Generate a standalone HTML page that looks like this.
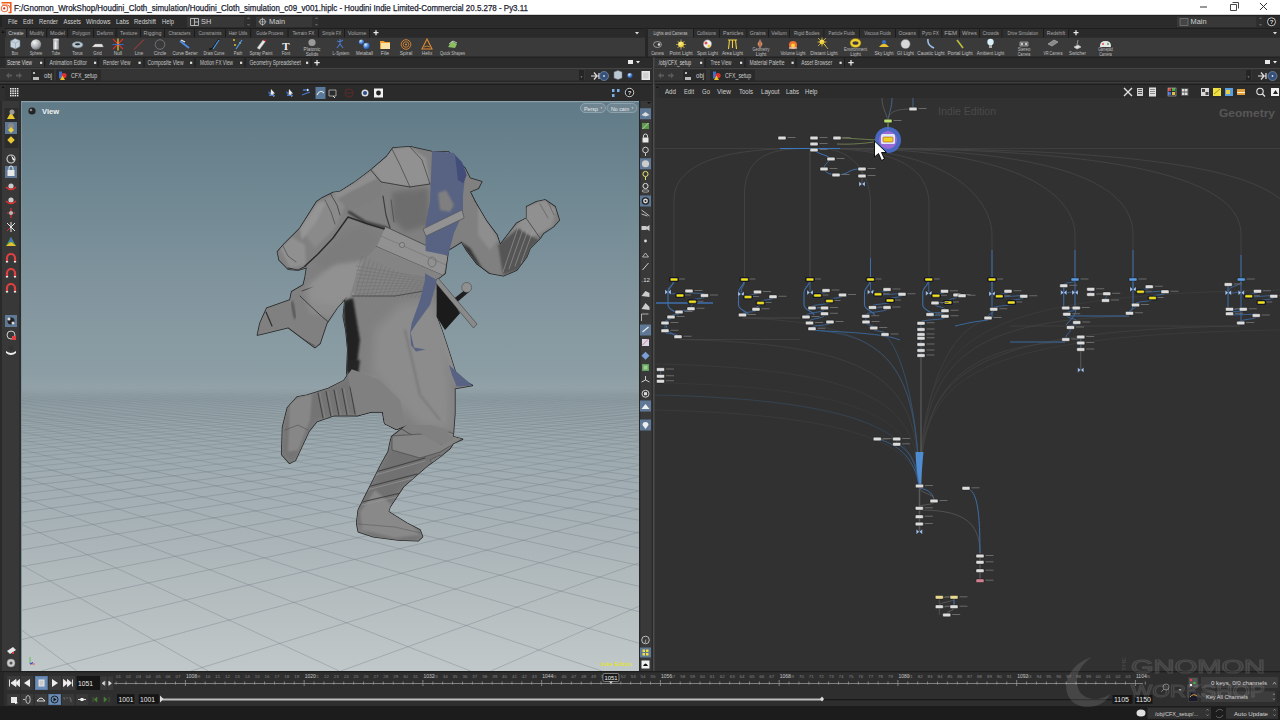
<!DOCTYPE html><html><head><meta charset="utf-8"><style>*{margin:0;padding:0;box-sizing:border-box}
html,body{width:1280px;height:720px;overflow:hidden;background:#2b2b2b;font-family:"Liberation Sans",sans-serif;color:#cfcfcf}
.a{position:absolute}
.t{position:absolute;white-space:nowrap}
</style></head><body>
<svg width="1280" height="720" viewBox="0 0 1280 720" style="position:absolute;left:0;top:0" font-family="Liberation Sans, sans-serif">
<rect x="0" y="0" width="1280" height="720" fill="#2b2b2b" />
<rect x="0" y="0" width="1280" height="15" fill="#ffffff" />
<path d="M1.5,2.8 H10.8 V12.5 H8.5" stroke="#f25a1a" fill="none" stroke-width="1.6" />
<path d="M2,5 H7.5 A3,3 0 0 1 10,8" stroke="#f26a30" fill="none" stroke-width="1.0" />
<circle cx="4.5" cy="8.5" r="3.2" fill="none" stroke="#f07040" stroke-width="1.1"/>
<circle cx="4.2" cy="8.4" r="1.1" fill="#e02010"/>
<text x="14" y="10.8" font-size="8.8" fill="#1b2332" text-anchor="start" font-weight="normal" textLength="514" lengthAdjust="spacingAndGlyphs" stroke="#1b2332" stroke-width="0.25">F:/Gnomon_WrokShop/Houdini_Cloth_simulation/Houdini_Cloth_simulation_c09_v001.hiplc - Houdini Indie Limited-Commercial 20.5.278 - Py3.11</text>
<rect x="1200" y="6.5" width="7" height="1" fill="#333" />
<path d="M1230.5,4.5 h6 v6 h-6 z M1232.5,2.5 h6 v6" stroke="#333" fill="none" stroke-width="0.9" />
<path d="M1260,3 L1267,10 M1267,3 L1260,10" stroke="#333" fill="none" stroke-width="1" />
<rect x="0" y="15" width="1280" height="13" fill="#2b2b2b" />
<rect x="0" y="14.8" width="1280" height="1.2" fill="#1f1f1f" />
<rect x="0" y="15" width="2" height="45" fill="#232323" />
<text x="8" y="24.3" font-size="7.6" fill="#d4d4d4" text-anchor="start" font-weight="normal" textLength="9.5" lengthAdjust="spacingAndGlyphs" >File</text>
<text x="23" y="24.3" font-size="7.6" fill="#d4d4d4" text-anchor="start" font-weight="normal" textLength="10" lengthAdjust="spacingAndGlyphs" >Edit</text>
<text x="39" y="24.3" font-size="7.6" fill="#d4d4d4" text-anchor="start" font-weight="normal" textLength="19" lengthAdjust="spacingAndGlyphs" >Render</text>
<text x="63.6" y="24.3" font-size="7.6" fill="#d4d4d4" text-anchor="start" font-weight="normal" textLength="17.4" lengthAdjust="spacingAndGlyphs" >Assets</text>
<text x="86" y="24.3" font-size="7.6" fill="#d4d4d4" text-anchor="start" font-weight="normal" textLength="24.6" lengthAdjust="spacingAndGlyphs" >Windows</text>
<text x="116" y="24.3" font-size="7.6" fill="#d4d4d4" text-anchor="start" font-weight="normal" textLength="13" lengthAdjust="spacingAndGlyphs" >Labs</text>
<text x="134" y="24.3" font-size="7.6" fill="#d4d4d4" text-anchor="start" font-weight="normal" textLength="22" lengthAdjust="spacingAndGlyphs" >Redshift</text>
<text x="162" y="24.3" font-size="7.6" fill="#d4d4d4" text-anchor="start" font-weight="normal" textLength="12" lengthAdjust="spacingAndGlyphs" >Help</text>
<rect x="187" y="16.5" width="64" height="10.5" fill="#383838" />
<rect x="244" y="16.5" width="7" height="10.5" fill="#2e2e2e" />
<path d="M190.5,18.5 h8 v7 h-8 z M194.5,18.5 v7 M194.5,22 h4" stroke="#cfcfcf" fill="none" stroke-width="0.8" />
<text x="201" y="24.2" font-size="7.4" fill="#d0d0d0" text-anchor="start" font-weight="normal" >SH</text>
<path d="M247.5,19 l1,-1.3 l1,1.3 M247.5,24 l1,1.3 l1,-1.3" stroke="#9a9a9a" fill="none" stroke-width="0.6" />
<rect x="256" y="16.5" width="63" height="10.5" fill="#383838" />
<rect x="312" y="16.5" width="7" height="10.5" fill="#2e2e2e" />
<circle cx="262.5" cy="21.8" r="2.8" fill="none" stroke="#cfcfcf" stroke-width="0.8"/>
<path d="M258.5,21.8 h8 M262.5,17.8 v8" stroke="#cfcfcf" fill="none" stroke-width="0.6" />
<text x="269" y="24.2" font-size="7.4" fill="#d0d0d0" text-anchor="start" font-weight="normal" >Main</text>
<path d="M315.5,19 l1,-1.3 l1,1.3 M315.5,24 l1,1.3 l1,-1.3" stroke="#9a9a9a" fill="none" stroke-width="0.6" />
<rect x="1177" y="16.5" width="87" height="10.5" fill="#383838" />
<rect x="1256" y="16.5" width="8" height="10.5" fill="#2e2e2e" />
<path d="M1180,18.5 h8 v7 h-8 z" stroke="#999" fill="#444" stroke-width="0.5" />
<text x="1190.5" y="24.2" font-size="7.4" fill="#d0d0d0" text-anchor="start" font-weight="normal" >Main</text>
<path d="M1259.5,19 l1,-1.3 l1,1.3 M1259.5,24 l1,1.3 l1,-1.3" stroke="#9a9a9a" fill="none" stroke-width="0.6" />
<circle cx="1271.5" cy="21.8" r="4" fill="#1a1a1a" stroke="#d8d8d8" stroke-width="0.9"/>
<text x="1271.5" y="24.3" font-size="6" fill="#e0e0e0" text-anchor="middle" font-weight="bold" >?</text>
<rect x="0" y="37.5" width="645" height="20" fill="#3a3a3a" />
<rect x="0" y="27" width="5" height="31" fill="#2d2d2d" />
<path d="M1.5,33 l1.5,-2.5 l1.5,2.5 z" stroke="none" fill="#111" stroke-width="1" />
<rect x="5" y="28" width="640" height="9.5" fill="#2a2a2a" />
<rect x="5" y="28" width="640" height="1" fill="#1e1e1e" />
<rect x="6" y="29" width="21" height="8.6" fill="#3a3a3a" />
<rect x="26" y="29" width="1" height="8.5" fill="#1c1c1c" />
<text x="16.0" y="35.3" font-size="5.6" fill="#c8c8c8" text-anchor="middle" font-weight="normal" textLength="15.54" lengthAdjust="spacingAndGlyphs" >Create</text>
<rect x="27.5" y="29" width="19.5" height="8.6" fill="#2f2f2f" />
<rect x="46" y="29" width="1" height="8.5" fill="#1c1c1c" />
<text x="36.75" y="35.3" font-size="5.6" fill="#a9a9a9" text-anchor="middle" font-weight="normal" textLength="14.43" lengthAdjust="spacingAndGlyphs" >Modify</text>
<rect x="48" y="29" width="20" height="8.6" fill="#2f2f2f" />
<rect x="67" y="29" width="1" height="8.5" fill="#1c1c1c" />
<text x="57.5" y="35.3" font-size="5.6" fill="#a9a9a9" text-anchor="middle" font-weight="normal" textLength="14.8" lengthAdjust="spacingAndGlyphs" >Model</text>
<rect x="69.5" y="29" width="24.5" height="8.6" fill="#2f2f2f" />
<rect x="93" y="29" width="1" height="8.5" fill="#1c1c1c" />
<text x="81.25" y="35.3" font-size="5.6" fill="#a9a9a9" text-anchor="middle" font-weight="normal" textLength="18.13" lengthAdjust="spacingAndGlyphs" >Polygon</text>
<rect x="94.5" y="29" width="22.0" height="8.6" fill="#2f2f2f" />
<rect x="115.5" y="29" width="1" height="8.5" fill="#1c1c1c" />
<text x="105.0" y="35.3" font-size="5.6" fill="#a9a9a9" text-anchor="middle" font-weight="normal" textLength="16.28" lengthAdjust="spacingAndGlyphs" >Deform</text>
<rect x="117.5" y="29" width="23.5" height="8.6" fill="#2f2f2f" />
<rect x="140" y="29" width="1" height="8.5" fill="#1c1c1c" />
<text x="128.75" y="35.3" font-size="5.6" fill="#a9a9a9" text-anchor="middle" font-weight="normal" textLength="17.39" lengthAdjust="spacingAndGlyphs" >Texture</text>
<rect x="141" y="29" width="24" height="8.6" fill="#2f2f2f" />
<rect x="164" y="29" width="1" height="8.5" fill="#1c1c1c" />
<text x="152.5" y="35.3" font-size="5.6" fill="#a9a9a9" text-anchor="middle" font-weight="normal" textLength="17.759999999999998" lengthAdjust="spacingAndGlyphs" >Rigging</text>
<rect x="165" y="29" width="30" height="8.6" fill="#2f2f2f" />
<rect x="194" y="29" width="1" height="8.5" fill="#1c1c1c" />
<text x="179.5" y="35.3" font-size="5.6" fill="#a9a9a9" text-anchor="middle" font-weight="normal" textLength="22.2" lengthAdjust="spacingAndGlyphs" >Characters</text>
<rect x="195" y="29" width="31" height="8.6" fill="#2f2f2f" />
<rect x="225" y="29" width="1" height="8.5" fill="#1c1c1c" />
<text x="210.0" y="35.3" font-size="5.6" fill="#a9a9a9" text-anchor="middle" font-weight="normal" textLength="22.94" lengthAdjust="spacingAndGlyphs" >Constraints</text>
<rect x="226" y="29" width="25" height="8.6" fill="#2f2f2f" />
<rect x="250" y="29" width="1" height="8.5" fill="#1c1c1c" />
<text x="238.0" y="35.3" font-size="5.6" fill="#a9a9a9" text-anchor="middle" font-weight="normal" textLength="18.5" lengthAdjust="spacingAndGlyphs" >Hair Utils</text>
<rect x="252" y="29" width="36.5" height="8.6" fill="#2f2f2f" />
<rect x="287.5" y="29" width="1" height="8.5" fill="#1c1c1c" />
<text x="269.75" y="35.3" font-size="5.6" fill="#a9a9a9" text-anchor="middle" font-weight="normal" textLength="27.009999999999998" lengthAdjust="spacingAndGlyphs" >Guide Process</text>
<rect x="289" y="29" width="30" height="8.6" fill="#2f2f2f" />
<rect x="318" y="29" width="1" height="8.5" fill="#1c1c1c" />
<text x="303.5" y="35.3" font-size="5.6" fill="#a9a9a9" text-anchor="middle" font-weight="normal" textLength="22.2" lengthAdjust="spacingAndGlyphs" >Terrain FX</text>
<rect x="319.5" y="29" width="25.5" height="8.6" fill="#2f2f2f" />
<rect x="344" y="29" width="1" height="8.5" fill="#1c1c1c" />
<text x="331.75" y="35.3" font-size="5.6" fill="#a9a9a9" text-anchor="middle" font-weight="normal" textLength="18.87" lengthAdjust="spacingAndGlyphs" >Simple FX</text>
<rect x="345" y="29" width="25" height="8.6" fill="#2f2f2f" />
<rect x="369" y="29" width="1" height="8.5" fill="#1c1c1c" />
<text x="357.0" y="35.3" font-size="5.6" fill="#a9a9a9" text-anchor="middle" font-weight="normal" textLength="18.5" lengthAdjust="spacingAndGlyphs" >Volume</text>
<path d="M373.5,32.7 h5 M376,30.2 v5" stroke="#e8e8e8" fill="none" stroke-width="1.3" />
<path d="M635,32 l2,2.5 l2,-2.5 z" stroke="none" fill="#ddd" stroke-width="1" />
<rect x="645" y="27" width="3" height="31" fill="#262626" />
<rect x="648" y="37.5" width="632" height="20" fill="#3a3a3a" />
<rect x="648" y="28" width="632" height="9.5" fill="#2a2a2a" />
<rect x="648" y="28" width="632" height="1" fill="#1e1e1e" />
<rect x="648" y="29" width="46" height="8.6" fill="#3a3a3a" />
<rect x="693" y="29" width="1" height="8.5" fill="#1c1c1c" />
<text x="670.5" y="35.3" font-size="5.6" fill="#c8c8c8" text-anchor="middle" font-weight="normal" textLength="34.04" lengthAdjust="spacingAndGlyphs" >Lights and Cameras</text>
<rect x="694" y="29" width="26" height="8.6" fill="#2f2f2f" />
<rect x="719" y="29" width="1" height="8.5" fill="#1c1c1c" />
<text x="706.5" y="35.3" font-size="5.6" fill="#a9a9a9" text-anchor="middle" font-weight="normal" textLength="19.24" lengthAdjust="spacingAndGlyphs" >Collisions</text>
<rect x="720" y="29" width="27.5" height="8.6" fill="#2f2f2f" />
<rect x="746.5" y="29" width="1" height="8.5" fill="#1c1c1c" />
<text x="733.25" y="35.3" font-size="5.6" fill="#a9a9a9" text-anchor="middle" font-weight="normal" textLength="20.35" lengthAdjust="spacingAndGlyphs" >Particles</text>
<rect x="747.5" y="29" width="21.5" height="8.6" fill="#2f2f2f" />
<rect x="768" y="29" width="1" height="8.5" fill="#1c1c1c" />
<text x="757.75" y="35.3" font-size="5.6" fill="#a9a9a9" text-anchor="middle" font-weight="normal" textLength="15.91" lengthAdjust="spacingAndGlyphs" >Grains</text>
<rect x="769" y="29" width="21" height="8.6" fill="#2f2f2f" />
<rect x="789" y="29" width="1" height="8.5" fill="#1c1c1c" />
<text x="779.0" y="35.3" font-size="5.6" fill="#a9a9a9" text-anchor="middle" font-weight="normal" textLength="15.54" lengthAdjust="spacingAndGlyphs" >Vellum</text>
<rect x="790" y="29" width="34.5" height="8.6" fill="#2f2f2f" />
<rect x="823.5" y="29" width="1" height="8.5" fill="#1c1c1c" />
<text x="806.75" y="35.3" font-size="5.6" fill="#a9a9a9" text-anchor="middle" font-weight="normal" textLength="25.53" lengthAdjust="spacingAndGlyphs" >Rigid Bodies</text>
<rect x="824.5" y="29" width="35.5" height="8.6" fill="#2f2f2f" />
<rect x="859" y="29" width="1" height="8.5" fill="#1c1c1c" />
<text x="841.75" y="35.3" font-size="5.6" fill="#a9a9a9" text-anchor="middle" font-weight="normal" textLength="26.27" lengthAdjust="spacingAndGlyphs" >Particle Fluids</text>
<rect x="860" y="29" width="36" height="8.6" fill="#2f2f2f" />
<rect x="895" y="29" width="1" height="8.5" fill="#1c1c1c" />
<text x="877.5" y="35.3" font-size="5.6" fill="#a9a9a9" text-anchor="middle" font-weight="normal" textLength="26.64" lengthAdjust="spacingAndGlyphs" >Viscous Fluids</text>
<rect x="896" y="29" width="23.5" height="8.6" fill="#2f2f2f" />
<rect x="918.5" y="29" width="1" height="8.5" fill="#1c1c1c" />
<text x="907.25" y="35.3" font-size="5.6" fill="#a9a9a9" text-anchor="middle" font-weight="normal" textLength="17.39" lengthAdjust="spacingAndGlyphs" >Oceans</text>
<rect x="919.5" y="29" width="23.0" height="8.6" fill="#2f2f2f" />
<rect x="941.5" y="29" width="1" height="8.5" fill="#1c1c1c" />
<text x="930.5" y="35.3" font-size="5.6" fill="#a9a9a9" text-anchor="middle" font-weight="normal" textLength="17.02" lengthAdjust="spacingAndGlyphs" >Pyro FX</text>
<rect x="942.5" y="29" width="17.5" height="8.6" fill="#2f2f2f" />
<rect x="959" y="29" width="1" height="8.5" fill="#1c1c1c" />
<text x="950.75" y="35.3" font-size="5.6" fill="#a9a9a9" text-anchor="middle" font-weight="normal" textLength="12.95" lengthAdjust="spacingAndGlyphs" >FEM</text>
<rect x="960" y="29" width="20" height="8.6" fill="#2f2f2f" />
<rect x="979" y="29" width="1" height="8.5" fill="#1c1c1c" />
<text x="969.5" y="35.3" font-size="5.6" fill="#a9a9a9" text-anchor="middle" font-weight="normal" textLength="14.8" lengthAdjust="spacingAndGlyphs" >Wires</text>
<rect x="980" y="29" width="22.5" height="8.6" fill="#2f2f2f" />
<rect x="1001.5" y="29" width="1" height="8.5" fill="#1c1c1c" />
<text x="990.75" y="35.3" font-size="5.6" fill="#a9a9a9" text-anchor="middle" font-weight="normal" textLength="16.65" lengthAdjust="spacingAndGlyphs" >Crowds</text>
<rect x="1002.5" y="29" width="41.5" height="8.6" fill="#2f2f2f" />
<rect x="1043" y="29" width="1" height="8.5" fill="#1c1c1c" />
<text x="1022.75" y="35.3" font-size="5.6" fill="#a9a9a9" text-anchor="middle" font-weight="normal" textLength="30.71" lengthAdjust="spacingAndGlyphs" >Drive Simulation</text>
<rect x="1044" y="29" width="25" height="8.6" fill="#2f2f2f" />
<rect x="1068" y="29" width="1" height="8.5" fill="#1c1c1c" />
<text x="1056.0" y="35.3" font-size="5.6" fill="#a9a9a9" text-anchor="middle" font-weight="normal" textLength="18.5" lengthAdjust="spacingAndGlyphs" >Redshift</text>
<path d="M1073.5,32.7 h5 M1076,30.2 v5" stroke="#e8e8e8" fill="none" stroke-width="1.3" />
<path d="M1273,32 l2,2.5 l2,-2.5 z" stroke="none" fill="#ddd" stroke-width="1" />
<defs>
<radialGradient id="gsph" cx="0.35" cy="0.3" r="0.8"><stop offset="0" stop-color="#f4f4f4"/><stop offset="0.6" stop-color="#a9adb2"/><stop offset="1" stop-color="#5e6368"/></radialGradient>
<radialGradient id="bsph" cx="0.35" cy="0.3" r="0.8"><stop offset="0" stop-color="#dfefff"/><stop offset="0.5" stop-color="#4f86d8"/><stop offset="1" stop-color="#1b3f86"/></radialGradient>
<radialGradient id="ysph" cx="0.4" cy="0.35" r="0.8"><stop offset="0" stop-color="#fffbd0"/><stop offset="0.5" stop-color="#f1d23a"/><stop offset="1" stop-color="#9b7a10"/></radialGradient>
<linearGradient id="gcyl" x1="0" x2="1"><stop offset="0" stop-color="#8c9196"/><stop offset="0.4" stop-color="#eef0f2"/><stop offset="1" stop-color="#7d8287"/></linearGradient>
</defs>
<path d="M10.5,41 l4.5,-2.5 l5,2 v6 l-4.5,2.5 l-5,-2 z" stroke="#6d7a84" fill="#c5d3dc" stroke-width="0.6" />
<path d="M10.5,41 l5,2 l4.5,-2.3 M15.5,43 v6" stroke="#8796a0" fill="none" stroke-width="0.5" />
<text x="15" y="55.2" font-size="5.2" fill="#c0c0c0" text-anchor="middle" font-weight="normal" textLength="6.300000000000001" lengthAdjust="spacingAndGlyphs" >Box</text>
<circle cx="36" cy="44.5" r="5.2" fill="url(#gsph)"/>
<text x="36" y="55.2" font-size="5.2" fill="#c0c0c0" text-anchor="middle" font-weight="normal" textLength="12.600000000000001" lengthAdjust="spacingAndGlyphs" >Sphere</text>
<path d="M53,39.5 h6 v10 h-6 z" stroke="none" fill="url(#gcyl)" stroke-width="1" />
<ellipse cx="56" cy="39.8" rx="3" ry="1.2" fill="#dfe3e6" stroke="#777" stroke-width="0.4"/>
<text x="56" y="55.2" font-size="5.2" fill="#c0c0c0" text-anchor="middle" font-weight="normal" textLength="8.4" lengthAdjust="spacingAndGlyphs" >Tube</text>
<ellipse cx="77.5" cy="44.8" rx="5.5" ry="3.2" fill="#b4c2cc" stroke="#5c6b76" stroke-width="0.6"/><ellipse cx="77.5" cy="44.3" rx="2.5" ry="1" fill="#1e2830"/>
<text x="77.5" y="55.2" font-size="5.2" fill="#c0c0c0" text-anchor="middle" font-weight="normal" textLength="10.5" lengthAdjust="spacingAndGlyphs" >Torus</text>
<path d="M92,47 l3,-3 h7 l1.5,3 z" stroke="#777" fill="#e6e6e6" stroke-width="0.4" />
<text x="97.5" y="55.2" font-size="5.2" fill="#c0c0c0" text-anchor="middle" font-weight="normal" textLength="8.4" lengthAdjust="spacingAndGlyphs" >Grid</text>
<path d="M113,39 l10,10 M123,39 l-10,10" stroke="#d93030" fill="none" stroke-width="1.1" />
<path d="M118,38.5 v12" stroke="#e8d020" fill="none" stroke-width="1.2" />
<path d="M112.5,44.5 h11" stroke="#3a6fd8" fill="none" stroke-width="0.9" />
<text x="118" y="55.2" font-size="5.2" fill="#c0c0c0" text-anchor="middle" font-weight="normal" textLength="8.4" lengthAdjust="spacingAndGlyphs" >Null</text>
<path d="M134,49.5 l10,-10" stroke="#c83a3a" fill="none" stroke-width="0.9" />
<text x="139" y="55.2" font-size="5.2" fill="#c0c0c0" text-anchor="middle" font-weight="normal" textLength="8.4" lengthAdjust="spacingAndGlyphs" >Line</text>
<circle cx="160" cy="44.5" r="4.8" fill="none" stroke="#7a8088" stroke-width="0.8"/>
<text x="160" y="55.2" font-size="5.2" fill="#c0c0c0" text-anchor="middle" font-weight="normal" textLength="12.600000000000001" lengthAdjust="spacingAndGlyphs" >Circle</text>
<path d="M180,41 l9,7" stroke="#4a8ae0" fill="none" stroke-width="2" />
<path d="M181,40 l4,2" stroke="#eee" fill="none" stroke-width="1.2" />
<text x="185" y="55.2" font-size="5.2" fill="#c0c0c0" text-anchor="middle" font-weight="normal" textLength="25.200000000000003" lengthAdjust="spacingAndGlyphs" >Curve Bezier</text>
<path d="M209,49 q3,1 5,-3 M214,46 l5,-7" stroke="#111" fill="none" stroke-width="1.2" />
<path d="M213,49 l6,-9" stroke="#4a9ae8" fill="none" stroke-width="1.2" />
<text x="214" y="55.2" font-size="5.2" fill="#c0c0c0" text-anchor="middle" font-weight="normal" textLength="21.0" lengthAdjust="spacingAndGlyphs" >Draw Curve</text>
<circle cx="234" cy="40" r="0.9" fill="#e8d030"/><circle cx="235" cy="45" r="0.9" fill="#e8d030"/><circle cx="240" cy="43" r="0.9" fill="#e8d030"/>
<path d="M236,49 l6,-9" stroke="#4a9ae8" fill="none" stroke-width="1.2" />
<text x="238" y="55.2" font-size="5.2" fill="#c0c0c0" text-anchor="middle" font-weight="normal" textLength="8.4" lengthAdjust="spacingAndGlyphs" >Path</text>
<path d="M257,48 l6,-8 l2.5,1.5 l-6,8 z" stroke="#888" fill="#e6e6e6" stroke-width="0.4" />
<path d="M263,40 l2.5,1.5 l1,-2" stroke="none" fill="#d02020" stroke-width="1" />
<text x="261" y="55.2" font-size="5.2" fill="#c0c0c0" text-anchor="middle" font-weight="normal" textLength="23.1" lengthAdjust="spacingAndGlyphs" >Spray Paint</text>
<text x="286" y="50" font-size="11" fill="#f0f0f0" text-anchor="middle" font-weight="bold" font-family="Liberation Serif">T</text>
<text x="286" y="55.2" font-size="5.2" fill="#c0c0c0" text-anchor="middle" font-weight="normal" textLength="8.4" lengthAdjust="spacingAndGlyphs" >Font</text>
<circle cx="312" cy="42.5" r="3.6" fill="#9a9a9a"/>
<text x="312" y="50.6" font-size="5.2" fill="#c0c0c0" text-anchor="middle" font-weight="normal" textLength="16.8" lengthAdjust="spacingAndGlyphs" >Platonic</text>
<text x="312" y="55.8" font-size="5.2" fill="#c0c0c0" text-anchor="middle" font-weight="normal" textLength="12.600000000000001" lengthAdjust="spacingAndGlyphs" >Solids</text>
<path d="M337,48 l3,-4 l3,4 M340,44 v-5 M337,41 l3,1 l3,-2" stroke="#4b78c8" fill="none" stroke-width="1.1" />
<text x="341" y="55.2" font-size="5.2" fill="#c0c0c0" text-anchor="middle" font-weight="normal" textLength="16.8" lengthAdjust="spacingAndGlyphs" >L-System</text>
<circle cx="361.5" cy="42" r="2.6" fill="url(#bsph)"/><circle cx="366.5" cy="46" r="3.2" fill="url(#bsph)"/>
<text x="364.5" y="55.2" font-size="5.2" fill="#c0c0c0" text-anchor="middle" font-weight="normal" textLength="16.8" lengthAdjust="spacingAndGlyphs" >Metaball</text>
<path d="M380,41 h4 l1,1 h5 v7 h-10 z" stroke="none" fill="#f0a030" stroke-width="1" />
<path d="M381,43 h9 v6 h-9 z" stroke="none" fill="#f7e3a8" stroke-width="1" />
<text x="385" y="55.2" font-size="5.2" fill="#c0c0c0" text-anchor="middle" font-weight="normal" textLength="8.4" lengthAdjust="spacingAndGlyphs" >File</text>
<circle cx="406" cy="44.5" r="4.8" fill="none" stroke="#e08a30" stroke-width="0.9"/><circle cx="406" cy="44.5" r="2.8" fill="none" stroke="#e08a30" stroke-width="0.8"/><circle cx="406" cy="44.5" r="1" fill="#e08a30"/>
<text x="406" y="55.2" font-size="5.2" fill="#c0c0c0" text-anchor="middle" font-weight="normal" textLength="12.600000000000001" lengthAdjust="spacingAndGlyphs" >Spiral</text>
<path d="M422,49 l5,-10 l5,10 z" stroke="#e08a30" fill="none" stroke-width="1.1" />
<path d="M424,47 q3,-2 6,0" stroke="#e08a30" fill="none" stroke-width="0.8" />
<text x="427" y="55.2" font-size="5.2" fill="#c0c0c0" text-anchor="middle" font-weight="normal" textLength="10.5" lengthAdjust="spacingAndGlyphs" >Helix</text>
<path d="M448,47 l4,-6 l5,3 l-2,4 z" stroke="none" fill="#8ac060" stroke-width="1" />
<path d="M449,44 l4,-3 l4,2" stroke="#e0e0e0" fill="none" stroke-width="0.8" />
<text x="452.5" y="55.2" font-size="5.2" fill="#c0c0c0" text-anchor="middle" font-weight="normal" textLength="25.200000000000003" lengthAdjust="spacingAndGlyphs" >Quick Shapes</text>
<ellipse cx="657.5" cy="44.5" rx="4" ry="3" fill="#3a3a3a" stroke="#bfbfbf" stroke-width="0.7"/><circle cx="659" cy="44.5" r="1.3" fill="#ddd"/>
<text x="657.5" y="55.2" font-size="5.2" fill="#c0c0c0" text-anchor="middle" font-weight="normal" textLength="12.600000000000001" lengthAdjust="spacingAndGlyphs" >Camera</text>
<circle cx="681" cy="44.5" r="3" fill="url(#ysph)"/>
<path d="M676,44.5 h10 M681,39.5 v10 M677.5,41 l7,7 M684.5,41 l-7,7" stroke="#f2df70" fill="none" stroke-width="0.6" />
<text x="681" y="55.2" font-size="5.2" fill="#c0c0c0" text-anchor="middle" font-weight="normal" textLength="23.1" lengthAdjust="spacingAndGlyphs" >Point Light</text>
<circle cx="707.5" cy="44" r="4.2" fill="#f0f0f0" stroke="#777" stroke-width="0.5"/><circle cx="706" cy="43" r="1.5" fill="#e05050"/><circle cx="709" cy="46" r="1.6" fill="#f0c840"/>
<text x="707.5" y="55.2" font-size="5.2" fill="#c0c0c0" text-anchor="middle" font-weight="normal" textLength="21.0" lengthAdjust="spacingAndGlyphs" >Spot Light</text>
<path d="M728,40 h9 M729.5,40 l-1,9 M735.5,40 l1,9 M732.5,40 v8" stroke="#f0d040" fill="none" stroke-width="1.1" />
<text x="732.5" y="55.2" font-size="5.2" fill="#c0c0c0" text-anchor="middle" font-weight="normal" textLength="21.0" lengthAdjust="spacingAndGlyphs" >Area Light</text>
<path d="M760,39 l-2.5,5 l2.5,5 l2.5,-5 z" stroke="none" fill="#e09040" stroke-width="1" />
<path d="M760,40 v8" stroke="#6050c0" fill="none" stroke-width="0.8" />
<text x="761" y="50.6" font-size="5.2" fill="#c0c0c0" text-anchor="middle" font-weight="normal" textLength="16.8" lengthAdjust="spacingAndGlyphs" >Geometry</text>
<text x="761" y="55.8" font-size="5.2" fill="#c0c0c0" text-anchor="middle" font-weight="normal" textLength="10.5" lengthAdjust="spacingAndGlyphs" >Light</text>
<circle cx="793" cy="45" r="4" fill="#f07030"/><circle cx="793" cy="45.5" r="2" fill="#ffd040"/>
<path d="M789,48 h8" stroke="#eee" fill="none" stroke-width="1" />
<text x="793" y="55.2" font-size="5.2" fill="#c0c0c0" text-anchor="middle" font-weight="normal" textLength="25.200000000000003" lengthAdjust="spacingAndGlyphs" >Volume Light</text>
<circle cx="822" cy="42" r="2.5" fill="url(#ysph)"/>
<path d="M818,38 l8,8 M822,37.5 v9 M817.5,42 h9 M818,46 l8,-8 M824,44 l4,5" stroke="#f0d040" fill="none" stroke-width="0.7" />
<text x="824" y="55.2" font-size="5.2" fill="#c0c0c0" text-anchor="middle" font-weight="normal" textLength="27.3" lengthAdjust="spacingAndGlyphs" >Distant Light</text>
<ellipse cx="855.5" cy="43" rx="5.5" ry="4.5" fill="#f1cf30" stroke="#7a6010" stroke-width="0.5"/><ellipse cx="855.5" cy="43" rx="3" ry="1.8" fill="#3a3a3a"/>
<text x="855.5" y="50.6" font-size="5.2" fill="#c0c0c0" text-anchor="middle" font-weight="normal" textLength="23.1" lengthAdjust="spacingAndGlyphs" >Environment</text>
<text x="855.5" y="55.8" font-size="5.2" fill="#c0c0c0" text-anchor="middle" font-weight="normal" textLength="10.5" lengthAdjust="spacingAndGlyphs" >Light</text>
<path d="M879,47 q5,-7 10,0 z" stroke="none" fill="#e8c030" stroke-width="1" />
<circle cx="884" cy="42" r="2" fill="#3a70c0"/>
<text x="884" y="55.2" font-size="5.2" fill="#c0c0c0" text-anchor="middle" font-weight="normal" textLength="18.900000000000002" lengthAdjust="spacingAndGlyphs" >Sky Light</text>
<circle cx="905.5" cy="44" r="4.6" fill="#d8d8d8" stroke="#888" stroke-width="0.5"/>
<text x="905.5" y="55.2" font-size="5.2" fill="#c0c0c0" text-anchor="middle" font-weight="normal" textLength="16.8" lengthAdjust="spacingAndGlyphs" >GI Light</text>
<path d="M928,39 q-1,5 4,8 l2,1" stroke="#9cc0e8" fill="none" stroke-width="1.6" />
<text x="931" y="55.2" font-size="5.2" fill="#c0c0c0" text-anchor="middle" font-weight="normal" textLength="27.3" lengthAdjust="spacingAndGlyphs" >Caustic Light</text>
<path d="M957,40 l6,8" stroke="#c0c040" fill="none" stroke-width="1.6" />
<text x="960" y="55.2" font-size="5.2" fill="#c0c0c0" text-anchor="middle" font-weight="normal" textLength="25.200000000000003" lengthAdjust="spacingAndGlyphs" >Portal Light</text>
<circle cx="990.5" cy="42" r="3.2" fill="#d8f0f8"/>
<path d="M989,45 h3 v3 h-3 z" stroke="none" fill="#aaa" stroke-width="1" />
<text x="990.5" y="55.2" font-size="5.2" fill="#c0c0c0" text-anchor="middle" font-weight="normal" textLength="27.3" lengthAdjust="spacingAndGlyphs" >Ambient Light</text>
<path d="M1020,42 h8 v4 h-8 z" stroke="#ccc" fill="#555" stroke-width="0.6" />
<circle cx="1022" cy="44" r="1.2" fill="#ccc"/><circle cx="1026" cy="44" r="1.2" fill="#ccc"/>
<text x="1024" y="50.6" font-size="5.2" fill="#c0c0c0" text-anchor="middle" font-weight="normal" textLength="12.600000000000001" lengthAdjust="spacingAndGlyphs" >Stereo</text>
<text x="1024" y="55.8" font-size="5.2" fill="#c0c0c0" text-anchor="middle" font-weight="normal" textLength="12.600000000000001" lengthAdjust="spacingAndGlyphs" >Camera</text>
<path d="M1048,44 l6,-4 l4,2 l-6,4 z" stroke="#ccc" fill="#888" stroke-width="0.5" />
<text x="1053" y="55.2" font-size="5.2" fill="#c0c0c0" text-anchor="middle" font-weight="normal" textLength="18.900000000000002" lengthAdjust="spacingAndGlyphs" >VR Camera</text>
<path d="M1074,47 l4,-2 l3,2 l-4,2 z M1077,45 l1,-5" stroke="#ccc" fill="#ddd" stroke-width="0.6" />
<text x="1077.5" y="55.2" font-size="5.2" fill="#c0c0c0" text-anchor="middle" font-weight="normal" textLength="16.8" lengthAdjust="spacingAndGlyphs" >Switcher</text>
<path d="M1100,46 q0,-5 5.5,-5 q5.5,0 5.5,5 q0,2 -2,1 h-7 q-2,1 -2,-1 z" stroke="none" fill="#e6e6e6" stroke-width="1" />
<circle cx="1103" cy="44" r="0.9" fill="#e04040"/><circle cx="1108" cy="44" r="0.9" fill="#40a040"/>
<text x="1105.5" y="50.6" font-size="5.2" fill="#c0c0c0" text-anchor="middle" font-weight="normal" textLength="14.700000000000001" lengthAdjust="spacingAndGlyphs" >Gamepad</text>
<text x="1105.5" y="55.8" font-size="5.2" fill="#c0c0c0" text-anchor="middle" font-weight="normal" textLength="12.600000000000001" lengthAdjust="spacingAndGlyphs" >Camera</text>
<rect x="0" y="56.5" width="1280" height="1.5" fill="#222222" />
<rect x="0" y="58" width="1280" height="9.5" fill="#2b2b2b" />
<rect x="652" y="57.5" width="1" height="614" fill="#2a2a2a" />
<rect x="653" y="57.5" width="1.6" height="614" fill="#4c4c4c" />
<rect x="5.5" y="58" width="38.5" height="9.5" fill="#363636" />
<rect x="44" y="58" width="1" height="9.5" fill="#1e1e1e" />
<text x="7" y="65" font-size="6.3" fill="#d6d6d6" text-anchor="start" font-weight="normal" textLength="25" lengthAdjust="spacingAndGlyphs" >Scene View</text>
<rect x="40" y="61.7" width="2.2" height="2.2" fill="#e0e0e0" />
<rect x="45.5" y="58" width="52.0" height="9.5" fill="#2f2f2f" />
<rect x="97.5" y="58" width="1" height="9.5" fill="#1e1e1e" />
<text x="49.5" y="65" font-size="6.3" fill="#c4c4c4" text-anchor="start" font-weight="normal" textLength="37.5" lengthAdjust="spacingAndGlyphs" >Animation Editor</text>
<rect x="94" y="61.7" width="2.2" height="2.2" fill="#e0e0e0" />
<rect x="99.5" y="58" width="44.0" height="9.5" fill="#2f2f2f" />
<rect x="143.5" y="58" width="1" height="9.5" fill="#1e1e1e" />
<text x="103" y="65" font-size="6.3" fill="#c4c4c4" text-anchor="start" font-weight="normal" textLength="27.5" lengthAdjust="spacingAndGlyphs" >Render View</text>
<rect x="138.5" y="61.7" width="2.2" height="2.2" fill="#e0e0e0" />
<rect x="145" y="58" width="49.5" height="9.5" fill="#2f2f2f" />
<rect x="194.5" y="58" width="1" height="9.5" fill="#1e1e1e" />
<text x="147.5" y="65" font-size="6.3" fill="#c4c4c4" text-anchor="start" font-weight="normal" textLength="36" lengthAdjust="spacingAndGlyphs" >Composite View</text>
<rect x="190" y="61.7" width="2.2" height="2.2" fill="#e0e0e0" />
<rect x="196" y="58" width="48.5" height="9.5" fill="#2f2f2f" />
<rect x="244.5" y="58" width="1" height="9.5" fill="#1e1e1e" />
<text x="200" y="65" font-size="6.3" fill="#c4c4c4" text-anchor="start" font-weight="normal" textLength="33" lengthAdjust="spacingAndGlyphs" >Motion FX View</text>
<rect x="240" y="61.7" width="2.2" height="2.2" fill="#e0e0e0" />
<rect x="246" y="58" width="64.5" height="9.5" fill="#2f2f2f" />
<rect x="310.5" y="58" width="1" height="9.5" fill="#1e1e1e" />
<text x="249.5" y="65" font-size="6.3" fill="#c4c4c4" text-anchor="start" font-weight="normal" textLength="51.5" lengthAdjust="spacingAndGlyphs" >Geometry Spreadsheet</text>
<rect x="306" y="61.7" width="2.2" height="2.2" fill="#e0e0e0" />
<path d="M314.3,62.7 h5.4 M317,60 v5.4" stroke="#e8e8e8" fill="none" stroke-width="1.3" />
<rect x="628" y="60" width="5" height="4" fill="#e8e8e8" />
<path d="M636,61 l2,2.5 l2,-2.5 z" stroke="none" fill="#eee" stroke-width="1" />
<rect x="655" y="58" width="49.5" height="9.5" fill="#363636" />
<rect x="704.5" y="58" width="1" height="9.5" fill="#1e1e1e" />
<text x="658.75" y="65" font-size="6.3" fill="#d6d6d6" text-anchor="start" font-weight="normal" textLength="32.5" lengthAdjust="spacingAndGlyphs" >/obj/CFX_setup</text>
<rect x="700" y="61.7" width="2.2" height="2.2" fill="#e0e0e0" />
<rect x="706" y="58" width="38.5" height="9.5" fill="#2f2f2f" />
<rect x="744.5" y="58" width="1" height="9.5" fill="#1e1e1e" />
<text x="710.5" y="65" font-size="6.3" fill="#c4c4c4" text-anchor="start" font-weight="normal" textLength="21" lengthAdjust="spacingAndGlyphs" >Tree View</text>
<rect x="740" y="61.7" width="2.2" height="2.2" fill="#e0e0e0" />
<rect x="746" y="58" width="49.5" height="9.5" fill="#2f2f2f" />
<rect x="795.5" y="58" width="1" height="9.5" fill="#1e1e1e" />
<text x="749.5" y="65" font-size="6.3" fill="#c4c4c4" text-anchor="start" font-weight="normal" textLength="35" lengthAdjust="spacingAndGlyphs" >Material Palette</text>
<rect x="791.5" y="61.7" width="2.2" height="2.2" fill="#e0e0e0" />
<rect x="797" y="58" width="47" height="9.5" fill="#2f2f2f" />
<rect x="844" y="58" width="1" height="9.5" fill="#1e1e1e" />
<text x="801.25" y="65" font-size="6.3" fill="#c4c4c4" text-anchor="start" font-weight="normal" textLength="31" lengthAdjust="spacingAndGlyphs" >Asset Browser</text>
<rect x="839.5" y="61.7" width="2.2" height="2.2" fill="#e0e0e0" />
<path d="M848.3,62.7 h5.4 M851,60 v5.4" stroke="#e8e8e8" fill="none" stroke-width="1.3" />
<rect x="1265" y="60" width="5" height="4" fill="#e8e8e8" />
<path d="M1273,61 l2,2.5 l2,-2.5 z" stroke="none" fill="#eee" stroke-width="1" />
<rect x="0" y="67.5" width="652" height="16.5" fill="#2e2e2e" />
<rect x="0" y="68.1" width="652" height="1" fill="#474747" />
<rect x="0" y="69.2" width="585" height="11.6" fill="#353535" />
<rect x="0" y="80.8" width="652" height="0.9" fill="#252525" />
<rect x="0" y="82.1" width="652" height="0.9" fill="#404040" />
<path d="M6,75.5 l3,-3 v2 h3 v2 h-3 v2 z M22,75.5 l-3,-3 v2 h-3 v2 h3 v2 z" stroke="none" fill="#5a5a5a" stroke-width="1" />
<rect x="31" y="69.7" width="23" height="11.4" fill="#2a2a2a" />
<path d="M33,72 h2 v2 h-2 z M33,77 h6 v3 h-6 z" stroke="none" fill="#bbb" stroke-width="1" />
<text x="44" y="78.3" font-size="6.6" fill="#d0d0d0" text-anchor="start" font-weight="normal" textLength="8.2" lengthAdjust="spacingAndGlyphs" >obj</text>
<rect x="56" y="69.7" width="45" height="11.4" fill="#2a2a2a" />
<path d="M59,71.5 l3,0 v7 h-3 z" stroke="none" fill="#3b6fd0" stroke-width="1" />
<circle cx="64" cy="75.5" r="2.6" fill="#e03030"/>
<path d="M60,80 l2.5,-4.5 l2.5,4.5 z" stroke="none" fill="#f0c020" stroke-width="1" />
<text x="71" y="78.3" font-size="6.6" fill="#d0d0d0" text-anchor="start" font-weight="normal" textLength="26.2" lengthAdjust="spacingAndGlyphs" >CFX_setup</text>
<rect x="579" y="70" width="5" height="10.5" fill="#252525" />
<path d="M580.5,76.5 l1,1.2 l1,-1.2 z" stroke="none" fill="#aaa" stroke-width="1" />
<rect x="654.6" y="67.5" width="625.4" height="16.5" fill="#2e2e2e" />
<rect x="654.6" y="68.1" width="625.4" height="1" fill="#474747" />
<rect x="654.6" y="69.2" width="597.4" height="11.6" fill="#353535" />
<rect x="654.6" y="80.8" width="625.4" height="0.9" fill="#252525" />
<rect x="654.6" y="82.1" width="625.4" height="0.9" fill="#404040" />
<path d="M658,75.5 l3,-3 v2 h3 v2 h-3 v2 z M674,75.5 l-3,-3 v2 h-3 v2 h3 v2 z" stroke="none" fill="#5a5a5a" stroke-width="1" />
<rect x="683" y="69.7" width="23" height="11.4" fill="#2a2a2a" />
<path d="M685,72 h2 v2 h-2 z M685,77 h6 v3 h-6 z" stroke="none" fill="#bbb" stroke-width="1" />
<text x="696" y="78.3" font-size="6.6" fill="#d0d0d0" text-anchor="start" font-weight="normal" textLength="8.2" lengthAdjust="spacingAndGlyphs" >obj</text>
<rect x="710" y="69.7" width="45" height="11.4" fill="#2a2a2a" />
<path d="M713,71.5 l3,0 v7 h-3 z" stroke="none" fill="#3b6fd0" stroke-width="1" />
<circle cx="718" cy="75.5" r="2.6" fill="#e03030"/>
<path d="M714,80 l2.5,-4.5 l2.5,4.5 z" stroke="none" fill="#f0c020" stroke-width="1" />
<text x="725" y="78.3" font-size="6.6" fill="#d0d0d0" text-anchor="start" font-weight="normal" textLength="26.2" lengthAdjust="spacingAndGlyphs" >CFX_setup</text>
<rect x="1246" y="70" width="5" height="10.5" fill="#252525" />
<path d="M1247.5,76.5 l1,1.2 l1,-1.2 z" stroke="none" fill="#aaa" stroke-width="1" />
<path d="M591,76 h8 M594,72.5 l3,3.5 l-3,3.5 M599,73 v6" stroke="#e0e0e0" fill="none" stroke-width="1.2" />
<circle cx="604" cy="76" r="4.5" fill="#35507a" stroke="#8aa0c0" stroke-width="0.6"/><circle cx="604" cy="76" r="0.9" fill="#ddd"/>
<path d="M614,72 l4,-1.5 l4,1.5 v6 l-4,1.5 l-4,-1.5 z" stroke="#778" fill="#b9c8d4" stroke-width="0.5" />
<circle cx="630" cy="75.5" r="2.6" fill="url(#bsph)"/>
<rect x="641.5" y="71" width="8.5" height="9" fill="#e6e6e6" />
<rect x="643" y="72.5" width="5.5" height="6" fill="#cfcfcf" />
<path d="M1258,76 h8 M1261,72.5 l3,3.5 l-3,3.5 M1266,73 v6" stroke="#e0e0e0" fill="none" stroke-width="1.2" />
<circle cx="1272.5" cy="76" r="4.5" fill="#35507a" stroke="#8aa0c0" stroke-width="0.6"/><circle cx="1272.5" cy="76" r="0.9" fill="#ddd"/>
<rect x="0" y="84" width="652" height="17" fill="#2b2b2b" />
<rect x="0" y="84" width="652" height="1" fill="#1e1e1e" />
<rect x="0" y="85" width="5" height="16" fill="#2f2f2f" />
<path d="M1.5,88 l1.5,-2 l1.5,2 z" stroke="none" fill="#111" stroke-width="1" />
<rect x="10.0" y="88.0" width="1.5" height="1.5" fill="#f4f4f4" />
<rect x="10.0" y="90.3" width="1.5" height="1.5" fill="#f4f4f4" />
<rect x="10.0" y="92.6" width="1.5" height="1.5" fill="#f4f4f4" />
<rect x="10.0" y="94.9" width="1.5" height="1.5" fill="#f4f4f4" />
<rect x="12.3" y="88.0" width="1.5" height="1.5" fill="#f4f4f4" />
<rect x="12.3" y="90.3" width="1.5" height="1.5" fill="#f4f4f4" />
<rect x="12.3" y="92.6" width="1.5" height="1.5" fill="#f4f4f4" />
<rect x="12.3" y="94.9" width="1.5" height="1.5" fill="#f4f4f4" />
<rect x="14.6" y="88.0" width="1.5" height="1.5" fill="#f4f4f4" />
<rect x="14.6" y="90.3" width="1.5" height="1.5" fill="#f4f4f4" />
<rect x="14.6" y="92.6" width="1.5" height="1.5" fill="#f4f4f4" />
<rect x="14.6" y="94.9" width="1.5" height="1.5" fill="#f4f4f4" />
<rect x="16.9" y="88.0" width="1.5" height="1.5" fill="#f4f4f4" />
<rect x="16.9" y="90.3" width="1.5" height="1.5" fill="#f4f4f4" />
<rect x="16.9" y="92.6" width="1.5" height="1.5" fill="#f4f4f4" />
<rect x="16.9" y="94.9" width="1.5" height="1.5" fill="#f4f4f4" />
<path d="M268,91 l3,2 l-2,2 z" stroke="none" fill="#3a6ab8" stroke-width="1" />
<path d="M271,89 l4,4.5 l-2,0.3 l1.5,2.5 l-1,0.5 l-1.5,-2.5 l-1.5,1.5 z" stroke="none" fill="#eaeaea" stroke-width="1" />
<path d="M269,95.5 h6" stroke="#4a7ad0" fill="none" stroke-width="1" />
<path d="M286,91 l3,2 l-2,2 z" stroke="none" fill="#3a6ab8" stroke-width="1" />
<path d="M289,89 l4,4.5 l-2,0.3 l1.5,2.5 l-1,0.5 l-1.5,-2.5 l-1.5,1.5 z" stroke="none" fill="#eaeaea" stroke-width="1" />
<path d="M287,95.5 h6" stroke="#4a7ad0" fill="none" stroke-width="1" />
<path d="M302,95 l8,-3 M303,90 l6,0" stroke="#4a7ad0" fill="none" stroke-width="1.3" />
<path d="M307,88.5 l2,1.5 l-2,1.5 z" stroke="none" fill="#eee" stroke-width="1" />
<rect x="315.5" y="87" width="10" height="12" fill="#5a7a9c" />
<path d="M317,95 q3,-6 7,-2" stroke="#ddd" fill="none" stroke-width="1.2" />
<path d="M329,90 h7 v6 h-7 z" stroke="#ccc" fill="none" stroke-width="0.7" />
<path d="M333,96 l2,2" stroke="#ddd" fill="none" stroke-width="1" />
<circle cx="349" cy="93" r="4" fill="none" stroke="#6a2a2a" stroke-width="0.8"/>
<path d="M345.5,93 h7" stroke="#6a2a2a" fill="none" stroke-width="0.7" />
<circle cx="365" cy="93" r="3.5" fill="#ddd"/><circle cx="365" cy="93" r="2" fill="#2a4a8a"/>
<rect x="374" y="88.5" width="9" height="9" fill="#f0f0f0" />
<circle cx="378.5" cy="93" r="2.4" fill="#222"/>
<path d="M612,89 h2.5 v3 h-2.5 z M617,89 h2.5 v3 h-2.5 z M612,94 h2.5 v3 h-2.5 z" stroke="none" fill="#7ab0e8" stroke-width="1" />
<circle cx="629.5" cy="92.5" r="4.2" fill="#1a1a1a" stroke="#ddd" stroke-width="0.9"/>
<text x="629.5" y="95" font-size="6" fill="#e8e8e8" text-anchor="middle" font-weight="bold" >?</text>
<rect x="655" y="84" width="625" height="14" fill="#2c2c2c" />
<rect x="655" y="84" width="625" height="1" fill="#1e1e1e" />
<rect x="655" y="85" width="4" height="13" fill="#2f2f2f" />
<path d="M656,88 l1.3,-2 l1.3,2 z" stroke="none" fill="#111" stroke-width="1" />
<text x="665" y="94.2" font-size="7" fill="#cfcfcf" text-anchor="start" font-weight="normal" textLength="11" lengthAdjust="spacingAndGlyphs" >Add</text>
<text x="684" y="94.2" font-size="7" fill="#cfcfcf" text-anchor="start" font-weight="normal" textLength="10" lengthAdjust="spacingAndGlyphs" >Edit</text>
<text x="702" y="94.2" font-size="7" fill="#cfcfcf" text-anchor="start" font-weight="normal" textLength="8" lengthAdjust="spacingAndGlyphs" >Go</text>
<text x="717" y="94.2" font-size="7" fill="#cfcfcf" text-anchor="start" font-weight="normal" textLength="14" lengthAdjust="spacingAndGlyphs" >View</text>
<text x="739" y="94.2" font-size="7" fill="#cfcfcf" text-anchor="start" font-weight="normal" textLength="14" lengthAdjust="spacingAndGlyphs" >Tools</text>
<text x="761" y="94.2" font-size="7" fill="#cfcfcf" text-anchor="start" font-weight="normal" textLength="18.5" lengthAdjust="spacingAndGlyphs" >Layout</text>
<text x="786" y="94.2" font-size="7" fill="#cfcfcf" text-anchor="start" font-weight="normal" textLength="13" lengthAdjust="spacingAndGlyphs" >Labs</text>
<text x="805" y="94.2" font-size="7" fill="#cfcfcf" text-anchor="start" font-weight="normal" textLength="12.5" lengthAdjust="spacingAndGlyphs" >Help</text>
<path d="M1124,88 l8,8 M1132,88 l-8,8" stroke="#e0e0e0" fill="none" stroke-width="1.4" />
<rect x="1137" y="88" width="6" height="8" fill="#cfcfcf" />
<rect x="1138" y="89" width="4" height="1" fill="#555" />
<rect x="1138" y="91" width="4" height="1" fill="#555" />
<rect x="1138" y="93" width="4" height="1" fill="#555" />
<rect x="1149" y="87.5" width="7" height="9" fill="#e0e0e0" />
<rect x="1150" y="89" width="5" height="0.8" fill="#777" />
<rect x="1150" y="91" width="5" height="0.8" fill="#777" />
<rect x="1150" y="93" width="5" height="0.8" fill="#777" />
<rect x="1168" y="88" width="3" height="3" fill="#e04040" />
<rect x="1172" y="88" width="3" height="3" fill="#40b040" />
<rect x="1168" y="92" width="3" height="3" fill="#4070e0" />
<rect x="1172" y="92" width="3" height="3" fill="#e0c040" />
<rect x="1168" y="88" width="8" height="8" fill="none" stroke="#ccc" stroke-width="0.5"/>
<rect x="1181" y="88" width="7.5" height="8" fill="#555" />
<rect x="1182" y="89" width="2.5" height="2.5" fill="#ddd" />
<rect x="1185" y="89" width="2.5" height="2.5" fill="#ddd" />
<rect x="1182" y="92.5" width="2.5" height="2.5" fill="#ddd" />
<rect x="1185" y="92.5" width="2.5" height="2.5" fill="#ddd" />
<rect x="1201" y="88" width="8" height="8" fill="#d8d8d8" />
<rect x="1202" y="89" width="3" height="3" fill="#444" />
<rect x="1205.5" y="92" width="3" height="3" fill="#444" />
<rect x="1213" y="88" width="8" height="8" fill="#f0e040" />
<path d="M1214,94 l6,-5" stroke="#7a6a10" fill="none" stroke-width="0.6" />
<rect x="1225" y="88" width="8" height="8" fill="#5aa0e0" />
<rect x="1226" y="90" width="4" height="4" fill="#e8d040" />
<rect x="1237" y="89" width="8" height="6" fill="#e0a040" />
<rect x="1237" y="92" width="8" height="1" fill="#fff0c0" />
<circle cx="1260" cy="91.5" r="3.2" fill="none" stroke="#e8e8e8" stroke-width="1.1"/>
<path d="M1262.5,94 l2.5,2.5" stroke="#e8e8e8" fill="none" stroke-width="1.3" />
<rect x="1271" y="88" width="8" height="8" fill="#f0f0f0" />
<path d="M1273,94 l2.5,-4 l2.5,4 z" stroke="none" fill="#222" stroke-width="1" />
<defs><linearGradient id="vpg" x1="0" y1="0" x2="0" y2="1"><stop offset="0" stop-color="#607a87"/><stop offset="0.174" stop-color="#718993"/><stop offset="0.349" stop-color="#83969f"/><stop offset="0.49" stop-color="#8d9fa5"/><stop offset="0.51" stop-color="#93a3a9"/><stop offset="0.56" stop-color="#98a6ac"/><stop offset="0.70" stop-color="#a3afb4"/><stop offset="0.875" stop-color="#b5bdbf"/><stop offset="1" stop-color="#c0c8c9"/></linearGradient><clipPath id="vpclip"><rect x="21" y="101" width="618" height="570"/></clipPath></defs>
<rect x="21" y="101" width="618" height="570" fill="url(#vpg)" />
<g clip-path="url(#vpclip)">
<path d="M76.8,671.0L21.0,629.6M208.1,671.0L21.0,564.6M490.8,671.0L639.0,606.3M339.4,671.0L21.0,524.1M340.9,671.0L639.0,562.8M470.7,671.0L21.0,496.5M190.9,671.0L639.0,532.0M601.9,671.0L21.0,476.4M41.0,671.0L639.0,508.9M639.0,643.2L45.9,468.5M21.0,639.7L639.0,491.1M639.0,611.7L94.4,468.5M21.0,610.5L639.0,476.8M639.0,586.3L142.8,468.5M21.0,586.6L622.1,468.5M639.0,565.4L191.3,468.5M21.0,566.7L566.8,468.5M639.0,547.9L239.8,468.5M21.0,549.9L511.4,468.5M639.0,533.0L288.2,468.5M21.0,535.5L456.1,468.5M639.0,520.2L336.7,468.5M21.0,523.1L400.7,468.5M639.0,509.1L385.2,468.5M21.0,512.2L345.3,468.5M639.0,499.3L433.6,468.5M21.0,502.6L290.0,468.5M639.0,490.7L482.1,468.5M21.0,494.1L234.6,468.5M639.0,483.0L530.6,468.5M21.0,486.4L179.3,468.5M639.0,476.1L579.0,468.5M21.0,479.6L123.9,468.5M639.0,469.9L627.5,468.5M21.0,473.4L68.5,468.5" stroke="#6f7b81" stroke-width="1.0" fill="none" opacity="0.36"/>
<path d="M45.9,468.5L21.0,461.2M94.4,468.5L21.0,449.2M142.8,468.5L21.0,439.6M622.1,468.5L639.0,465.2M191.3,468.5L21.0,431.7M566.8,468.5L639.0,455.5M239.8,468.5L21.0,425.0M511.4,468.5L639.0,447.3M288.2,468.5L21.0,419.4M456.1,468.5L639.0,440.3M336.7,468.5L21.0,414.5M400.7,468.5L639.0,434.3M385.2,468.5L37.3,412.9M345.3,468.5L639.0,429.0M433.6,468.5L63.0,412.9M290.0,468.5L639.0,424.3M482.1,468.5L88.8,412.9M234.6,468.5L639.0,420.1M530.6,468.5L114.5,412.9M179.3,468.5L639.0,416.4M579.0,468.5L140.2,412.9M123.9,468.5L639.0,413.1M627.5,468.5L165.9,412.9M68.5,468.5L611.3,412.9M639.0,464.3L191.7,412.9M21.0,467.7L581.9,412.9M639.0,459.1L217.4,412.9M21.0,462.6L552.6,412.9M639.0,454.5L243.1,412.9M21.0,457.9L523.2,412.9M639.0,450.2L268.8,412.9M21.0,453.6L493.8,412.9M639.0,446.2L294.6,412.9M21.0,449.6L464.4,412.9M639.0,442.5L320.3,412.9M21.0,445.9L435.0,412.9M639.0,439.2L346.0,412.9M21.0,442.4L405.6,412.9M639.0,436.0L371.8,412.9M21.0,439.2L376.2,412.9M639.0,433.1L397.5,412.9M21.0,436.2L346.8,412.9M639.0,430.3L423.2,412.9M21.0,433.5L317.4,412.9M639.0,427.8L448.9,412.9M21.0,430.8L288.1,412.9M639.0,425.4L474.7,412.9M21.0,428.4L258.7,412.9M639.0,423.1L500.4,412.9M21.0,426.1L229.3,412.9M639.0,421.0L526.1,412.9M21.0,423.9L199.9,412.9M639.0,419.0L551.9,412.9M21.0,421.8L170.5,412.9M639.0,417.1L577.6,412.9M21.0,419.9L141.1,412.9M639.0,415.3L603.3,412.9M21.0,418.0L111.7,412.9M639.0,413.5L629.0,412.9M21.0,416.3L82.3,412.9M21.0,414.6L52.9,412.9M21.0,413.0L23.6,412.9" stroke="#6f7b81" stroke-width="1.0" fill="none" opacity="0.29"/>
<path d="M37.3,412.9L21.0,410.3M63.0,412.9L21.0,406.6M88.8,412.9L21.0,403.3M114.5,412.9L21.0,400.4M140.2,412.9L21.0,397.8M165.9,412.9L21.0,395.5M611.3,412.9L639.0,410.1M191.7,412.9L21.0,393.3M581.9,412.9L639.0,407.3M217.4,412.9L34.2,392.8M552.6,412.9L639.0,404.8M243.1,412.9L51.7,392.8M523.2,412.9L639.0,402.5M268.8,412.9L69.2,392.8M493.8,412.9L639.0,400.4M294.6,412.9L86.7,392.8M464.4,412.9L639.0,398.5M320.3,412.9L104.2,392.8M435.0,412.9L639.0,396.7M346.0,412.9L121.7,392.8M405.6,412.9L639.0,395.0M371.8,412.9L139.3,392.8M376.2,412.9L639.0,393.4M397.5,412.9L156.8,392.8M346.8,412.9L627.4,392.8M423.2,412.9L174.3,392.8M317.4,412.9L607.4,392.8M448.9,412.9L191.8,392.8M288.1,412.9L587.4,392.8M474.7,412.9L209.3,392.8M258.7,412.9L567.4,392.8M500.4,412.9L226.8,392.8M229.3,412.9L547.4,392.8M526.1,412.9L244.3,392.8M199.9,412.9L527.4,392.8M551.9,412.9L261.8,392.8M170.5,412.9L507.4,392.8M577.6,412.9L279.4,392.8M141.1,412.9L487.4,392.8M603.3,412.9L296.9,392.8M111.7,412.9L467.4,392.8M629.0,412.9L314.4,392.8M82.3,412.9L447.4,392.8M639.0,411.9L331.9,392.8M52.9,412.9L427.4,392.8M639.0,410.4L349.4,392.8M23.6,412.9L407.4,392.8M639.0,408.9L366.9,392.8M21.0,411.5L387.4,392.8M639.0,407.5L384.4,392.8M21.0,410.1L367.4,392.8M639.0,406.2L401.9,392.8M21.0,408.7L347.4,392.8M639.0,404.9L419.5,392.8M21.0,407.4L327.4,392.8M639.0,403.7L437.0,392.8M21.0,406.2L307.4,392.8M639.0,402.6L454.5,392.8M21.0,405.0L287.4,392.8M639.0,401.5L472.0,392.8M21.0,403.8L267.4,392.8M639.0,400.4L489.5,392.8M21.0,402.7L247.4,392.8M639.0,399.4L507.0,392.8M21.0,401.7L227.4,392.8M639.0,398.4L524.5,392.8M21.0,400.7L207.3,392.8M639.0,397.4L542.0,392.8M21.0,399.7L187.3,392.8M639.0,396.5L559.6,392.8M21.0,398.7L167.3,392.8M639.0,395.7L577.1,392.8M21.0,397.8L147.3,392.8M639.0,394.8L594.6,392.8M21.0,397.0L127.3,392.8M639.0,394.0L612.1,392.8M21.0,396.1L107.3,392.8M639.0,393.2L629.6,392.8M21.0,395.3L87.3,392.8M21.0,394.5L67.3,392.8M21.0,393.8L47.3,392.8M21.0,393.0L27.3,392.8" stroke="#6f7b81" stroke-width="1.0" fill="none" opacity="0.22"/>
<path d="M34.2,392.8L21.0,391.4M51.7,392.8L21.0,389.6M69.2,392.8L21.0,388.0M86.7,392.8L21.0,386.5M104.2,392.8L21.0,385.1M121.7,392.8L34.4,385.0M139.3,392.8L48.7,385.0M156.8,392.8L63.0,385.0M627.4,392.8L639.0,392.0M174.3,392.8L77.3,385.0M607.4,392.8L639.0,390.6M191.8,392.8L91.7,385.0M587.4,392.8L639.0,389.4M209.3,392.8L106.0,385.0M567.4,392.8L639.0,388.2M226.8,392.8L120.3,385.0M547.4,392.8L639.0,387.0M244.3,392.8L134.6,385.0M527.4,392.8L639.0,386.0M261.8,392.8L148.9,385.0M507.4,392.8L638.6,385.0M279.4,392.8L163.2,385.0M487.4,392.8L622.3,385.0M296.9,392.8L177.5,385.0M467.4,392.8L605.9,385.0M314.4,392.8L191.8,385.0M447.4,392.8L589.6,385.0M331.9,392.8L206.2,385.0M427.4,392.8L573.2,385.0M349.4,392.8L220.5,385.0M407.4,392.8L556.9,385.0M366.9,392.8L234.8,385.0M387.4,392.8L540.5,385.0M384.4,392.8L249.1,385.0M367.4,392.8L524.2,385.0M401.9,392.8L263.4,385.0M347.4,392.8L507.8,385.0M419.5,392.8L277.7,385.0M327.4,392.8L491.5,385.0M437.0,392.8L292.0,385.0M307.4,392.8L475.1,385.0M454.5,392.8L306.3,385.0M287.4,392.8L458.8,385.0M472.0,392.8L320.7,385.0M267.4,392.8L442.4,385.0M489.5,392.8L335.0,385.0M247.4,392.8L426.1,385.0M507.0,392.8L349.3,385.0M227.4,392.8L409.7,385.0M524.5,392.8L363.6,385.0M207.3,392.8L393.4,385.0M542.0,392.8L377.9,385.0M187.3,392.8L377.0,385.0M559.6,392.8L392.2,385.0M167.3,392.8L360.7,385.0M577.1,392.8L406.5,385.0M147.3,392.8L344.3,385.0M594.6,392.8L420.8,385.0M127.3,392.8L328.0,385.0M612.1,392.8L435.2,385.0M107.3,392.8L311.6,385.0M629.6,392.8L449.5,385.0M87.3,392.8L295.3,385.0M639.0,392.5L463.8,385.0M67.3,392.8L278.9,385.0M639.0,391.7L478.1,385.0M47.3,392.8L262.6,385.0M639.0,391.0L492.4,385.0M27.3,392.8L246.2,385.0M639.0,390.4L506.7,385.0M21.0,392.3L229.9,385.0M639.0,389.7L521.0,385.0M21.0,391.7L213.5,385.0M639.0,389.1L535.4,385.0M21.0,391.0L197.2,385.0M639.0,388.5L549.7,385.0M21.0,390.4L180.8,385.0M639.0,387.9L564.0,385.0M21.0,389.7L164.5,385.0M639.0,387.3L578.3,385.0M21.0,389.1L148.1,385.0M639.0,386.7L592.6,385.0M21.0,388.5L131.8,385.0M639.0,386.2L606.9,385.0M21.0,388.0L115.4,385.0M639.0,385.6L621.2,385.0M21.0,387.4L99.1,385.0M639.0,385.1L635.5,385.0M21.0,386.9L82.7,385.0M21.0,386.4L66.4,385.0M21.0,385.9L50.0,385.0M21.0,385.4L33.7,385.0" stroke="#6f7b81" stroke-width="1.0" fill="none" opacity="0.14"/>
<rect x="21" y="372" width="618" height="28" fill="url(#fog)"/>
<defs><linearGradient id="fog" x1="0" y1="0" x2="0" y2="1"><stop offset="0" stop-color="#8d9fa5" stop-opacity="0"/><stop offset="0.55" stop-color="#92a2a8" stop-opacity="1"/><stop offset="1" stop-color="#95a4aa" stop-opacity="0"/></linearGradient></defs>
<defs><filter id="dark9" color-interpolation-filters="sRGB"><feComponentTransfer><feFuncR type="linear" slope="0.9"/><feFuncG type="linear" slope="0.9"/><feFuncB type="linear" slope="0.9"/></feComponentTransfer></filter></defs>
<g filter="url(#dark9)">
<defs><filter id="bl1" x="-20%" y="-20%" width="140%" height="140%"><feGaussianBlur stdDeviation="1.2"/></filter><filter id="bl2" x="-30%" y="-30%" width="160%" height="160%"><feGaussianBlur stdDeviation="2.5"/></filter><filter id="bl4" x="-30%" y="-30%" width="160%" height="160%"><feGaussianBlur stdDeviation="4"/></filter></defs>
<defs><clipPath id="chclip"><path d="M393.0,148.0 L410.0,146.7 L432.5,151.7 L448.3,151.7 L465.0,168.3 L470.0,178.3 L481.7,181.7 L478.3,188.3 L470.0,191.7 L475.0,201.7 L478.0,215.0 L486.7,221.7 L496.7,235.0 L500.0,245.0 L490.0,273.3 L476.7,263.3 L466.7,250.0 L461.7,241.7 L448.3,250.0 L445.0,273.3 L438.3,278.3 L436.7,316.7 L441.7,330.0 L448.3,350.0 L456.8,376.7 L472.3,385.4 L454.8,388.4 L454.8,413.7 L452.9,439.0 L441.2,444.8 L406.2,425.3 L396.5,429.2 L384.8,423.4 L382.8,411.7 L371.2,411.7 L357.5,415.6 L346.8,372.8 L347.8,349.5 L345.9,330.0 L343.3,316.7 L345.0,300.0 L348.3,295.0 L336.7,308.3 L326.7,323.3 L320.0,343.3 L315.0,347.5 L305.0,340.0 L288.3,327.5 L265.0,333.3 L257.5,335.0 L260.0,323.3 L266.7,308.3 L290.0,300.0 L291.7,291.7 L303.3,285.0 L305.0,278.3 L306.7,267.5 L298.3,270.0 L288.3,269.2 L279.2,260.0 L277.5,251.7 L285.0,243.3 L300.0,228.3 L316.7,201.7 L321.7,198.3 L333.3,192.5 L340.0,191.7 L353.3,183.3 L370.0,170.8 L386.7,156.7 Z M475.0,201.7 L486.7,221.7 L496.7,235.0 L500.0,245.0 L516.7,223.3 L526.7,218.3 L526.7,206.7 L536.7,201.7 L545.0,200.0 L555.0,206.7 L559.2,220.0 L553.3,226.7 L543.3,233.3 L540.0,238.3 L530.0,248.3 L526.7,256.7 L516.7,270.0 L503.3,275.8 L490.0,273.3 L476.7,263.3 L466.7,250.0 L461.7,241.7 Z M351.7,368.9 L343.9,380.6 L328.4,388.4 L307.0,395.2 L297.2,397.1 L287.5,407.8 L282.6,427.3 L281.7,454.5 L289.5,463.3 L295.3,460.4 L308.9,431.2 L316.7,421.4 L334.2,415.6 L357.5,415.6 L371.2,411.7 L382.8,411.7 L384.8,423.4 L396.5,429.2 L406.2,425.3 L400.0,400.0 L380.0,380.0 Z M391.7,436.7 L390.0,443.3 L388.3,451.7 L381.7,463.3 L373.3,480.0 L365.0,496.7 L358.3,510.0 L356.7,523.3 L358.3,531.7 L373.3,536.7 L398.3,540.0 L418.3,540.8 L422.5,536.7 L420.0,530.0 L406.7,523.3 L388.3,511.7 L390.0,506.7 L403.3,486.7 L416.7,475.0 L428.3,465.0 L440.0,456.7 L450.0,448.3 L453.3,443.3 L462.5,439.2 L446.7,435.0 L450.0,430.0 L430.0,425.0 L406.2,425.3 Z"/></clipPath></defs>
<path d="M393.0,148.0 L410.0,146.7 L432.5,151.7 L448.3,151.7 L465.0,168.3 L470.0,178.3 L481.7,181.7 L478.3,188.3 L470.0,191.7 L475.0,201.7 L478.0,215.0 L486.7,221.7 L496.7,235.0 L500.0,245.0 L490.0,273.3 L476.7,263.3 L466.7,250.0 L461.7,241.7 L448.3,250.0 L445.0,273.3 L438.3,278.3 L436.7,316.7 L441.7,330.0 L448.3,350.0 L456.8,376.7 L472.3,385.4 L454.8,388.4 L454.8,413.7 L452.9,439.0 L441.2,444.8 L406.2,425.3 L396.5,429.2 L384.8,423.4 L382.8,411.7 L371.2,411.7 L357.5,415.6 L346.8,372.8 L347.8,349.5 L345.9,330.0 L343.3,316.7 L345.0,300.0 L348.3,295.0 L336.7,308.3 L326.7,323.3 L320.0,343.3 L315.0,347.5 L305.0,340.0 L288.3,327.5 L265.0,333.3 L257.5,335.0 L260.0,323.3 L266.7,308.3 L290.0,300.0 L291.7,291.7 L303.3,285.0 L305.0,278.3 L306.7,267.5 L298.3,270.0 L288.3,269.2 L279.2,260.0 L277.5,251.7 L285.0,243.3 L300.0,228.3 L316.7,201.7 L321.7,198.3 L333.3,192.5 L340.0,191.7 L353.3,183.3 L370.0,170.8 L386.7,156.7 Z" fill="#2a2a2a" stroke="#2a2a2a" stroke-width="1.6" stroke-linejoin="round"/>
<path d="M475.0,201.7 L486.7,221.7 L496.7,235.0 L500.0,245.0 L516.7,223.3 L526.7,218.3 L526.7,206.7 L536.7,201.7 L545.0,200.0 L555.0,206.7 L559.2,220.0 L553.3,226.7 L543.3,233.3 L540.0,238.3 L530.0,248.3 L526.7,256.7 L516.7,270.0 L503.3,275.8 L490.0,273.3 L476.7,263.3 L466.7,250.0 L461.7,241.7 Z" fill="#2a2a2a" stroke="#2a2a2a" stroke-width="1.6" stroke-linejoin="round"/>
<path d="M351.7,368.9 L343.9,380.6 L328.4,388.4 L307.0,395.2 L297.2,397.1 L287.5,407.8 L282.6,427.3 L281.7,454.5 L289.5,463.3 L295.3,460.4 L308.9,431.2 L316.7,421.4 L334.2,415.6 L357.5,415.6 L371.2,411.7 L382.8,411.7 L384.8,423.4 L396.5,429.2 L406.2,425.3 L400.0,400.0 L380.0,380.0 Z" fill="#2a2a2a" stroke="#2a2a2a" stroke-width="1.6" stroke-linejoin="round"/>
<path d="M391.7,436.7 L390.0,443.3 L388.3,451.7 L381.7,463.3 L373.3,480.0 L365.0,496.7 L358.3,510.0 L356.7,523.3 L358.3,531.7 L373.3,536.7 L398.3,540.0 L418.3,540.8 L422.5,536.7 L420.0,530.0 L406.7,523.3 L388.3,511.7 L390.0,506.7 L403.3,486.7 L416.7,475.0 L428.3,465.0 L440.0,456.7 L450.0,448.3 L453.3,443.3 L462.5,439.2 L446.7,435.0 L450.0,430.0 L430.0,425.0 L406.2,425.3 Z" fill="#2a2a2a" stroke="#2a2a2a" stroke-width="1.6" stroke-linejoin="round"/>
<path d="M393.0,148.0 L410.0,146.7 L432.5,151.7 L448.3,151.7 L465.0,168.3 L470.0,178.3 L481.7,181.7 L478.3,188.3 L470.0,191.7 L475.0,201.7 L478.0,215.0 L486.7,221.7 L496.7,235.0 L500.0,245.0 L490.0,273.3 L476.7,263.3 L466.7,250.0 L461.7,241.7 L448.3,250.0 L445.0,273.3 L438.3,278.3 L436.7,316.7 L441.7,330.0 L448.3,350.0 L456.8,376.7 L472.3,385.4 L454.8,388.4 L454.8,413.7 L452.9,439.0 L441.2,444.8 L406.2,425.3 L396.5,429.2 L384.8,423.4 L382.8,411.7 L371.2,411.7 L357.5,415.6 L346.8,372.8 L347.8,349.5 L345.9,330.0 L343.3,316.7 L345.0,300.0 L348.3,295.0 L336.7,308.3 L326.7,323.3 L320.0,343.3 L315.0,347.5 L305.0,340.0 L288.3,327.5 L265.0,333.3 L257.5,335.0 L260.0,323.3 L266.7,308.3 L290.0,300.0 L291.7,291.7 L303.3,285.0 L305.0,278.3 L306.7,267.5 L298.3,270.0 L288.3,269.2 L279.2,260.0 L277.5,251.7 L285.0,243.3 L300.0,228.3 L316.7,201.7 L321.7,198.3 L333.3,192.5 L340.0,191.7 L353.3,183.3 L370.0,170.8 L386.7,156.7 Z" fill="#8f8f8f"/>
<path d="M475.0,201.7 L486.7,221.7 L496.7,235.0 L500.0,245.0 L516.7,223.3 L526.7,218.3 L526.7,206.7 L536.7,201.7 L545.0,200.0 L555.0,206.7 L559.2,220.0 L553.3,226.7 L543.3,233.3 L540.0,238.3 L530.0,248.3 L526.7,256.7 L516.7,270.0 L503.3,275.8 L490.0,273.3 L476.7,263.3 L466.7,250.0 L461.7,241.7 Z" fill="#8f8f8f"/>
<path d="M351.7,368.9 L343.9,380.6 L328.4,388.4 L307.0,395.2 L297.2,397.1 L287.5,407.8 L282.6,427.3 L281.7,454.5 L289.5,463.3 L295.3,460.4 L308.9,431.2 L316.7,421.4 L334.2,415.6 L357.5,415.6 L371.2,411.7 L382.8,411.7 L384.8,423.4 L396.5,429.2 L406.2,425.3 L400.0,400.0 L380.0,380.0 Z" fill="#8f8f8f"/>
<path d="M391.7,436.7 L390.0,443.3 L388.3,451.7 L381.7,463.3 L373.3,480.0 L365.0,496.7 L358.3,510.0 L356.7,523.3 L358.3,531.7 L373.3,536.7 L398.3,540.0 L418.3,540.8 L422.5,536.7 L420.0,530.0 L406.7,523.3 L388.3,511.7 L390.0,506.7 L403.3,486.7 L416.7,475.0 L428.3,465.0 L440.0,456.7 L450.0,448.3 L453.3,443.3 L462.5,439.2 L446.7,435.0 L450.0,430.0 L430.0,425.0 L406.2,425.3 Z" fill="#8f8f8f"/>
<g clip-path="url(#chclip)">
<path d="M352.0,372.0 L344.0,381.0 L328.0,388.0 L307.0,395.0 L297.0,397.0 L288.0,408.0 L283.0,427.0 L282.0,454.0 L290.0,462.0 L296.0,459.0 L309.0,431.0 L317.0,421.0 L334.0,415.6 L357.0,415.0 L371.0,412.0 Z" fill="#7e7e7e" filter="url(#bl2)" opacity="0.8"/>
<path d="M391.0,437.0 L388.0,452.0 L373.0,480.0 L358.0,510.0 L357.0,523.0 L372.0,536.0 L398.0,540.0 L418.0,540.0 L421.0,532.0 L406.0,523.0 L390.0,507.0 L403.0,487.0 L428.0,465.0 L450.0,448.0 L446.0,436.0 Z" fill="#7a7a7a" filter="url(#bl2)" opacity="0.8"/>
<path d="M372.0,170.0 L392.0,149.0 L410.0,147.0 L426.0,158.0 L430.0,184.0 L410.0,187.0 L381.0,182.0 Z" fill="#a2a2a2" filter="url(#bl1)"/>
<path d="M333.0,193.0 L355.0,182.0 L372.0,170.0 L381.0,182.0 L380.0,196.0 L360.0,206.0 L340.0,212.0 Z" fill="#8c8c8c" filter="url(#bl1)"/>
<path d="M300.0,228.0 L318.0,202.0 L334.0,195.0 L345.0,206.0 L335.0,228.0 L315.0,248.0 Z" fill="#9a9a9a" filter="url(#bl1)"/>
<path d="M280.0,248.0 L292.0,237.0 L305.0,245.0 L306.0,265.0 L290.0,268.0 Z" fill="#a0a0a0" filter="url(#bl1)"/>
<path d="M392.0,192.0 L428.0,188.0 L430.0,225.0 L405.0,232.0 L392.0,218.0 Z" fill="#7a7a7a" filter="url(#bl2)"/>
<path d="M375.0,330.0 L400.0,305.0 L430.0,300.0 L445.0,330.0 L450.0,390.0 L450.0,430.0 L420.0,425.0 L395.0,400.0 L372.0,370.0 Z" fill="#9c9c9c" filter="url(#bl4)"/>
<path d="M440.0,300.0 L455.0,330.0 L470.0,380.0 L455.0,382.0 L440.0,340.0 Z" fill="#9e9e9e" filter="url(#bl2)"/>
<path d="M505.0,240.0 L520.0,222.0 L526.0,207.0 L545.0,200.0 L556.0,210.0 L552.0,226.0 L535.0,236.0 Z" fill="#a0a0a0" filter="url(#bl1)"/>
<path d="M478.0,205.0 L490.0,225.0 L498.0,240.0 L490.0,250.0 L478.0,235.0 Z" fill="#9e9e9e" filter="url(#bl1)"/>
<path d="M305.0,290.0 L335.0,262.0 L370.0,262.0 L352.0,300.0 L330.0,318.0 L310.0,312.0 Z" fill="#9c9c9c" filter="url(#bl2)"/>
<path d="M352.0,372.0 L380.0,378.0 L400.0,400.0 L404.0,424.0 L385.0,422.0 L372.0,410.0 L355.0,405.0 Z" fill="#999999" filter="url(#bl2)"/>
<path d="M290.0,402.0 L300.0,397.0 L312.0,394.0 L310.0,420.0 L298.0,450.0 L288.0,452.0 Z" fill="#979797" filter="url(#bl1)"/>
<path d="M360.0,512.0 L375.0,490.0 L392.0,505.0 L410.0,522.0 L420.0,535.0 L395.0,538.0 L362.0,530.0 Z" fill="#999999" filter="url(#bl1)"/>
<path d="M349.0,212.0 L365.0,222.0 L387.0,228.0" fill="none" stroke="#333" stroke-width="2.2" stroke-linecap="round" stroke-linejoin="round" filter="url(#bl1)"/>
<path d="M383.0,196.0 L386.0,215.0 L390.0,228.0" fill="none" stroke="#444" stroke-width="1.2" stroke-linecap="round" stroke-linejoin="round" />
<path d="M391.0,200.0 L394.0,222.0" fill="none" stroke="#555" stroke-width="0.8" stroke-linecap="round" stroke-linejoin="round" />
<path d="M343.0,300.0 L353.0,298.0 L360.0,340.0 L356.0,372.0 L347.0,372.0 Z" fill="#262626" filter="url(#bl1)"/>
<path d="M461.0,242.0 L470.0,248.0 L482.0,268.0 L492.0,276.0 L470.0,275.0 L458.0,255.0 Z" fill="#3c3c3c" filter="url(#bl1)"/>
<path d="M498.0,245.0 L518.0,228.0 L530.0,236.0 L540.0,240.0 L530.0,256.0 L518.0,270.0 L503.0,275.0 Z" fill="#5e5e5e" filter="url(#bl1)"/>
<path d="M347.0,360.0 L360.0,360.0 L358.0,376.0 L348.0,376.0 Z" fill="#2a2a2a" filter="url(#bl1)"/>
<path d="M302.0,291.0 L318.0,285.0 L333.0,279.0" fill="none" stroke="#444" stroke-width="0.9" stroke-linecap="round" stroke-linejoin="round" />
<path d="M300.0,296.0 L320.0,315.0 L338.0,330.0" fill="none" stroke="#3e3e3e" stroke-width="0.9" stroke-linecap="round" stroke-linejoin="round" />
<path d="M292.0,302.0 L295.0,318.0" fill="none" stroke="#3a3a3a" stroke-width="1.4" stroke-linecap="round" stroke-linejoin="round" filter="url(#bl1)"/>
<path d="M266.0,312.0 L272.0,326.0" fill="none" stroke="#333" stroke-width="1.2" stroke-linecap="round" stroke-linejoin="round" />
<path d="M288.0,329.0 L300.0,337.0 L315.0,346.0" fill="none" stroke="#555" stroke-width="0.8" stroke-linecap="round" stroke-linejoin="round" />
<path d="M395.0,425.0 L420.0,440.0 L445.0,445.0" fill="none" stroke="#555" stroke-width="0.9" stroke-linecap="round" stroke-linejoin="round" />
<path d="M405.0,330.0 L412.0,360.0 L420.0,395.0 L440.0,420.0" fill="none" stroke="#7a7a7a" stroke-width="1.2" stroke-linecap="round" stroke-linejoin="round" filter="url(#bl1)"/>
<path d="M312.0,262.0 L328.0,246.0 L345.0,232.0 L362.0,226.0 L382.0,236.0 L372.0,255.0 L350.0,262.0 L325.0,270.0 Z" fill="#8a8a8a" filter="url(#bl2)"/>
<path d="M310.0,285.0 L335.0,265.0 L372.0,262.0 L360.0,290.0 L335.0,305.0 L312.0,300.0 Z" fill="#a2a2a2" filter="url(#bl2)"/>
<path d="M305.0,266.0 L318.0,254.0 L333.0,238.0 L348.0,217.0 L368.0,224.0 L388.0,230.0" fill="none" stroke="#2e2e2e" stroke-width="1.4" stroke-linecap="round" stroke-linejoin="round" />
<path d="M288.0,268.0 L298.0,270.0 L306.0,266.0" fill="none" stroke="#333" stroke-width="1.0" stroke-linecap="round" stroke-linejoin="round" />
<path d="M325.0,200.0 L331.0,212.0 L335.0,224.0" fill="none" stroke="#555" stroke-width="0.8" stroke-linecap="round" stroke-linejoin="round" />
<path d="M334.0,193.0 L356.0,182.0 L372.0,170.0 L378.0,178.0 L350.0,192.0 L336.0,200.0 Z" fill="#9e9e9e" filter="url(#bl1)"/>
<path d="M300.0,229.0 L318.0,203.0 L326.0,202.0 L316.0,222.0 L302.0,240.0 Z" fill="#a6a6a6" filter="url(#bl1)"/>
<path d="M385.6,226.7 L447.8,255.6 L443.3,275.6 L376.7,246.7 Z" fill="#a2a2a2" />
<path d="M385.6,226.7 L447.8,255.6" fill="none" stroke="#4a4a4a" stroke-width="0.8" stroke-linecap="round" stroke-linejoin="round" />
<path d="M376.7,246.7 L443.3,275.6" fill="none" stroke="#4a4a4a" stroke-width="0.8" stroke-linecap="round" stroke-linejoin="round" />
<path d="M381.0,236.0 L446.0,265.0" fill="none" stroke="#777" stroke-width="0.5" stroke-linecap="round" stroke-linejoin="round" />
<circle cx="402" cy="245" r="2.6" fill="#a8a8a8" stroke="#555" stroke-width="0.5"/>
<ellipse cx="432" cy="262" rx="4" ry="5" fill="none" stroke="#666" stroke-width="0.6"/>
<path d="M423.0,229.0 L462.0,210.0 L464.0,218.0 L426.0,236.0 Z" fill="#a3a3a3" stroke="#555" stroke-width="0.5"/>
<path d="M376.7,246.7 L443.3,275.6 L436.0,285.0 L423.0,290.0 L360.0,298.0 L352.0,292.0 L362.0,262.0 Z" fill="#939393" />
<path d="M362,256.0 L350,298M366,257.7 L354,298M370,259.4 L358,298M374,261.1 L362,298M378,262.8 L366,298M382,264.5 L370,298M386,266.2 L374,298M390,267.9 L378,298M394,269.6 L382,298M398,271.3 L386,298M402,273.0 L390,298M406,274.7 L394,298M410,276.4 L398,298M414,278.1 L402,298M418,279.8 L406,298M422,281.5 L410,298M426,283.2 L414,298M430,284.9 L418,298M434,286.6 L422,298M438,288.3 L426,298M442,290.0 L430,298M446,291.7 L434,298" stroke="#7c7c7c" stroke-width="0.45"/>
<path d="M356,266 L440,280.0M356,270 L440,281.2M356,274 L440,282.4M356,278 L440,283.6M356,282 L440,284.8M356,286 L440,286.0M356,290 L440,287.2M356,294 L440,288.4" stroke="#7c7c7c" stroke-width="0.45"/>
<path d="M352.0,296.0 L395.0,296.0 L430.0,290.0" fill="none" stroke="#4a4a4a" stroke-width="0.8" stroke-linecap="round" stroke-linejoin="round" />
<path d="M370.0,169.0 L381.0,182.0 L410.0,187.0 L430.0,184.0" fill="none" stroke="#303030" stroke-width="0.8" stroke-linecap="round" stroke-linejoin="round" />
<path d="M392.0,149.0 L400.0,165.0 L410.0,187.0" fill="none" stroke="#3a3a3a" stroke-width="0.6" stroke-linecap="round" stroke-linejoin="round" />
<path d="M410.0,147.0 L422.0,160.0 L430.0,184.0" fill="none" stroke="#3a3a3a" stroke-width="0.6" stroke-linecap="round" stroke-linejoin="round" />
<path d="M330.0,193.0 L337.0,205.0 L340.0,215.0" fill="none" stroke="#3a3a3a" stroke-width="0.7" stroke-linecap="round" stroke-linejoin="round" />
<path d="M283.0,246.0 L288.0,256.0 L296.0,262.0" fill="none" stroke="#444" stroke-width="0.6" stroke-linecap="round" stroke-linejoin="round" />
<path d="M318.0,393.0 L323.0,418.0" fill="none" stroke="#4a4a4a" stroke-width="1.1" stroke-linecap="round" stroke-linejoin="round" />
<path d="M320.0,393.0 L325.0,418.0" fill="none" stroke="#a0a0a0" stroke-width="0.5" stroke-linecap="round" stroke-linejoin="round" />
<path d="M326.0,391.5 L331.0,417.0" fill="none" stroke="#4a4a4a" stroke-width="1.1" stroke-linecap="round" stroke-linejoin="round" />
<path d="M328.0,391.5 L333.0,417.0" fill="none" stroke="#a0a0a0" stroke-width="0.5" stroke-linecap="round" stroke-linejoin="round" />
<path d="M334.0,390.0 L339.0,416.0" fill="none" stroke="#4a4a4a" stroke-width="1.1" stroke-linecap="round" stroke-linejoin="round" />
<path d="M336.0,390.0 L341.0,416.0" fill="none" stroke="#a0a0a0" stroke-width="0.5" stroke-linecap="round" stroke-linejoin="round" />
<path d="M342.0,388.5 L347.0,415.0" fill="none" stroke="#4a4a4a" stroke-width="1.1" stroke-linecap="round" stroke-linejoin="round" />
<path d="M344.0,388.5 L349.0,415.0" fill="none" stroke="#a0a0a0" stroke-width="0.5" stroke-linecap="round" stroke-linejoin="round" />
<path d="M350.0,387.0 L355.0,414.0" fill="none" stroke="#4a4a4a" stroke-width="1.1" stroke-linecap="round" stroke-linejoin="round" />
<path d="M352.0,387.0 L357.0,414.0" fill="none" stroke="#a0a0a0" stroke-width="0.5" stroke-linecap="round" stroke-linejoin="round" />
<path d="M285.0,430.0 L298.0,425.0 L308.0,430.0" fill="none" stroke="#5a5a5a" stroke-width="0.6" stroke-linecap="round" stroke-linejoin="round" />
<path d="M372.0,473.0 L425.0,458.0" fill="none" stroke="#4a4a4a" stroke-width="1.1" stroke-linecap="round" stroke-linejoin="round" />
<path d="M372.0,476.0 L425.0,461.0" fill="none" stroke="#a6a6a6" stroke-width="0.7" stroke-linecap="round" stroke-linejoin="round" />
<path d="M367.0,487.0 L417.0,474.0" fill="none" stroke="#4a4a4a" stroke-width="1.1" stroke-linecap="round" stroke-linejoin="round" />
<path d="M367.0,490.0 L417.0,477.0" fill="none" stroke="#a6a6a6" stroke-width="0.7" stroke-linecap="round" stroke-linejoin="round" />
<path d="M362.0,502.0 L409.0,491.0" fill="none" stroke="#4a4a4a" stroke-width="1.1" stroke-linecap="round" stroke-linejoin="round" />
<path d="M362.0,505.0 L409.0,494.0" fill="none" stroke="#a6a6a6" stroke-width="0.7" stroke-linecap="round" stroke-linejoin="round" />
<path d="M358.0,524.0 L395.0,527.0 L420.0,533.0" fill="none" stroke="#6a6a6a" stroke-width="0.6" stroke-linecap="round" stroke-linejoin="round" />
<path d="M392.0,436.0 L450.0,432.0 L462.0,439.0 L440.0,452.0 L420.0,458.0 L392.0,450.0 Z" fill="#939393" stroke="#4a4a4a" stroke-width="0.6"/>
<path d="M430.0,460.0 L440.0,455.0 L445.0,465.0 L436.0,470.0 Z" fill="#8a8a8a" stroke="#444" stroke-width="0.5"/>
<path d="M503.0,272.0 L518.0,228.0" fill="none" stroke="#b0b0b0" stroke-width="0.6" stroke-linecap="round" stroke-linejoin="round" />
<path d="M509.0,269.0 L523.0,229.0" fill="none" stroke="#b0b0b0" stroke-width="0.6" stroke-linecap="round" stroke-linejoin="round" />
<path d="M515.0,266.0 L528.0,230.0" fill="none" stroke="#b0b0b0" stroke-width="0.6" stroke-linecap="round" stroke-linejoin="round" />
<path d="M521.0,263.0 L533.0,231.0" fill="none" stroke="#b0b0b0" stroke-width="0.6" stroke-linecap="round" stroke-linejoin="round" />
<path d="M526.0,218.0 L540.0,238.0" fill="none" stroke="#4a4a4a" stroke-width="0.8" stroke-linecap="round" stroke-linejoin="round" />
<path d="M540.0,204.0 L548.0,218.0" fill="none" stroke="#555" stroke-width="0.5" stroke-linecap="round" stroke-linejoin="round" />
<path d="M548.0,202.0 L554.0,215.0" fill="none" stroke="#555" stroke-width="0.5" stroke-linecap="round" stroke-linejoin="round" />
<path d="M475.0,201.0 L482.0,190.0" fill="none" stroke="#444" stroke-width="0.6" stroke-linecap="round" stroke-linejoin="round" />
</g>
<path d="M466.0,289.0 L469.0,292.0 L455.0,304.0 L451.0,301.0 Z" fill="#222" />
<path d="M436.7,281.7 L452.0,300.0 L460.0,313.3 L445.0,330.0 L436.7,316.7 Z" fill="#1e1e1e" />
<path d="M434.5,281.5 L438.0,278.0 L477.0,324.0 L473.5,328.0 Z" fill="#9a9a9a" stroke="#333" stroke-width="0.5"/>
<circle cx="466.7" cy="287.5" r="5" fill="#a0a0a0" stroke="#444" stroke-width="0.5"/>
<path d="M432.0,151.0 L454.0,153.0 L465.6,171.0 L463.0,195.6 L463.0,213.0 L454.0,233.0 L448.0,255.6 L425.6,251.0 L425.6,224.4 L430.0,202.0 Z" fill="#626d91" />
<path d="M455.0,155.0 L462.0,162.0 L466.7,175.0 L463.3,183.3 L458.0,180.0 Z" fill="#4a5688" />
<path d="M438.0,193.0 L446.0,190.0 L454.0,205.0 L450.0,212.0 L440.0,210.0 Z" fill="#8e8e8e" filter="url(#bl1)"/>
<path d="M425.0,273.3 L436.7,280.0 L435.8,285.0 L430.0,305.0 L416.7,323.3 L410.0,333.3 L411.7,323.3 L420.0,300.0 L425.0,280.0 Z" fill="#626d91" />
<path d="M410.0,330.0 L414.0,347.5 L425.6,349.5 L416.0,351.4 L411.0,345.0 Z" fill="#626d91" />
<path d="M449.0,365.0 L472.3,385.4 L456.8,386.4 L452.0,375.0 Z" fill="#626d91" />
<path d="M423.0,229.0 L462.0,210.0 L464.0,218.0 L426.0,236.0 Z" fill="#a3a3a3" stroke="#555" stroke-width="0.5"/>
</g>
</g>
<rect x="0" y="101" width="21" height="570" fill="#383838" />
<rect x="0" y="101" width="2" height="570" fill="#2a2a2a" />
<rect x="19" y="101" width="2" height="570" fill="#2e2e2e" />
<rect x="4.5" y="108" width="14" height="40" fill="#2c2c2c" />
<rect x="5.0" y="122.0" width="12" height="12" fill="#5e7895" />
<rect x="5.0" y="166.0" width="12" height="12" fill="#5e7895" />
<rect x="5.0" y="315.0" width="12" height="12" fill="#5e7895" />
<path d="M7,119 l4,-7 l4,7 z" stroke="none" fill="#e8c830" stroke-width="1" />
<circle cx="12" cy="112" r="2.5" fill="#999"/>
<circle cx="11" cy="126" r="3" fill="#888"/>
<path d="M8,130 l3,-3 l3,3 l-3,3 z" stroke="none" fill="#e8d040" stroke-width="1" />
<path d="M7,140 l4,-4 l4,4 l-4,4 z" stroke="#333" fill="#e8c830" stroke-width="0.5" />
<circle cx="11" cy="159" r="4" fill="none" stroke="#ccc" stroke-width="1.2"/>
<path d="M11,155 l4,5 l-2,0.5 z" stroke="none" fill="#fff" stroke-width="1" />
<rect x="7.5" y="170" width="7" height="6" fill="#e8e8e8" />
<path d="M9,170 v-2 a2,2 0 0 1 4,0 v2" stroke="#e8e8e8" fill="none" stroke-width="1" />
<circle cx="11" cy="186" r="2.6" fill="#ccc"/>
<path d="M6,187 q5,5 10,0" stroke="#e03030" fill="none" stroke-width="1.6" />
<circle cx="11" cy="200" r="2.6" fill="#ccc"/>
<path d="M6,201 q5,5 10,0" stroke="#e03030" fill="none" stroke-width="1.6" />
<path d="M11,208 v10 M7,213 h8" stroke="#e03030" fill="none" stroke-width="1.2" />
<circle cx="11" cy="213" r="2" fill="#bbb"/>
<path d="M7,223 l8,8 M15,223 l-8,8 M11,222 v10" stroke="#e8e8e8" fill="none" stroke-width="1" />
<path d="M7,231 l3,-3" stroke="#e03030" fill="none" stroke-width="1" />
<path d="M6,246 l5,-9 l5,9 z" stroke="none" fill="#50a050" stroke-width="1" />
<path d="M6,246 l5,-4 l5,4" stroke="none" fill="#e8c030" stroke-width="1" />
<path d="M11,237 l-2,5 h4z" stroke="none" fill="#4070d0" stroke-width="1" />
<path d="M7,261 v-3 a4,4 0 0 1 8,0 v3" stroke="#e04040" fill="none" stroke-width="2.2" />
<path d="M7,261 v1.5 M15,261 v1.5" stroke="#eee" fill="none" stroke-width="2.2" />
<path d="M7,276 v-3 a4,4 0 0 1 8,0 v3" stroke="#e04040" fill="none" stroke-width="2.2" />
<path d="M7,276 v1.5 M15,276 v1.5" stroke="#eee" fill="none" stroke-width="2.2" />
<path d="M7,291 v-3 a4,4 0 0 1 8,0 v3" stroke="#e04040" fill="none" stroke-width="2.2" />
<path d="M7,291 v1.5 M15,291 v1.5" stroke="#eee" fill="none" stroke-width="2.2" />
<circle cx="11" cy="321" r="3.5" fill="#222"/><circle cx="9" cy="319" r="1.5" fill="#ddd"/><circle cx="13" cy="323" r="1.5" fill="#ddd"/>
<circle cx="11" cy="335" r="4" fill="none" stroke="#ddd" stroke-width="0.9"/>
<rect x="12" y="336" width="4" height="4" fill="#e04040" />
<path d="M6,351 q5,4 10,0 v2 q-5,4 -10,0 z" stroke="none" fill="#eee" stroke-width="1" />
<circle cx="11" cy="348" r="2.5" fill="#333"/>
<path d="M7,651 l6,-4 l3,3 l-6,4 z" stroke="none" fill="#e8e8e8" stroke-width="1" />
<rect x="12" y="652" width="2" height="2" fill="#d04040" />
<circle cx="11" cy="663" r="4" fill="#ccc" stroke="#888" stroke-width="0.5"/><circle cx="11" cy="663" r="1.5" fill="#555"/>
<rect x="639" y="101" width="13" height="570" fill="#393939" />
<rect x="639" y="101" width="1.3" height="570" fill="#252525" />
<rect x="651.6" y="101" width="1.4" height="570" fill="#2b2b2b" />
<path d="M647,102 l2,2 l2,-2 z" stroke="none" fill="#111" stroke-width="1" />
<rect x="640.0" y="108.25" width="11" height="11" fill="#5e7895" />
<rect x="640.0" y="158.25" width="11" height="11" fill="#5e7895" />
<rect x="640.0" y="195.5" width="11" height="11" fill="#5e7895" />
<rect x="640.0" y="324.5" width="11" height="11" fill="#5e7895" />
<rect x="640.0" y="400.5" width="11" height="11" fill="#5e7895" />
<rect x="640.0" y="419.5" width="11" height="11" fill="#5e7895" />
<path d="M641.5,115 l4,-3 l4,3 l-4,1.5 z" stroke="none" fill="#ddd" stroke-width="1" />
<rect x="642.0" y="123" width="7" height="6" fill="#5a9a4a" />
<path d="M642.5,129 l6,-6" stroke="#ddd" fill="none" stroke-width="0.8" />
<rect x="642.5" y="137.5" width="6" height="5" fill="#e8e8e8" />
<path d="M643.5,137.5 v-1.5 a2,2 0 0 1 4,0 v1.5" stroke="#e8e8e8" fill="none" stroke-width="0.9" />
<circle cx="645.5" cy="150" r="2.8" fill="none" stroke="#ddd" stroke-width="0.9"/>
<path d="M645.5,153 v3" stroke="#ddd" fill="none" stroke-width="0.9" />
<circle cx="645.5" cy="163.75" r="3.6" fill="#ccc"/>
<circle cx="645.5" cy="174" r="2.6" fill="none" stroke="#e8e070" stroke-width="1"/>
<path d="M645.5,177 v3" stroke="#e8e070" fill="none" stroke-width="1" />
<circle cx="645.5" cy="186" r="2.6" fill="none" stroke="#ddd" stroke-width="1"/>
<ellipse cx="645.5" cy="191" rx="3.5" ry="1.2" fill="none" stroke="#ccc" stroke-width="0.7"/>
<circle cx="645.5" cy="201" r="3.8" fill="#222"/><circle cx="645.5" cy="201" r="2.4" fill="#ddd"/><circle cx="645.5" cy="201" r="1" fill="#222"/>
<path d="M641.5,210 l8,6 M641.5,214 l6,2" stroke="#ccc" fill="none" stroke-width="0.9" />
<path d="M641.5,226 h5 v4 h-5 z M646.5,227 l3,-2 v6 l-3,-2" stroke="none" fill="#ccc" stroke-width="1" />
<circle cx="645.5" cy="241" r="1.4" fill="#ddd"/>
<path d="M642.5,257 l3,-4 l3,4" stroke="#ccc" fill="none" stroke-width="0.8" />
<path d="M642.5,257 l6,0" stroke="#ccc" fill="none" stroke-width="0.8" />
<path d="M642.5,270 l6,-7" stroke="#ddd" fill="none" stroke-width="0.9" />
<text x="641.5" y="282" font-size="6" fill="#ddd" text-anchor="start" font-weight="normal" >.12</text>
<path d="M641.5,296 l4,-5 l4,2 v4 z" stroke="none" fill="#ccc" stroke-width="1" />
<path d="M641.5,309 l4,-6 l4,4 v3 z" stroke="none" fill="#ccc" stroke-width="1" />
<path d="M641.5,321 v-7 h7" stroke="#ccc" fill="none" stroke-width="0.8" />
<path d="M642.5,332 l6,-5" stroke="#eee" fill="none" stroke-width="1.2" />
<rect x="642.0" y="339" width="7" height="7" fill="#d8d8e8" />
<path d="M642.5,345 l6,-6" stroke="#d04040" fill="none" stroke-width="0.6" />
<path d="M641.5,355.75 l4,-4 l4,4 l-4,4 z" stroke="none" fill="#7aa0d8" stroke-width="1" />
<rect x="642.0" y="364" width="7" height="7" fill="#60a060" />
<rect x="643.5" y="365.5" width="4" height="4" fill="#a0d090" />
<path d="M641.5,382 l4,-2 l4,2 M645.5,380 v-4" stroke="#ddd" fill="none" stroke-width="0.9" />
<circle cx="645.5" cy="393.75" r="3.5" fill="none" stroke="#ddd" stroke-width="0.9"/>
<rect x="644.0" y="392.2" width="3" height="3" fill="#ddd" />
<path d="M641.5,409 l4,-5 l4,5 z" stroke="none" fill="#eee" stroke-width="1" />
<path d="M645.5,429 l-3,-4 a3,3 0 1 1 6,0 z" stroke="none" fill="#eee" stroke-width="1" />
<circle cx="645.5" cy="640" r="3.8" fill="none" stroke="#ddd" stroke-width="0.8"/>
<text x="645.5" y="642.5" font-size="6" fill="#eee" text-anchor="middle" font-weight="normal" font-style="italic">i</text>
<rect x="640.0" y="647.5" width="11" height="10" fill="#5e7895" />
<rect x="642.5" y="649.5" width="2.5" height="2.5" fill="#f0e040" />
<rect x="646.0" y="649.5" width="2.5" height="2.5" fill="#f0e040" />
<rect x="642.5" y="653" width="2.5" height="2.5" fill="#f0e040" />
<rect x="646.0" y="653" width="2.5" height="2.5" fill="#f0e040" />
<rect x="641.5" y="660.5" width="8" height="8" fill="#f0f0f0" />
<path d="M643.0,666 q2.5,-5 5,0 z" stroke="none" fill="#111" stroke-width="1" />
<rect x="21" y="101" width="618" height="1.2" fill="#8aa0ab" />
<rect x="21" y="101" width="1" height="570" fill="#7d929c" />
<circle cx="32" cy="111" r="3.6" fill="#222"/><circle cx="31" cy="110" r="1.3" fill="#888"/>
<text x="42" y="113.8" font-size="7" fill="#f2f2f2" text-anchor="start" font-weight="bold" textLength="17" lengthAdjust="spacingAndGlyphs" >View</text>
<rect x="580.5" y="103.5" width="25" height="9" rx="4.5" fill="#6f8592" stroke="#9fb0ba" stroke-width="0.7"/>
<text x="584" y="110.5" font-size="6" fill="#e8e8e8" text-anchor="start" font-weight="normal" textLength="14" lengthAdjust="spacingAndGlyphs" >Persp</text>
<path d="M600.5,107.5 l1,1.2 l1,-1.2 z" stroke="none" fill="#ddd" stroke-width="1" />
<rect x="607" y="103.5" width="30" height="9" rx="4.5" fill="#6f8592" stroke="#9fb0ba" stroke-width="0.7"/>
<text x="611" y="110.5" font-size="6" fill="#e8e8e8" text-anchor="start" font-weight="normal" textLength="18" lengthAdjust="spacingAndGlyphs" >No cam</text>
<path d="M631.5,107.5 l1,1.2 l1,-1.2 z" stroke="none" fill="#ddd" stroke-width="1" />
<text x="600" y="666" font-size="5.5" fill="#e8e800" text-anchor="start" font-weight="normal" textLength="32" lengthAdjust="spacingAndGlyphs" >Indie Edition</text>
<path d="M30,664 v-7" stroke="#40c040" fill="none" stroke-width="0.8" />
<path d="M30,664 h5" stroke="#e04040" fill="none" stroke-width="0.8" />
<path d="M30,664 l3,-1.5" stroke="#4040e0" fill="none" stroke-width="1.2" />
<defs><clipPath id="netclip"><rect x="655" y="98" width="625" height="573"/></clipPath></defs>
<rect x="655" y="98" width="625" height="573" fill="#313131" />
<g clip-path="url(#netclip)" fill="none">
<path d="M655,148.5 H1280" stroke="#414141" stroke-width="0.8" opacity="1"/>
<path d="M800,148.5 C720,148.5 674,165 674,200 L674,278" stroke="#484848" stroke-width="0.75" opacity="1"/>
<path d="M805,148.5 C765,148.5 744.5,160 744.5,195 L744.5,278" stroke="#484848" stroke-width="0.75" opacity="1"/>
<path d="M820,148.5 C850,148.5 870.5,170 870.5,205 L870.5,278" stroke="#484848" stroke-width="0.75" opacity="1"/>
<path d="M820,148.5 C900,148.5 929,170 929,205 L929,278" stroke="#484848" stroke-width="0.75" opacity="1"/>
<path d="M830,148.5 C950,148.5 992,200 992,235 L992,278" stroke="#484848" stroke-width="0.75" opacity="1"/>
<path d="M840,148.5 C1030,148.5 1075,200 1075,235 L1075,278" stroke="#484848" stroke-width="0.75" opacity="1"/>
<path d="M850,148.5 C1100,148.5 1133,200 1133,235 L1133,278" stroke="#484848" stroke-width="0.75" opacity="1"/>
<path d="M860,148.5 C1200,148.5 1241,200 1241,235 L1241,278" stroke="#484848" stroke-width="0.75" opacity="1"/>
<path d="M870,148.5 C1250,148.5 1290,190 1300,230" stroke="#484848" stroke-width="0.75" opacity="1"/>
<path d="M810,148 V278" stroke="#505050" stroke-width="0.8" opacity="1"/>
<path d="M780,148.5 H840" stroke="#3a78c0" stroke-width="1.2" opacity="1"/>
<path d="M870.5,258 V278" stroke="#3f6ea8" stroke-width="1" opacity="1"/>
<path d="M992,250 V278" stroke="#3f6ea8" stroke-width="1" opacity="1"/>
<path d="M1075,250 V278" stroke="#3f6ea8" stroke-width="1" opacity="1"/>
<path d="M1133,250 V278" stroke="#3f6ea8" stroke-width="1" opacity="1"/>
<path d="M1241,255 V278" stroke="#3f6ea8" stroke-width="1" opacity="1"/>
<path d="M882,98 C882,108 886,112 888,121" stroke="#5a5a5a" stroke-width="0.9" opacity="1"/>
<path d="M892,98 C892,108 889,112 888,121" stroke="#4a6a98" stroke-width="0.9" opacity="1"/>
<path d="M888,121 C888,110 900,109 913,109" stroke="#5a5a5a" stroke-width="0.8" opacity="1"/>
<path d="M913,98 V109" stroke="#4a6a98" stroke-width="0.9" opacity="1"/>
<path d="M888,121 V140" stroke="#a0c060" stroke-width="0.8" opacity="1"/>
<path d="M838,138 C850,138 870,140 880,140" stroke="#7a9050" stroke-width="0.8" opacity="1"/>
<path d="M837,144 C860,145 880,141 880,141" stroke="#8a9a60" stroke-width="0.7" opacity="1"/>
<path d="M814,150 C820,155 828,155 831,159" stroke="#3a78c0" stroke-width="1" opacity="1"/>
<path d="M831,159 C826,164 824,165 824,169 C826,174 834,175 836,175 C850,175 848,168 862,169" stroke="#3f6ea8" stroke-width="1" opacity="1"/>
<path d="M862,169 V184" stroke="#5a5a5a" stroke-width="0.8" opacity="1"/>
<path d="M680,339.5 C894.5,344.5 916.5,389.5 919.5,486" stroke="#434343" stroke-width="0.7" opacity="1"/>
<path d="M742.5,318 C894.5,323 916.5,368 919.5,486" stroke="#414141" stroke-width="0.7" opacity="1"/>
<path d="M812,330 C894.5,335 916.5,380 919.5,486" stroke="#385a80" stroke-width="0.7" opacity="1"/>
<path d="M885,336 C894.5,341 916.5,386 919.5,486" stroke="#385a80" stroke-width="0.7" opacity="1"/>
<path d="M988,320 C959.5,325 922.5,370 919.5,486" stroke="#434343" stroke-width="0.7" opacity="1"/>
<path d="M1065,342 C959.5,347 922.5,392 919.5,486" stroke="#434343" stroke-width="0.7" opacity="1"/>
<path d="M1129,316 C959.5,321 922.5,366 919.5,486" stroke="#434343" stroke-width="0.7" opacity="1"/>
<path d="M1240,326 C959.5,331 922.5,376 919.5,486" stroke="#434343" stroke-width="0.7" opacity="1"/>
<path d="M655,364 C894.5,369 916.5,414 919.5,486" stroke="#3d3d3d" stroke-width="0.7" opacity="1"/>
<path d="M655,395 C894.5,400 916.5,445 919.5,486" stroke="#364a60" stroke-width="0.7" opacity="1"/>
<path d="M655,410 C894.5,415 916.5,460 919.5,486" stroke="#3d3d3d" stroke-width="0.7" opacity="1"/>
<path d="M662,383 C894.5,388 916.5,433 919.5,486" stroke="#3b3b3b" stroke-width="0.7" opacity="1"/>
<path d="M1280,290 C959.5,295 922.5,340 919.5,486" stroke="#3e3e3e" stroke-width="0.7" opacity="1"/>
<path d="M1280,330 C959.5,335 922.5,380 919.5,486" stroke="#3e3e3e" stroke-width="0.7" opacity="1"/>
<path d="M921,356 V486" stroke="#6a6a6a" stroke-width="0.9" opacity="1"/>
<path d="M915.5,452 C916,465 917.5,478 918.5,486 L921,486 C921.5,475 922.5,462 923.5,452 Z" fill="#5094e0" opacity="0.9"/>
<path d="M878,439 C900,445 915,460 919,486" stroke="#3a6aa0" stroke-width="0.7" opacity="1"/>
<path d="M897,444 C910,450 917,465 919,486" stroke="#3a6aa0" stroke-width="0.7" opacity="1"/>
<path d="M919.5,486 V532" stroke="#5a5a5a" stroke-width="1.5" opacity="1"/>
<path d="M919.5,488 C930,490 934,495 934,501" stroke="#3f6ea8" stroke-width="1" opacity="1"/>
<path d="M919.5,510 C960,510 980,520 980,553 V581" stroke="#555" stroke-width="0.9" opacity="1"/>
<path d="M966,488 C975,490 980,500 980,553" stroke="#3f6ea8" stroke-width="1" opacity="1"/>
<path d="M939.3,597.3 V615 M954,597.3 V606.7 C954,610 948,612 946.7,615" stroke="#5a5a5a" stroke-width="0.8" opacity="1"/>
<path d="M954,597.3 V606.7" stroke="#3f6ea8" stroke-width="1" opacity="1"/>
<path d="M674,280 C674,285 668,288 668,292 V305 C668,310 678,312 678,315" stroke="#3f6ea8" stroke-width="1.1" opacity="1"/>
<path d="M744.5,280 C744.5,285 738.5,288 738.5,292 V305 C738.5,310 748.5,312 748.5,315" stroke="#3f6ea8" stroke-width="1.1" opacity="1"/>
<path d="M810,280 C810,285 804,288 804,292 V305 C804,310 814,312 814,315" stroke="#3f6ea8" stroke-width="1.1" opacity="1"/>
<path d="M870.5,280 C870.5,285 864.5,288 864.5,292 V305 C864.5,310 874.5,312 874.5,315" stroke="#3f6ea8" stroke-width="1.1" opacity="1"/>
<path d="M928.75,280 C928.75,285 922.75,288 922.75,292 V305 C922.75,310 932.75,312 932.75,315" stroke="#3f6ea8" stroke-width="1.1" opacity="1"/>
<path d="M656,303 H713" stroke="#3f70b0" stroke-width="1.4" opacity="1"/>
<path d="M666,323 C666,330 670,333 678,337" stroke="#3f6ea8" stroke-width="1" opacity="1"/>
<path d="M680,339.5 H800" stroke="#464646" stroke-width="0.7" opacity="1"/>
<path d="M742.5,318 H800" stroke="#4d4d4d" stroke-width="0.9" opacity="1"/>
<path d="M812,330 C830,332 880,332 900,340" stroke="#3a6aa0" stroke-width="0.9" opacity="1"/>
<path d="M1065,342 H1010" stroke="#3a6aa0" stroke-width="1" opacity="1"/>
<path d="M1129,316 H1070" stroke="#3a6aa0" stroke-width="1" opacity="1"/>
<path d="M1240,326 H1010" stroke="#464646" stroke-width="0.7" opacity="1"/>
<path d="M988,320 C970,322 960,325 955,326" stroke="#3a6aa0" stroke-width="1" opacity="1"/>
<path d="M1080.75,337 V370" stroke="#5a5a5a" stroke-width="1" opacity="1"/>
<path d="M1063.75,285.75 V310 M1075,280 V310 M1076,308 C1076,316 1070,320 1066,325" stroke="#3f6ea8" stroke-width="1" opacity="1"/>
<path d="M1133,280 V305 C1133,310 1129,312 1129,313" stroke="#3f6ea8" stroke-width="1" opacity="1"/>
<path d="M1228,284 V310 M1241,280 V323" stroke="#3f6ea8" stroke-width="1" opacity="1"/>
<path d="M992,280 V318" stroke="#3f6ea8" stroke-width="1" opacity="1"/>
</g>
<rect x="778.0" y="136.2" width="8" height="3.6" rx="1" fill="#dcdcdc" stroke="#111" stroke-width="0.4"/>
<rect x="787.5" y="137" width="8" height="1" fill="#6a6a6a"/>
<rect x="810.0" y="136.2" width="8" height="3.6" rx="1" fill="#dcdcdc" stroke="#111" stroke-width="0.4"/>
<rect x="819.5" y="137" width="8" height="1" fill="#6a6a6a"/>
<rect x="833.0" y="136.2" width="8" height="3.6" rx="1" fill="#dcdcdc" stroke="#111" stroke-width="0.4"/>
<rect x="842.5" y="137" width="8" height="1" fill="#6a6a6a"/>
<rect x="810.0" y="142.2" width="8" height="3.6" rx="1" fill="#dcdcdc" stroke="#111" stroke-width="0.4"/>
<rect x="819.5" y="143" width="8" height="1" fill="#6a6a6a"/>
<rect x="810.0" y="148.2" width="8" height="3.6" rx="1" fill="#dcdcdc" stroke="#111" stroke-width="0.4"/>
<rect x="819.5" y="149" width="8" height="1" fill="#6a6a6a"/>
<rect x="827.0" y="157.2" width="8" height="3.6" rx="1" fill="#dcdcdc" stroke="#111" stroke-width="0.4"/>
<rect x="836.5" y="158" width="8" height="1" fill="#6a6a6a"/>
<rect x="820.0" y="167.2" width="8" height="3.6" rx="1" fill="#dcdcdc" stroke="#111" stroke-width="0.4"/>
<rect x="829.5" y="168" width="8" height="1" fill="#6a6a6a"/>
<rect x="832.0" y="173.2" width="8" height="3.6" rx="1" fill="#dcdcdc" stroke="#111" stroke-width="0.4"/>
<rect x="841.5" y="174" width="8" height="1" fill="#6a6a6a"/>
<rect x="858.0" y="167.2" width="8" height="3.6" rx="1" fill="#dcdcdc" stroke="#111" stroke-width="0.4"/>
<rect x="867.5" y="168" width="8" height="1" fill="#6a6a6a"/>
<rect x="858.0" y="174.2" width="8" height="3.6" rx="1" fill="#dcdcdc" stroke="#111" stroke-width="0.4"/>
<rect x="867.5" y="175" width="8" height="1" fill="#6a6a6a"/>
<rect x="909.0" y="107.2" width="8" height="3.6" rx="1" fill="#dcdcdc" stroke="#111" stroke-width="0.4"/>
<rect x="918.5" y="108" width="8" height="1" fill="#6a6a6a"/>
<rect x="884.0" y="119.2" width="8" height="3.6" rx="1" fill="#b8e070" stroke="#111" stroke-width="0.4"/>
<rect x="893.5" y="120" width="8" height="1" fill="#6a6a6a"/>
<path d="M859,181.5 L862,184 L859,186.5 Z M865,181.5 L862,184 L865,186.5 Z" fill="#a8c8f0" stroke="#223" stroke-width="0.3"/>
<circle cx="888" cy="140" r="13" fill="#4a6cc8" opacity="0.95"/><circle cx="888" cy="140" r="9" fill="#9a6ad8"/>
<rect x="881" y="134" width="14" height="10" rx="1.5" fill="#dfe8f8"/><rect x="883" y="137" width="10" height="5" rx="1" fill="#f0d020" stroke="#a03010" stroke-width="0.5"/>
<path d="M874.5,141 L874.5,157 L878.5,153.5 L881.5,160.5 L884.5,159 L881.5,152.5 L886.5,152.5 Z" fill="#fff" stroke="#000" stroke-width="0.9"/>
<g fill="none">
<path d="M674,281.0 C674,285.75 668,285.75 668,290.5" stroke="#3d6aa0" stroke-width="0.9"/>
<path d="M668,293.5 C668,293.75 680,293.75 680,294.0" stroke="#3d6aa0" stroke-width="0.9"/>
<path d="M689,292.5 C689,293.25 704.5,293.25 704.5,294.0" stroke="#3d6aa0" stroke-width="0.9"/>
<path d="M704.5,297.0 C704.5,298.625 692.5,298.625 692.5,300.25" stroke="#3d6aa0" stroke-width="0.9"/>
<path d="M692.5,303.25 C692.5,305.25 691,305.25 691,307.25" stroke="#3d6aa0" stroke-width="0.9"/>
<path d="M691,310.25 C691,310.375 679,310.375 679,310.5" stroke="#3d6aa0" stroke-width="0.9"/>
<path d="M679,313.5 C679,314.5 671,314.5 671,315.5" stroke="#3d6aa0" stroke-width="0.9"/>
<path d="M671,318.5 C671,320.0 665,320.0 665,321.5" stroke="#3d6aa0" stroke-width="0.9"/>
<path d="M665,324.5 C665,326.875 665,326.875 665,329.25" stroke="#3d6aa0" stroke-width="0.9"/>
<path d="M665,332.25 C665,333.75 678,333.75 678,335.25" stroke="#3d6aa0" stroke-width="0.9"/>
<path d="M660.5,371.0 C660.5,372.875 660.5,372.875 660.5,374.75" stroke="#3d6aa0" stroke-width="0.9"/>
<path d="M660.5,377.75 C660.5,378.75 660.5,378.75 660.5,379.75" stroke="#3d6aa0" stroke-width="0.9"/>
<path d="M744.5,281.0 C744.5,286.75 741,286.75 741,292.5" stroke="#3d6aa0" stroke-width="0.9"/>
<path d="M757.5,293.5 C757.5,294.5 748,294.5 748,295.5" stroke="#3d6aa0" stroke-width="0.9"/>
<path d="M773,298.25 C773,299.875 760.5,299.875 760.5,301.5" stroke="#3d6aa0" stroke-width="0.9"/>
<path d="M760.5,304.5 C760.5,306.125 756,306.125 756,307.75" stroke="#3d6aa0" stroke-width="0.9"/>
<path d="M756,310.75 C756,312.125 742.5,312.125 742.5,313.5" stroke="#3d6aa0" stroke-width="0.9"/>
<path d="M810,281.0 C810,286.0 810,286.0 810,291.0" stroke="#3d6aa0" stroke-width="0.9"/>
<path d="M826,292.0 C826,293.0 817.5,293.0 817.5,294.0" stroke="#3d6aa0" stroke-width="0.9"/>
<path d="M842.5,296.5 C842.5,298.0 829.5,298.0 829.5,299.5" stroke="#3d6aa0" stroke-width="0.9"/>
<path d="M829.5,302.5 C829.5,304.5 812,304.5 812,306.5" stroke="#3d6aa0" stroke-width="0.9"/>
<path d="M812,309.5 C812,308.0 824.5,308.0 824.5,306.5" stroke="#3d6aa0" stroke-width="0.9"/>
<path d="M824.5,309.5 C824.5,312.5 806,312.5 806,315.5" stroke="#3d6aa0" stroke-width="0.9"/>
<path d="M824.5,315.25 C824.5,318.375 809.5,318.375 809.5,321.5" stroke="#3d6aa0" stroke-width="0.9"/>
<path d="M830,323.5 C830,325.375 812,325.375 812,327.25" stroke="#3d6aa0" stroke-width="0.9"/>
<path d="M870.5,281.0 C870.5,285.75 870.5,285.75 870.5,290.5" stroke="#3d6aa0" stroke-width="0.9"/>
<path d="M887,291.0 C887,291.875 878,291.875 878,292.75" stroke="#3d6aa0" stroke-width="0.9"/>
<path d="M878,295.75 C878,294.25 902,294.25 902,292.75" stroke="#3d6aa0" stroke-width="0.9"/>
<path d="M902,295.75 C902,297.375 890,297.375 890,299.0" stroke="#3d6aa0" stroke-width="0.9"/>
<path d="M890,302.0 C890,304.0 872.5,304.0 872.5,306.0" stroke="#3d6aa0" stroke-width="0.9"/>
<path d="M872.5,309.0 C872.5,307.5 887,307.5 887,306.0" stroke="#3d6aa0" stroke-width="0.9"/>
<path d="M887,309.0 C887,311.875 865.75,311.875 865.75,314.75" stroke="#3d6aa0" stroke-width="0.9"/>
<path d="M865.75,317.75 C865.75,319.125 866,319.125 866,320.5" stroke="#3d6aa0" stroke-width="0.9"/>
<path d="M866,323.5 C866,325.0 873.75,325.0 873.75,326.5" stroke="#3d6aa0" stroke-width="0.9"/>
<path d="M873.75,329.5 C873.75,331.25 885,331.25 885,333.0" stroke="#3d6aa0" stroke-width="0.9"/>
<path d="M928.75,281.0 C928.75,286.375 928.75,286.375 928.75,291.75" stroke="#3d6aa0" stroke-width="0.9"/>
<path d="M944.5,292.75 C944.5,293.5 936,293.5 936,294.25" stroke="#3d6aa0" stroke-width="0.9"/>
<path d="M957,296.5 C957,298.75 948,298.75 948,301.0" stroke="#3d6aa0" stroke-width="0.9"/>
<path d="M948,304.0 C948,302.75 935,302.75 935,301.5" stroke="#3d6aa0" stroke-width="0.9"/>
<path d="M935,304.5 C935,306.875 945,306.875 945,309.25" stroke="#3d6aa0" stroke-width="0.9"/>
<path d="M945,312.25 C945,312.625 930,312.625 930,313.0" stroke="#3d6aa0" stroke-width="0.9"/>
<path d="M930,316.0 C930,315.375 945,315.375 945,314.75" stroke="#3d6aa0" stroke-width="0.9"/>
<path d="M945,317.75 C945,319.75 921,319.75 921,321.75" stroke="#3d6aa0" stroke-width="0.9"/>
<path d="M921,324.75 C921,326.375 921,326.375 921,328.0" stroke="#3d6aa0" stroke-width="0.9"/>
<path d="M921,331.0 C921,332.0 921,332.0 921,333.0" stroke="#3d6aa0" stroke-width="0.9"/>
<path d="M921,336.0 C921,336.375 921,336.375 921,336.75" stroke="#3d6aa0" stroke-width="0.9"/>
<path d="M921,339.75 C921,341.375 921,341.375 921,343.0" stroke="#3d6aa0" stroke-width="0.9"/>
<path d="M921,346.0 C921,347.5 921,347.5 921,349.0" stroke="#3d6aa0" stroke-width="0.9"/>
<path d="M921,352.0 C921,353.0 921,353.0 921,354.0" stroke="#3d6aa0" stroke-width="0.9"/>
<path d="M992,281.0 C992,286.625 992,286.625 992,292.25" stroke="#3d6aa0" stroke-width="0.9"/>
<path d="M1008,292.75 C1008,293.75 999.25,293.75 999.25,294.75" stroke="#3d6aa0" stroke-width="0.9"/>
<path d="M999.25,297.75 C999.25,296.25 1023.75,296.25 1023.75,294.75" stroke="#3d6aa0" stroke-width="0.9"/>
<path d="M1023.75,297.75 C1023.75,299.375 1011.25,299.375 1011.25,301.0" stroke="#3d6aa0" stroke-width="0.9"/>
<path d="M1011.25,304.0 C1011.25,305.875 993.75,305.875 993.75,307.75" stroke="#3d6aa0" stroke-width="0.9"/>
<path d="M993.75,310.75 C993.75,313.625 988,313.625 988,316.5" stroke="#3d6aa0" stroke-width="0.9"/>
<path d="M1075,281.0 C1075,282.625 1063.75,282.625 1063.75,284.25" stroke="#3d6aa0" stroke-width="0.9"/>
<path d="M1063.75,287.25 C1063.75,289.125 1063.75,289.125 1063.75,291.0" stroke="#3d6aa0" stroke-width="0.9"/>
<path d="M1063.75,294.0 C1063.75,292.5 1075,292.5 1075,291.0" stroke="#3d6aa0" stroke-width="0.9"/>
<path d="M1090.75,290.75 C1090.75,291.875 1090.75,291.875 1090.75,293.0" stroke="#3d6aa0" stroke-width="0.9"/>
<path d="M1106.75,295.25 C1106.75,297.125 1105.5,297.125 1105.5,299.0" stroke="#3d6aa0" stroke-width="0.9"/>
<path d="M1065.75,309.5 C1065.75,308.0 1076.25,308.0 1076.25,306.5" stroke="#3d6aa0" stroke-width="0.9"/>
<path d="M1076.25,309.5 C1076.25,311.125 1066.75,311.125 1066.75,312.75" stroke="#3d6aa0" stroke-width="0.9"/>
<path d="M1066.75,315.75 C1066.75,318.375 1076.75,318.375 1076.75,321.0" stroke="#3d6aa0" stroke-width="0.9"/>
<path d="M1076.75,324.0 C1076.75,325.0 1070.5,325.0 1070.5,326.0" stroke="#3d6aa0" stroke-width="0.9"/>
<path d="M1070.5,329.0 C1070.5,333.5 1065.75,333.5 1065.75,338.0" stroke="#3d6aa0" stroke-width="0.9"/>
<path d="M1080.75,338.5 C1080.75,340.0 1080.75,340.0 1080.75,341.5" stroke="#3d6aa0" stroke-width="0.9"/>
<path d="M1080.75,344.5 C1080.75,346.25 1080.75,346.25 1080.75,348.0" stroke="#3d6aa0" stroke-width="0.9"/>
<path d="M1133,281.0 C1133,284.375 1133,284.375 1133,287.75" stroke="#3d6aa0" stroke-width="0.9"/>
<path d="M1149.25,288.25 C1149.25,289.25 1140.5,289.25 1140.5,290.25" stroke="#3d6aa0" stroke-width="0.9"/>
<path d="M1140.5,293.25 C1140.5,291.75 1165,291.75 1165,290.25" stroke="#3d6aa0" stroke-width="0.9"/>
<path d="M1165,293.25 C1165,294.875 1152.5,294.875 1152.5,296.5" stroke="#3d6aa0" stroke-width="0.9"/>
<path d="M1152.5,299.5 C1152.5,301.5 1135.5,301.5 1135.5,303.5" stroke="#3d6aa0" stroke-width="0.9"/>
<path d="M1135.5,306.5 C1135.5,309.125 1129.5,309.125 1129.5,311.75" stroke="#3d6aa0" stroke-width="0.9"/>
<path d="M1241.25,281.0 C1241.25,286.125 1228.25,286.125 1228.25,291.25" stroke="#3d6aa0" stroke-width="0.9"/>
<path d="M1228.25,294.25 C1228.25,292.75 1241.25,292.75 1241.25,291.25" stroke="#3d6aa0" stroke-width="0.9"/>
<path d="M1257.5,292.75 C1257.5,293.75 1248.75,293.75 1248.75,294.75" stroke="#3d6aa0" stroke-width="0.9"/>
<path d="M1248.75,297.75 C1248.75,296.25 1273.75,296.25 1273.75,294.75" stroke="#3d6aa0" stroke-width="0.9"/>
<path d="M1273.75,297.75 C1273.75,299.375 1261.25,299.375 1261.25,301.0" stroke="#3d6aa0" stroke-width="0.9"/>
<path d="M1229.5,310.75 C1229.5,309.25 1243.25,309.25 1243.25,307.75" stroke="#3d6aa0" stroke-width="0.9"/>
<path d="M1243.25,310.75 C1243.25,311.5 1229.5,311.5 1229.5,312.25" stroke="#3d6aa0" stroke-width="0.9"/>
<path d="M1229.5,315.25 C1229.5,314.625 1256.25,314.625 1256.25,314.0" stroke="#3d6aa0" stroke-width="0.9"/>
<path d="M1256.25,317.0 C1256.25,319.25 1240.75,319.25 1240.75,321.5" stroke="#3d6aa0" stroke-width="0.9"/>
<path d="M877.3,440.5 C877.3,439.0 896.7,439.0 896.7,437.5" stroke="#5a5a5a" stroke-width="0.9"/>
<path d="M896.7,440.5 C896.7,441.65 896.7,441.65 896.7,442.8" stroke="#5a5a5a" stroke-width="0.9"/>
<path d="M919.5,487.5 C919.5,493.5 934,493.5 934,499.5" stroke="#5a5a5a" stroke-width="0.9"/>
<path d="M934,502.5 C934,504.65 919.3,504.65 919.3,506.8" stroke="#5a5a5a" stroke-width="0.9"/>
<path d="M919.3,509.8 C919.3,512.5 919.3,512.5 919.3,515.2" stroke="#5a5a5a" stroke-width="0.9"/>
<path d="M919.3,518.2 C919.3,520.35 919.3,520.35 919.3,522.5" stroke="#5a5a5a" stroke-width="0.9"/>
<path d="M919.3,525.5 C919.3,527.85 919.3,527.85 919.3,530.2" stroke="#5a5a5a" stroke-width="0.9"/>
<path d="M980,557.5 C980,559.15 980,559.15 980,560.8" stroke="#5a5a5a" stroke-width="0.9"/>
<path d="M980,563.8 C980,566.5 980,566.5 980,569.2" stroke="#5a5a5a" stroke-width="0.9"/>
<path d="M980,572.2 C980,575.7 980,575.7 980,579.2" stroke="#5a5a5a" stroke-width="0.9"/>
<path d="M939.3,598.8 C939.3,597.3 954,597.3 954,595.8" stroke="#5a5a5a" stroke-width="0.9"/>
<path d="M954,598.8 C954,602.0 939.3,602.0 939.3,605.2" stroke="#5a5a5a" stroke-width="0.9"/>
<path d="M939.3,608.2 C939.3,606.7 954,606.7 954,605.2" stroke="#5a5a5a" stroke-width="0.9"/>
<path d="M954,608.2 C954,610.85 946.7,610.85 946.7,613.5" stroke="#5a5a5a" stroke-width="0.9"/>
</g>
<rect x="669" y="277.1" width="10" height="4.8" rx="2" fill="#141830"/>
<rect x="670.25" y="278.1" width="7.5" height="2.8" rx="1" fill="#f0e020" stroke="#111" stroke-width="0.4"/>
<rect x="679" y="278.5" width="6" height="1" fill="#6a6a6a"/>
<path d="M665,289.5 L668,292 L665,294.5 Z M671,289.5 L668,292 L671,294.5 Z" fill="#a8c8f0" stroke="#223" stroke-width="0.3"/>
<rect x="675" y="293.1" width="10" height="4.8" rx="2" fill="#141830"/>
<rect x="676.25" y="294.1" width="7.5" height="2.8" rx="1" fill="#f0e020" stroke="#111" stroke-width="0.4"/>
<rect x="685" y="294.5" width="6" height="1" fill="#6a6a6a"/>
<rect x="685.0" y="289.2" width="8" height="3.6" rx="1" fill="#dcdcdc" stroke="#111" stroke-width="0.4"/>
<rect x="694.5" y="290" width="8" height="1" fill="#6a6a6a"/>
<rect x="700.5" y="293.7" width="8" height="3.6" rx="1" fill="#dcdcdc" stroke="#111" stroke-width="0.4"/>
<rect x="710.0" y="294.5" width="8" height="1" fill="#6a6a6a"/>
<rect x="687.5" y="299.35" width="10" height="4.8" rx="2" fill="#141830"/>
<rect x="688.75" y="300.35" width="7.5" height="2.8" rx="1" fill="#f0e020" stroke="#111" stroke-width="0.4"/>
<rect x="697.5" y="300.75" width="6" height="1" fill="#6a6a6a"/>
<rect x="687.0" y="306.95" width="8" height="3.6" rx="1" fill="#dcdcdc" stroke="#111" stroke-width="0.4"/>
<rect x="696.5" y="307.75" width="8" height="1" fill="#6a6a6a"/>
<rect x="675.0" y="310.2" width="8" height="3.6" rx="1" fill="#dcdcdc" stroke="#111" stroke-width="0.4"/>
<rect x="684.5" y="311" width="8" height="1" fill="#6a6a6a"/>
<rect x="667.0" y="315.2" width="8" height="3.6" rx="1" fill="#dcdcdc" stroke="#111" stroke-width="0.4"/>
<rect x="676.5" y="316" width="8" height="1" fill="#6a6a6a"/>
<rect x="661.0" y="321.2" width="8" height="3.6" rx="1" fill="#dcdcdc" stroke="#111" stroke-width="0.4"/>
<rect x="670.5" y="322" width="8" height="1" fill="#6a6a6a"/>
<rect x="661.0" y="328.95" width="8" height="3.6" rx="1" fill="#dcdcdc" stroke="#111" stroke-width="0.4"/>
<rect x="670.5" y="329.75" width="8" height="1" fill="#6a6a6a"/>
<rect x="674.0" y="334.95" width="8" height="3.6" rx="1" fill="#dcdcdc" stroke="#111" stroke-width="0.4"/>
<rect x="683.5" y="335.75" width="8" height="1" fill="#6a6a6a"/>
<rect x="656.5" y="367.7" width="8" height="3.6" rx="1" fill="#dcdcdc" stroke="#111" stroke-width="0.4"/>
<rect x="666.0" y="368.5" width="8" height="1" fill="#6a6a6a"/>
<rect x="656.5" y="374.45" width="8" height="3.6" rx="1" fill="#dcdcdc" stroke="#111" stroke-width="0.4"/>
<rect x="666.0" y="375.25" width="8" height="1" fill="#6a6a6a"/>
<rect x="656.5" y="379.45" width="8" height="3.6" rx="1" fill="#dcdcdc" stroke="#111" stroke-width="0.4"/>
<rect x="666.0" y="380.25" width="8" height="1" fill="#6a6a6a"/>
<rect x="739.5" y="277.1" width="10" height="4.8" rx="2" fill="#141830"/>
<rect x="740.75" y="278.1" width="7.5" height="2.8" rx="1" fill="#f0e020" stroke="#111" stroke-width="0.4"/>
<rect x="749.5" y="278.5" width="6" height="1" fill="#6a6a6a"/>
<path d="M738,291.5 L741,294 L738,296.5 Z M744,291.5 L741,294 L744,296.5 Z" fill="#a8c8f0" stroke="#223" stroke-width="0.3"/>
<rect x="753.5" y="290.2" width="8" height="3.6" rx="1" fill="#dcdcdc" stroke="#111" stroke-width="0.4"/>
<rect x="763.0" y="291" width="8" height="1" fill="#6a6a6a"/>
<rect x="743" y="294.6" width="10" height="4.8" rx="2" fill="#141830"/>
<rect x="744.25" y="295.6" width="7.5" height="2.8" rx="1" fill="#f0e020" stroke="#111" stroke-width="0.4"/>
<rect x="753" y="296" width="6" height="1" fill="#6a6a6a"/>
<rect x="769.0" y="294.95" width="8" height="3.6" rx="1" fill="#dcdcdc" stroke="#111" stroke-width="0.4"/>
<rect x="778.5" y="295.75" width="8" height="1" fill="#6a6a6a"/>
<rect x="755.5" y="300.6" width="10" height="4.8" rx="2" fill="#141830"/>
<rect x="756.75" y="301.6" width="7.5" height="2.8" rx="1" fill="#f0e020" stroke="#111" stroke-width="0.4"/>
<rect x="765.5" y="302" width="6" height="1" fill="#6a6a6a"/>
<rect x="752.0" y="307.45" width="8" height="3.6" rx="1" fill="#dcdcdc" stroke="#111" stroke-width="0.4"/>
<rect x="761.5" y="308.25" width="8" height="1" fill="#6a6a6a"/>
<rect x="738.5" y="313.2" width="8" height="3.6" rx="1" fill="#dcdcdc" stroke="#111" stroke-width="0.4"/>
<rect x="748.0" y="314" width="8" height="1" fill="#6a6a6a"/>
<rect x="805" y="277.1" width="10" height="4.8" rx="2" fill="#141830"/>
<rect x="806.25" y="278.1" width="7.5" height="2.8" rx="1" fill="#f0e020" stroke="#111" stroke-width="0.4"/>
<rect x="815" y="278.5" width="6" height="1" fill="#6a6a6a"/>
<path d="M807,290.0 L810,292.5 L807,295.0 Z M813,290.0 L810,292.5 L813,295.0 Z" fill="#a8c8f0" stroke="#223" stroke-width="0.3"/>
<rect x="822.0" y="288.7" width="8" height="3.6" rx="1" fill="#dcdcdc" stroke="#111" stroke-width="0.4"/>
<rect x="831.5" y="289.5" width="8" height="1" fill="#6a6a6a"/>
<rect x="812.5" y="293.1" width="10" height="4.8" rx="2" fill="#141830"/>
<rect x="813.75" y="294.1" width="7.5" height="2.8" rx="1" fill="#f0e020" stroke="#111" stroke-width="0.4"/>
<rect x="822.5" y="294.5" width="6" height="1" fill="#6a6a6a"/>
<rect x="838.5" y="293.2" width="8" height="3.6" rx="1" fill="#dcdcdc" stroke="#111" stroke-width="0.4"/>
<rect x="848.0" y="294" width="8" height="1" fill="#6a6a6a"/>
<rect x="824.5" y="298.6" width="10" height="4.8" rx="2" fill="#141830"/>
<rect x="825.75" y="299.6" width="7.5" height="2.8" rx="1" fill="#f0e020" stroke="#111" stroke-width="0.4"/>
<rect x="834.5" y="300" width="6" height="1" fill="#6a6a6a"/>
<rect x="808.0" y="306.2" width="8" height="3.6" rx="1" fill="#dcdcdc" stroke="#111" stroke-width="0.4"/>
<rect x="817.5" y="307" width="8" height="1" fill="#6a6a6a"/>
<rect x="820.5" y="306.2" width="8" height="3.6" rx="1" fill="#dcdcdc" stroke="#111" stroke-width="0.4"/>
<rect x="830.0" y="307" width="8" height="1" fill="#6a6a6a"/>
<rect x="802.0" y="315.2" width="8" height="3.6" rx="1" fill="#dcdcdc" stroke="#111" stroke-width="0.4"/>
<rect x="811.5" y="316" width="8" height="1" fill="#6a6a6a"/>
<rect x="820.5" y="311.95" width="8" height="3.6" rx="1" fill="#dcdcdc" stroke="#111" stroke-width="0.4"/>
<rect x="830.0" y="312.75" width="8" height="1" fill="#6a6a6a"/>
<rect x="805.5" y="321.2" width="8" height="3.6" rx="1" fill="#dcdcdc" stroke="#111" stroke-width="0.4"/>
<rect x="815.0" y="322" width="8" height="1" fill="#6a6a6a"/>
<rect x="826.0" y="320.2" width="8" height="3.6" rx="1" fill="#dcdcdc" stroke="#111" stroke-width="0.4"/>
<rect x="835.5" y="321" width="8" height="1" fill="#6a6a6a"/>
<rect x="808.0" y="326.95" width="8" height="3.6" rx="1" fill="#dcdcdc" stroke="#111" stroke-width="0.4"/>
<rect x="817.5" y="327.75" width="8" height="1" fill="#6a6a6a"/>
<rect x="865.5" y="277.1" width="10" height="4.8" rx="2" fill="#141830"/>
<rect x="866.75" y="278.1" width="7.5" height="2.8" rx="1" fill="#f0e020" stroke="#111" stroke-width="0.4"/>
<rect x="875.5" y="278.5" width="6" height="1" fill="#6a6a6a"/>
<path d="M867.5,289.5 L870.5,292 L867.5,294.5 Z M873.5,289.5 L870.5,292 L873.5,294.5 Z" fill="#a8c8f0" stroke="#223" stroke-width="0.3"/>
<rect x="883.0" y="287.7" width="8" height="3.6" rx="1" fill="#dcdcdc" stroke="#111" stroke-width="0.4"/>
<rect x="892.5" y="288.5" width="8" height="1" fill="#6a6a6a"/>
<rect x="873" y="291.85" width="10" height="4.8" rx="2" fill="#141830"/>
<rect x="874.25" y="292.85" width="7.5" height="2.8" rx="1" fill="#f0e020" stroke="#111" stroke-width="0.4"/>
<rect x="883" y="293.25" width="6" height="1" fill="#6a6a6a"/>
<rect x="898.0" y="292.45" width="8" height="3.6" rx="1" fill="#dcdcdc" stroke="#111" stroke-width="0.4"/>
<rect x="907.5" y="293.25" width="8" height="1" fill="#6a6a6a"/>
<rect x="885" y="298.1" width="10" height="4.8" rx="2" fill="#141830"/>
<rect x="886.25" y="299.1" width="7.5" height="2.8" rx="1" fill="#f0e020" stroke="#111" stroke-width="0.4"/>
<rect x="895" y="299.5" width="6" height="1" fill="#6a6a6a"/>
<rect x="868.5" y="305.7" width="8" height="3.6" rx="1" fill="#dcdcdc" stroke="#111" stroke-width="0.4"/>
<rect x="878.0" y="306.5" width="8" height="1" fill="#6a6a6a"/>
<rect x="883.0" y="305.7" width="8" height="3.6" rx="1" fill="#dcdcdc" stroke="#111" stroke-width="0.4"/>
<rect x="892.5" y="306.5" width="8" height="1" fill="#6a6a6a"/>
<rect x="861.75" y="314.45" width="8" height="3.6" rx="1" fill="#dcdcdc" stroke="#111" stroke-width="0.4"/>
<rect x="871.25" y="315.25" width="8" height="1" fill="#6a6a6a"/>
<rect x="862.0" y="320.2" width="8" height="3.6" rx="1" fill="#dcdcdc" stroke="#111" stroke-width="0.4"/>
<rect x="871.5" y="321" width="8" height="1" fill="#6a6a6a"/>
<rect x="869.75" y="326.2" width="8" height="3.6" rx="1" fill="#dcdcdc" stroke="#111" stroke-width="0.4"/>
<rect x="879.25" y="327" width="8" height="1" fill="#6a6a6a"/>
<rect x="881.0" y="332.7" width="8" height="3.6" rx="1" fill="#dcdcdc" stroke="#111" stroke-width="0.4"/>
<rect x="890.5" y="333.5" width="8" height="1" fill="#6a6a6a"/>
<rect x="923.75" y="277.1" width="10" height="4.8" rx="2" fill="#141830"/>
<rect x="925.0" y="278.1" width="7.5" height="2.8" rx="1" fill="#f0e020" stroke="#111" stroke-width="0.4"/>
<rect x="933.75" y="278.5" width="6" height="1" fill="#6a6a6a"/>
<path d="M925.75,290.75 L928.75,293.25 L925.75,295.75 Z M931.75,290.75 L928.75,293.25 L931.75,295.75 Z" fill="#a8c8f0" stroke="#223" stroke-width="0.3"/>
<rect x="940.5" y="289.45" width="8" height="3.6" rx="1" fill="#dcdcdc" stroke="#111" stroke-width="0.4"/>
<rect x="950.0" y="290.25" width="8" height="1" fill="#6a6a6a"/>
<rect x="931" y="293.35" width="10" height="4.8" rx="2" fill="#141830"/>
<rect x="932.25" y="294.35" width="7.5" height="2.8" rx="1" fill="#f0e020" stroke="#111" stroke-width="0.4"/>
<rect x="941" y="294.75" width="6" height="1" fill="#6a6a6a"/>
<rect x="953.0" y="293.2" width="8" height="3.6" rx="1" fill="#dcdcdc" stroke="#111" stroke-width="0.4"/>
<rect x="962.5" y="294" width="8" height="1" fill="#6a6a6a"/>
<rect x="943" y="300.1" width="10" height="4.8" rx="2" fill="#141830"/>
<rect x="944.25" y="301.1" width="7.5" height="2.8" rx="1" fill="#f0e020" stroke="#111" stroke-width="0.4"/>
<rect x="953" y="301.5" width="6" height="1" fill="#6a6a6a"/>
<rect x="931.0" y="301.2" width="8" height="3.6" rx="1" fill="#dcdcdc" stroke="#111" stroke-width="0.4"/>
<rect x="940.5" y="302" width="8" height="1" fill="#6a6a6a"/>
<rect x="941.0" y="308.95" width="8" height="3.6" rx="1" fill="#dcdcdc" stroke="#111" stroke-width="0.4"/>
<rect x="950.5" y="309.75" width="8" height="1" fill="#6a6a6a"/>
<rect x="926.0" y="312.7" width="8" height="3.6" rx="1" fill="#dcdcdc" stroke="#111" stroke-width="0.4"/>
<rect x="935.5" y="313.5" width="8" height="1" fill="#6a6a6a"/>
<rect x="941.0" y="314.45" width="8" height="3.6" rx="1" fill="#dcdcdc" stroke="#111" stroke-width="0.4"/>
<rect x="950.5" y="315.25" width="8" height="1" fill="#6a6a6a"/>
<rect x="917.0" y="321.45" width="8" height="3.6" rx="1" fill="#dcdcdc" stroke="#111" stroke-width="0.4"/>
<rect x="926.5" y="322.25" width="8" height="1" fill="#6a6a6a"/>
<rect x="917.0" y="327.7" width="8" height="3.6" rx="1" fill="#dcdcdc" stroke="#111" stroke-width="0.4"/>
<rect x="926.5" y="328.5" width="8" height="1" fill="#6a6a6a"/>
<rect x="917.0" y="332.7" width="8" height="3.6" rx="1" fill="#dcdcdc" stroke="#111" stroke-width="0.4"/>
<rect x="926.5" y="333.5" width="8" height="1" fill="#6a6a6a"/>
<rect x="917.0" y="336.45" width="8" height="3.6" rx="1" fill="#dcdcdc" stroke="#111" stroke-width="0.4"/>
<rect x="926.5" y="337.25" width="8" height="1" fill="#6a6a6a"/>
<rect x="917.0" y="342.7" width="8" height="3.6" rx="1" fill="#dcdcdc" stroke="#111" stroke-width="0.4"/>
<rect x="926.5" y="343.5" width="8" height="1" fill="#6a6a6a"/>
<rect x="917.0" y="348.7" width="8" height="3.6" rx="1" fill="#dcdcdc" stroke="#111" stroke-width="0.4"/>
<rect x="926.5" y="349.5" width="8" height="1" fill="#6a6a6a"/>
<rect x="917.0" y="353.7" width="8" height="3.6" rx="1" fill="#dcdcdc" stroke="#111" stroke-width="0.4"/>
<rect x="926.5" y="354.5" width="8" height="1" fill="#6a6a6a"/>
<rect x="987" y="277.1" width="10" height="4.8" rx="2" fill="#141830"/>
<rect x="988.25" y="278.1" width="7.5" height="2.8" rx="1" fill="#f0e020" stroke="#111" stroke-width="0.4"/>
<rect x="997" y="278.5" width="6" height="1" fill="#6a6a6a"/>
<path d="M989,291.25 L992,293.75 L989,296.25 Z M995,291.25 L992,293.75 L995,296.25 Z" fill="#a8c8f0" stroke="#223" stroke-width="0.3"/>
<rect x="1004.0" y="289.45" width="8" height="3.6" rx="1" fill="#dcdcdc" stroke="#111" stroke-width="0.4"/>
<rect x="1013.5" y="290.25" width="8" height="1" fill="#6a6a6a"/>
<rect x="994.25" y="293.85" width="10" height="4.8" rx="2" fill="#141830"/>
<rect x="995.5" y="294.85" width="7.5" height="2.8" rx="1" fill="#f0e020" stroke="#111" stroke-width="0.4"/>
<rect x="1004.25" y="295.25" width="6" height="1" fill="#6a6a6a"/>
<rect x="1019.75" y="294.45" width="8" height="3.6" rx="1" fill="#dcdcdc" stroke="#111" stroke-width="0.4"/>
<rect x="1029.25" y="295.25" width="8" height="1" fill="#6a6a6a"/>
<rect x="1006.25" y="300.1" width="10" height="4.8" rx="2" fill="#141830"/>
<rect x="1007.5" y="301.1" width="7.5" height="2.8" rx="1" fill="#f0e020" stroke="#111" stroke-width="0.4"/>
<rect x="1016.25" y="301.5" width="6" height="1" fill="#6a6a6a"/>
<rect x="989.75" y="307.45" width="8" height="3.6" rx="1" fill="#dcdcdc" stroke="#111" stroke-width="0.4"/>
<rect x="999.25" y="308.25" width="8" height="1" fill="#6a6a6a"/>
<rect x="984.0" y="316.2" width="8" height="3.6" rx="1" fill="#dcdcdc" stroke="#111" stroke-width="0.4"/>
<rect x="993.5" y="317" width="8" height="1" fill="#6a6a6a"/>
<rect x="958.0" y="293.95" width="8" height="3.6" rx="1" fill="#dcdcdc" stroke="#111" stroke-width="0.4"/>
<rect x="967.5" y="294.75" width="8" height="1" fill="#6a6a6a"/>
<rect x="1071.0" y="277.9" width="8" height="3.2" rx="1" fill="#5a9ae0" stroke="#111" stroke-width="0.4"/>
<rect x="1080.5" y="278.5" width="8" height="1" fill="#6a6a6a"/>
<rect x="1059.75" y="283.95" width="8" height="3.6" rx="1" fill="#dcdcdc" stroke="#111" stroke-width="0.4"/>
<rect x="1069.25" y="284.75" width="8" height="1" fill="#6a6a6a"/>
<path d="M1060.75,290.0 L1063.75,292.5 L1060.75,295.0 Z M1066.75,290.0 L1063.75,292.5 L1066.75,295.0 Z" fill="#a8c8f0" stroke="#223" stroke-width="0.3"/>
<path d="M1072,290.0 L1075,292.5 L1072,295.0 Z M1078,290.0 L1075,292.5 L1078,295.0 Z" fill="#a8c8f0" stroke="#223" stroke-width="0.3"/>
<rect x="1086.75" y="287.45" width="8" height="3.6" rx="1" fill="#dcdcdc" stroke="#111" stroke-width="0.4"/>
<rect x="1096.25" y="288.25" width="8" height="1" fill="#6a6a6a"/>
<rect x="1086.75" y="292.7" width="8" height="3.6" rx="1" fill="#dcdcdc" stroke="#111" stroke-width="0.4"/>
<rect x="1096.25" y="293.5" width="8" height="1" fill="#6a6a6a"/>
<rect x="1102.75" y="291.95" width="8" height="3.6" rx="1" fill="#dcdcdc" stroke="#111" stroke-width="0.4"/>
<rect x="1112.25" y="292.75" width="8" height="1" fill="#6a6a6a"/>
<rect x="1101.5" y="298.7" width="8" height="3.6" rx="1" fill="#dcdcdc" stroke="#111" stroke-width="0.4"/>
<rect x="1111.0" y="299.5" width="8" height="1" fill="#6a6a6a"/>
<rect x="1061.75" y="306.2" width="8" height="3.6" rx="1" fill="#dcdcdc" stroke="#111" stroke-width="0.4"/>
<rect x="1071.25" y="307" width="8" height="1" fill="#6a6a6a"/>
<rect x="1072.25" y="306.2" width="8" height="3.6" rx="1" fill="#dcdcdc" stroke="#111" stroke-width="0.4"/>
<rect x="1081.75" y="307" width="8" height="1" fill="#6a6a6a"/>
<rect x="1062.75" y="312.45" width="8" height="3.6" rx="1" fill="#dcdcdc" stroke="#111" stroke-width="0.4"/>
<rect x="1072.25" y="313.25" width="8" height="1" fill="#6a6a6a"/>
<rect x="1072.75" y="320.7" width="8" height="3.6" rx="1" fill="#dcdcdc" stroke="#111" stroke-width="0.4"/>
<rect x="1082.25" y="321.5" width="8" height="1" fill="#6a6a6a"/>
<rect x="1066.5" y="325.7" width="8" height="3.6" rx="1" fill="#dcdcdc" stroke="#111" stroke-width="0.4"/>
<rect x="1076.0" y="326.5" width="8" height="1" fill="#6a6a6a"/>
<rect x="1061.75" y="337.7" width="8" height="3.6" rx="1" fill="#dcdcdc" stroke="#111" stroke-width="0.4"/>
<rect x="1071.25" y="338.5" width="8" height="1" fill="#6a6a6a"/>
<rect x="1076.75" y="335.2" width="8" height="3.6" rx="1" fill="#dcdcdc" stroke="#111" stroke-width="0.4"/>
<rect x="1086.25" y="336" width="8" height="1" fill="#6a6a6a"/>
<rect x="1076.75" y="341.2" width="8" height="3.6" rx="1" fill="#dcdcdc" stroke="#111" stroke-width="0.4"/>
<rect x="1086.25" y="342" width="8" height="1" fill="#6a6a6a"/>
<rect x="1076.75" y="347.7" width="8" height="3.6" rx="1" fill="#dcdcdc" stroke="#111" stroke-width="0.4"/>
<rect x="1086.25" y="348.5" width="8" height="1" fill="#6a6a6a"/>
<path d="M1077.75,367.5 L1080.75,370 L1077.75,372.5 Z M1083.75,367.5 L1080.75,370 L1083.75,372.5 Z" fill="#a8c8f0" stroke="#223" stroke-width="0.3"/>
<rect x="1129.0" y="277.9" width="8" height="3.2" rx="1" fill="#5a9ae0" stroke="#111" stroke-width="0.4"/>
<rect x="1138.5" y="278.5" width="8" height="1" fill="#6a6a6a"/>
<path d="M1130,286.75 L1133,289.25 L1130,291.75 Z M1136,286.75 L1133,289.25 L1136,291.75 Z" fill="#a8c8f0" stroke="#223" stroke-width="0.3"/>
<rect x="1145.25" y="284.95" width="8" height="3.6" rx="1" fill="#dcdcdc" stroke="#111" stroke-width="0.4"/>
<rect x="1154.75" y="285.75" width="8" height="1" fill="#6a6a6a"/>
<rect x="1135.5" y="289.35" width="10" height="4.8" rx="2" fill="#141830"/>
<rect x="1136.75" y="290.35" width="7.5" height="2.8" rx="1" fill="#f0e020" stroke="#111" stroke-width="0.4"/>
<rect x="1145.5" y="290.75" width="6" height="1" fill="#6a6a6a"/>
<rect x="1161.0" y="289.95" width="8" height="3.6" rx="1" fill="#dcdcdc" stroke="#111" stroke-width="0.4"/>
<rect x="1170.5" y="290.75" width="8" height="1" fill="#6a6a6a"/>
<rect x="1147.5" y="295.6" width="10" height="4.8" rx="2" fill="#141830"/>
<rect x="1148.75" y="296.6" width="7.5" height="2.8" rx="1" fill="#f0e020" stroke="#111" stroke-width="0.4"/>
<rect x="1157.5" y="297" width="6" height="1" fill="#6a6a6a"/>
<rect x="1131.5" y="303.2" width="8" height="3.6" rx="1" fill="#dcdcdc" stroke="#111" stroke-width="0.4"/>
<rect x="1141.0" y="304" width="8" height="1" fill="#6a6a6a"/>
<rect x="1125.5" y="311.45" width="8" height="3.6" rx="1" fill="#dcdcdc" stroke="#111" stroke-width="0.4"/>
<rect x="1135.0" y="312.25" width="8" height="1" fill="#6a6a6a"/>
<rect x="1224.25" y="282.7" width="8" height="3.6" rx="1" fill="#dcdcdc" stroke="#111" stroke-width="0.4"/>
<rect x="1233.75" y="283.5" width="8" height="1" fill="#6a6a6a"/>
<rect x="1237.25" y="277.9" width="8" height="3.2" rx="1" fill="#5a9ae0" stroke="#111" stroke-width="0.4"/>
<rect x="1246.75" y="278.5" width="8" height="1" fill="#6a6a6a"/>
<path d="M1225.25,290.25 L1228.25,292.75 L1225.25,295.25 Z M1231.25,290.25 L1228.25,292.75 L1231.25,295.25 Z" fill="#a8c8f0" stroke="#223" stroke-width="0.3"/>
<path d="M1238.25,290.25 L1241.25,292.75 L1238.25,295.25 Z M1244.25,290.25 L1241.25,292.75 L1244.25,295.25 Z" fill="#a8c8f0" stroke="#223" stroke-width="0.3"/>
<rect x="1253.5" y="289.45" width="8" height="3.6" rx="1" fill="#dcdcdc" stroke="#111" stroke-width="0.4"/>
<rect x="1263.0" y="290.25" width="8" height="1" fill="#6a6a6a"/>
<rect x="1243.75" y="293.85" width="10" height="4.8" rx="2" fill="#141830"/>
<rect x="1245.0" y="294.85" width="7.5" height="2.8" rx="1" fill="#f0e020" stroke="#111" stroke-width="0.4"/>
<rect x="1253.75" y="295.25" width="6" height="1" fill="#6a6a6a"/>
<rect x="1269.75" y="294.45" width="8" height="3.6" rx="1" fill="#dcdcdc" stroke="#111" stroke-width="0.4"/>
<rect x="1279.25" y="295.25" width="8" height="1" fill="#6a6a6a"/>
<rect x="1256.25" y="300.1" width="10" height="4.8" rx="2" fill="#141830"/>
<rect x="1257.5" y="301.1" width="7.5" height="2.8" rx="1" fill="#f0e020" stroke="#111" stroke-width="0.4"/>
<rect x="1266.25" y="301.5" width="6" height="1" fill="#6a6a6a"/>
<rect x="1225.5" y="307.45" width="8" height="3.6" rx="1" fill="#dcdcdc" stroke="#111" stroke-width="0.4"/>
<rect x="1235.0" y="308.25" width="8" height="1" fill="#6a6a6a"/>
<rect x="1239.25" y="307.45" width="8" height="3.6" rx="1" fill="#dcdcdc" stroke="#111" stroke-width="0.4"/>
<rect x="1248.75" y="308.25" width="8" height="1" fill="#6a6a6a"/>
<rect x="1225.5" y="311.95" width="8" height="3.6" rx="1" fill="#dcdcdc" stroke="#111" stroke-width="0.4"/>
<rect x="1235.0" y="312.75" width="8" height="1" fill="#6a6a6a"/>
<rect x="1252.25" y="313.7" width="8" height="3.6" rx="1" fill="#dcdcdc" stroke="#111" stroke-width="0.4"/>
<rect x="1261.75" y="314.5" width="8" height="1" fill="#6a6a6a"/>
<rect x="1236.75" y="321.2" width="8" height="3.6" rx="1" fill="#dcdcdc" stroke="#111" stroke-width="0.4"/>
<rect x="1246.25" y="322" width="8" height="1" fill="#6a6a6a"/>
<rect x="873.3" y="437.2" width="8" height="3.6" rx="1" fill="#dcdcdc" stroke="#111" stroke-width="0.4"/>
<rect x="882.8" y="438" width="8" height="1" fill="#6a6a6a"/>
<rect x="892.7" y="437.2" width="8" height="3.6" rx="1" fill="#dcdcdc" stroke="#111" stroke-width="0.4"/>
<rect x="902.2" y="438" width="8" height="1" fill="#6a6a6a"/>
<rect x="892.7" y="442.5" width="8" height="3.6" rx="1" fill="#dcdcdc" stroke="#111" stroke-width="0.4"/>
<rect x="902.2" y="443.3" width="8" height="1" fill="#6a6a6a"/>
<rect x="915.5" y="484.2" width="8" height="3.6" rx="1" fill="#dcdcdc" stroke="#111" stroke-width="0.4"/>
<rect x="925.0" y="485" width="8" height="1" fill="#6a6a6a"/>
<rect x="930.0" y="499.2" width="8" height="3.6" rx="1" fill="#dcdcdc" stroke="#111" stroke-width="0.4"/>
<rect x="939.5" y="500" width="8" height="1" fill="#6a6a6a"/>
<rect x="915.3" y="506.5" width="8" height="3.6" rx="1" fill="#dcdcdc" stroke="#111" stroke-width="0.4"/>
<rect x="924.8" y="507.3" width="8" height="1" fill="#6a6a6a"/>
<rect x="915.3" y="514.9000000000001" width="8" height="3.6" rx="1" fill="#dcdcdc" stroke="#111" stroke-width="0.4"/>
<rect x="924.8" y="515.7" width="8" height="1" fill="#6a6a6a"/>
<rect x="915.3" y="522.2" width="8" height="3.6" rx="1" fill="#dcdcdc" stroke="#111" stroke-width="0.4"/>
<rect x="924.8" y="523" width="8" height="1" fill="#6a6a6a"/>
<path d="M916.3,529.2 L919.3,531.7 L916.3,534.2 Z M922.3,529.2 L919.3,531.7 L922.3,534.2 Z" fill="#a8c8f0" stroke="#223" stroke-width="0.3"/>
<rect x="962.0" y="486.5" width="8" height="3.6" rx="1" fill="#dcdcdc" stroke="#111" stroke-width="0.4"/>
<rect x="971.5" y="487.3" width="8" height="1" fill="#6a6a6a"/>
<rect x="976.0" y="554.2" width="8" height="3.6" rx="1" fill="#dcdcdc" stroke="#111" stroke-width="0.4"/>
<rect x="985.5" y="555" width="8" height="1" fill="#6a6a6a"/>
<rect x="976.0" y="560.5" width="8" height="3.6" rx="1" fill="#dcdcdc" stroke="#111" stroke-width="0.4"/>
<rect x="985.5" y="561.3" width="8" height="1" fill="#6a6a6a"/>
<rect x="976.0" y="568.9000000000001" width="8" height="3.6" rx="1" fill="#dcdcdc" stroke="#111" stroke-width="0.4"/>
<rect x="985.5" y="569.7" width="8" height="1" fill="#6a6a6a"/>
<rect x="976.0" y="578.9000000000001" width="8" height="3.6" rx="1" fill="#d08090" stroke="#111" stroke-width="0.4"/>
<rect x="985.5" y="579.7" width="8" height="1" fill="#6a6a6a"/>
<rect x="935.3" y="595.5" width="8" height="3.6" rx="1" fill="#e8d890" stroke="#111" stroke-width="0.4"/>
<rect x="944.8" y="596.3" width="8" height="1" fill="#6a6a6a"/>
<rect x="950.0" y="595.5" width="8" height="3.6" rx="1" fill="#e8d890" stroke="#111" stroke-width="0.4"/>
<rect x="959.5" y="596.3" width="8" height="1" fill="#6a6a6a"/>
<rect x="935.3" y="604.9000000000001" width="8" height="3.6" rx="1" fill="#dcdcdc" stroke="#111" stroke-width="0.4"/>
<rect x="944.8" y="605.7" width="8" height="1" fill="#6a6a6a"/>
<rect x="950.0" y="604.9000000000001" width="8" height="3.6" rx="1" fill="#dcdcdc" stroke="#111" stroke-width="0.4"/>
<rect x="959.5" y="605.7" width="8" height="1" fill="#6a6a6a"/>
<rect x="942.7" y="613.2" width="8" height="3.6" rx="1" fill="#dcdcdc" stroke="#111" stroke-width="0.4"/>
<rect x="952.2" y="614" width="8" height="1" fill="#6a6a6a"/>
<text x="938" y="114.5" font-size="10" fill="#4a4a4a" text-anchor="start" font-weight="normal" textLength="58" lengthAdjust="spacingAndGlyphs" >Indie Edition</text>
<text x="1219" y="117" font-size="10.5" fill="#575757" text-anchor="start" font-weight="bold" textLength="56" lengthAdjust="spacingAndGlyphs" >Geometry</text>
<rect x="0" y="671" width="1280" height="1.5" fill="#1e1e1e" />
<rect x="0" y="672.5" width="1280" height="33.5" fill="#2e2e2e" />
<rect x="0" y="706" width="1280" height="14" fill="#1c1c1c" />
<rect x="0" y="672.5" width="4" height="33.5" fill="#262626" />
<rect x="7.2" y="676" width="12.8" height="14" fill="#3a3a3a" />
<rect x="21" y="676" width="12.299999999999997" height="14" fill="#3a3a3a" />
<rect x="35" y="676" width="12.799999999999997" height="14" fill="#5b7ea8" />
<rect x="36" y="677" width="10.799999999999997" height="12" fill="#6c8db5" />
<rect x="48.9" y="676" width="12.100000000000001" height="14" fill="#3a3a3a" />
<rect x="62" y="676" width="13" height="14" fill="#3a3a3a" />
<path d="M9.5,679.5 v7 M16,679.5 l-5,3.5 l5,3.5 z M19.5,679.5 l-4,3.5 l4,3.5 z" stroke="#eee" fill="#eee" stroke-width="0.9" />
<path d="M30,679 l-6,4 l6,4 z" stroke="none" fill="#eee" stroke-width="1" />
<rect x="38.5" y="679.5" width="6" height="7" fill="#e8e8e8" />
<rect x="39.5" y="680.5" width="4" height="5" fill="#c9c9c9" />
<path d="M52,679 l6,4 l-6,4 z" stroke="none" fill="#eee" stroke-width="1" />
<path d="M63.5,679.5 l4,3.5 l-4,3.5 z M67.5,679.5 l4,3.5 l-4,3.5 z M72.5,679.5 v7" stroke="#eee" fill="#eee" stroke-width="0.9" />
<rect x="76.7" y="676" width="23.3" height="14" fill="#161616" />
<text x="78" y="685.8" font-size="7.5" fill="#e8e8e8" text-anchor="start" font-weight="normal" textLength="15" lengthAdjust="spacingAndGlyphs" font-family="Liberation Sans" font-weight="bold">1051</text>
<rect x="100.5" y="676.5" width="6.5" height="13.5" fill="#3a3a3a" />
<rect x="107.8" y="676.5" width="5.200000000000003" height="13.5" fill="#3a3a3a" />
<path d="M102,683.3 l2.5,-2 v4 z M105,681 v4.5" stroke="#ddd" fill="#ddd" stroke-width="0.5" />
<path d="M111.5,683.3 l-2.5,-2 v4 z M108.5,681 v4.5" stroke="#ddd" fill="#ddd" stroke-width="0.5" />
<rect x="7.2" y="694" width="12.8" height="11" fill="#3a3a3a" />
<rect x="21" y="694" width="12.299999999999997" height="11" fill="#3a3a3a" />
<rect x="35" y="694" width="12.200000000000003" height="11" fill="#3a3a3a" />
<rect x="48.3" y="694" width="12.700000000000003" height="11" fill="#5b7ea8" />
<rect x="49.3" y="695" width="10.700000000000003" height="9" fill="#6c8db5" />
<rect x="62" y="694" width="12.400000000000006" height="11" fill="#383838" />
<rect x="76" y="694" width="12.299999999999997" height="11" fill="#383838" />
<rect x="90" y="694" width="10" height="11" fill="#303030" />
<rect x="101" y="694" width="11" height="11" fill="#303030" />
<rect x="11" y="697" width="6" height="6" fill="#e8e8e8" />
<path d="M15,701 l3,2 l-3,1 z" stroke="none" fill="#fff" stroke-width="1" />
<ellipse cx="28" cy="699.5" rx="2.2" ry="4" fill="none" stroke="#ddd" stroke-width="0.8"/>
<path d="M23,699.5 h2" stroke="#ddd" fill="none" stroke-width="0.8" />
<path d="M37,701 q4,-6 8,0 h-8" stroke="#eee" fill="none" stroke-width="0.9" />
<circle cx="54.6" cy="699.5" r="3.5" fill="none" stroke="#111" stroke-width="0.9"/>
<path d="M53.5,697.5 l3,2 l-3,2 z" stroke="none" fill="#111" stroke-width="1" />
<path d="M64,697 v2 h1 M67,697 v2 M70,697 v2 h1 v3" stroke="#888" fill="none" stroke-width="0.6" />
<path d="M78,699.5 h8" stroke="#eee" fill="none" stroke-width="0.9" />
<rect x="80.5" y="698" width="3" height="3" fill="#eee" />
<path d="M93,697 v5 M97,697 l-3,2.5 l3,2.5 z" stroke="#4a7a3a" fill="#4a7a3a" stroke-width="0.6" />
<path d="M104,697 l3,2.5 l-3,2.5 z M109,697 v5" stroke="#4a7a3a" fill="#4a7a3a" stroke-width="0.6" />
<rect x="117" y="694.25" width="17.4" height="9.5" fill="#141414" />
<text x="118.5" y="701.8" font-size="7" fill="#eaeaea" text-anchor="start" font-weight="normal" textLength="15" lengthAdjust="spacingAndGlyphs" font-family="Liberation Sans" font-weight="bold">1001</text>
<rect x="138.75" y="694.25" width="20" height="9.5" fill="#141414" />
<text x="140" y="701.8" font-size="7" fill="#eaeaea" text-anchor="start" font-weight="normal" textLength="15" lengthAdjust="spacingAndGlyphs" font-family="Liberation Sans" font-weight="bold">1001</text>
<rect x="160" y="698.5" width="663" height="2" fill="#bdbdbd" />
<path d="M160,695.5 l3.5,3.5 l-3.5,3.5 z" stroke="none" fill="#ddd" stroke-width="1" />
<path d="M822,696.5 l2,2.5 l-2,2.5 l-2,-2.5 z" stroke="none" fill="#ddd" stroke-width="1" />
<rect x="824" y="699" width="288" height="1.2" fill="#181818" />
<rect x="1112.5" y="695" width="20" height="8.75" fill="#141414" />
<text x="1114" y="701.9" font-size="7" fill="#eaeaea" text-anchor="start" font-weight="normal" textLength="15" lengthAdjust="spacingAndGlyphs" font-family="Liberation Sans" font-weight="bold">1105</text>
<rect x="1135" y="695" width="17.5" height="8.75" fill="#141414" />
<text x="1136" y="701.9" font-size="7" fill="#eaeaea" text-anchor="start" font-weight="normal" textLength="15" lengthAdjust="spacingAndGlyphs" font-family="Liberation Sans" font-weight="bold">1150</text>
<rect x="114.13" y="683" width="1028.87" height="0.9" fill="#8a8a8a" />
<text x="116.13" y="677.6" font-size="4.4" fill="#858585" text-anchor="start" font-weight="normal" textLength="5" lengthAdjust="spacingAndGlyphs" >01</text>
<text x="126.026" y="677.6" font-size="4.4" fill="#858585" text-anchor="start" font-weight="normal" textLength="5" lengthAdjust="spacingAndGlyphs" >02</text>
<text x="135.922" y="677.6" font-size="4.4" fill="#858585" text-anchor="start" font-weight="normal" textLength="5" lengthAdjust="spacingAndGlyphs" >03</text>
<text x="145.81799999999998" y="677.6" font-size="4.4" fill="#858585" text-anchor="start" font-weight="normal" textLength="5" lengthAdjust="spacingAndGlyphs" >04</text>
<text x="155.714" y="677.6" font-size="4.4" fill="#858585" text-anchor="start" font-weight="normal" textLength="5" lengthAdjust="spacingAndGlyphs" >05</text>
<text x="165.61" y="677.6" font-size="4.4" fill="#858585" text-anchor="start" font-weight="normal" textLength="5" lengthAdjust="spacingAndGlyphs" >06</text>
<text x="175.506" y="677.6" font-size="4.4" fill="#858585" text-anchor="start" font-weight="normal" textLength="5" lengthAdjust="spacingAndGlyphs" >07</text>
<text x="185.902" y="677.6" font-size="4.6" fill="#c8c8c8" text-anchor="start" font-weight="normal" textLength="11" lengthAdjust="spacingAndGlyphs" >1008</text>
<text x="195.298" y="677.6" font-size="4.4" fill="#858585" text-anchor="start" font-weight="normal" textLength="5" lengthAdjust="spacingAndGlyphs" >09</text>
<text x="205.19400000000002" y="677.6" font-size="4.4" fill="#858585" text-anchor="start" font-weight="normal" textLength="5" lengthAdjust="spacingAndGlyphs" >10</text>
<text x="215.09" y="677.6" font-size="4.4" fill="#858585" text-anchor="start" font-weight="normal" textLength="5" lengthAdjust="spacingAndGlyphs" >11</text>
<text x="224.986" y="677.6" font-size="4.4" fill="#858585" text-anchor="start" font-weight="normal" textLength="5" lengthAdjust="spacingAndGlyphs" >12</text>
<text x="234.882" y="677.6" font-size="4.4" fill="#858585" text-anchor="start" font-weight="normal" textLength="5" lengthAdjust="spacingAndGlyphs" >13</text>
<text x="244.77800000000002" y="677.6" font-size="4.4" fill="#858585" text-anchor="start" font-weight="normal" textLength="5" lengthAdjust="spacingAndGlyphs" >14</text>
<text x="254.674" y="677.6" font-size="4.4" fill="#858585" text-anchor="start" font-weight="normal" textLength="5" lengthAdjust="spacingAndGlyphs" >15</text>
<text x="264.57" y="677.6" font-size="4.4" fill="#858585" text-anchor="start" font-weight="normal" textLength="5" lengthAdjust="spacingAndGlyphs" >16</text>
<text x="274.466" y="677.6" font-size="4.4" fill="#858585" text-anchor="start" font-weight="normal" textLength="5" lengthAdjust="spacingAndGlyphs" >17</text>
<text x="284.362" y="677.6" font-size="4.4" fill="#858585" text-anchor="start" font-weight="normal" textLength="5" lengthAdjust="spacingAndGlyphs" >18</text>
<text x="294.25800000000004" y="677.6" font-size="4.4" fill="#858585" text-anchor="start" font-weight="normal" textLength="5" lengthAdjust="spacingAndGlyphs" >19</text>
<text x="304.654" y="677.6" font-size="4.6" fill="#c8c8c8" text-anchor="start" font-weight="normal" textLength="11" lengthAdjust="spacingAndGlyphs" >1020</text>
<text x="314.05" y="677.6" font-size="4.4" fill="#858585" text-anchor="start" font-weight="normal" textLength="5" lengthAdjust="spacingAndGlyphs" >21</text>
<text x="323.946" y="677.6" font-size="4.4" fill="#858585" text-anchor="start" font-weight="normal" textLength="5" lengthAdjust="spacingAndGlyphs" >22</text>
<text x="333.842" y="677.6" font-size="4.4" fill="#858585" text-anchor="start" font-weight="normal" textLength="5" lengthAdjust="spacingAndGlyphs" >23</text>
<text x="343.738" y="677.6" font-size="4.4" fill="#858585" text-anchor="start" font-weight="normal" textLength="5" lengthAdjust="spacingAndGlyphs" >24</text>
<text x="353.634" y="677.6" font-size="4.4" fill="#858585" text-anchor="start" font-weight="normal" textLength="5" lengthAdjust="spacingAndGlyphs" >25</text>
<text x="363.53000000000003" y="677.6" font-size="4.4" fill="#858585" text-anchor="start" font-weight="normal" textLength="5" lengthAdjust="spacingAndGlyphs" >26</text>
<text x="373.42600000000004" y="677.6" font-size="4.4" fill="#858585" text-anchor="start" font-weight="normal" textLength="5" lengthAdjust="spacingAndGlyphs" >27</text>
<text x="383.322" y="677.6" font-size="4.4" fill="#858585" text-anchor="start" font-weight="normal" textLength="5" lengthAdjust="spacingAndGlyphs" >28</text>
<text x="393.218" y="677.6" font-size="4.4" fill="#858585" text-anchor="start" font-weight="normal" textLength="5" lengthAdjust="spacingAndGlyphs" >29</text>
<text x="403.11400000000003" y="677.6" font-size="4.4" fill="#858585" text-anchor="start" font-weight="normal" textLength="5" lengthAdjust="spacingAndGlyphs" >30</text>
<text x="413.01" y="677.6" font-size="4.4" fill="#858585" text-anchor="start" font-weight="normal" textLength="5" lengthAdjust="spacingAndGlyphs" >31</text>
<text x="423.406" y="677.6" font-size="4.6" fill="#c8c8c8" text-anchor="start" font-weight="normal" textLength="11" lengthAdjust="spacingAndGlyphs" >1032</text>
<text x="432.802" y="677.6" font-size="4.4" fill="#858585" text-anchor="start" font-weight="normal" textLength="5" lengthAdjust="spacingAndGlyphs" >33</text>
<text x="442.69800000000004" y="677.6" font-size="4.4" fill="#858585" text-anchor="start" font-weight="normal" textLength="5" lengthAdjust="spacingAndGlyphs" >34</text>
<text x="452.59400000000005" y="677.6" font-size="4.4" fill="#858585" text-anchor="start" font-weight="normal" textLength="5" lengthAdjust="spacingAndGlyphs" >35</text>
<text x="462.49" y="677.6" font-size="4.4" fill="#858585" text-anchor="start" font-weight="normal" textLength="5" lengthAdjust="spacingAndGlyphs" >36</text>
<text x="472.386" y="677.6" font-size="4.4" fill="#858585" text-anchor="start" font-weight="normal" textLength="5" lengthAdjust="spacingAndGlyphs" >37</text>
<text x="482.28200000000004" y="677.6" font-size="4.4" fill="#858585" text-anchor="start" font-weight="normal" textLength="5" lengthAdjust="spacingAndGlyphs" >38</text>
<text x="492.178" y="677.6" font-size="4.4" fill="#858585" text-anchor="start" font-weight="normal" textLength="5" lengthAdjust="spacingAndGlyphs" >39</text>
<text x="502.074" y="677.6" font-size="4.4" fill="#858585" text-anchor="start" font-weight="normal" textLength="5" lengthAdjust="spacingAndGlyphs" >40</text>
<text x="511.97" y="677.6" font-size="4.4" fill="#858585" text-anchor="start" font-weight="normal" textLength="5" lengthAdjust="spacingAndGlyphs" >41</text>
<text x="521.866" y="677.6" font-size="4.4" fill="#858585" text-anchor="start" font-weight="normal" textLength="5" lengthAdjust="spacingAndGlyphs" >42</text>
<text x="531.7620000000001" y="677.6" font-size="4.4" fill="#858585" text-anchor="start" font-weight="normal" textLength="5" lengthAdjust="spacingAndGlyphs" >43</text>
<text x="542.158" y="677.6" font-size="4.6" fill="#c8c8c8" text-anchor="start" font-weight="normal" textLength="11" lengthAdjust="spacingAndGlyphs" >1044</text>
<text x="551.5540000000001" y="677.6" font-size="4.4" fill="#858585" text-anchor="start" font-weight="normal" textLength="5" lengthAdjust="spacingAndGlyphs" >45</text>
<text x="561.45" y="677.6" font-size="4.4" fill="#858585" text-anchor="start" font-weight="normal" textLength="5" lengthAdjust="spacingAndGlyphs" >46</text>
<text x="571.346" y="677.6" font-size="4.4" fill="#858585" text-anchor="start" font-weight="normal" textLength="5" lengthAdjust="spacingAndGlyphs" >47</text>
<text x="581.242" y="677.6" font-size="4.4" fill="#858585" text-anchor="start" font-weight="normal" textLength="5" lengthAdjust="spacingAndGlyphs" >48</text>
<text x="591.138" y="677.6" font-size="4.4" fill="#858585" text-anchor="start" font-weight="normal" textLength="5" lengthAdjust="spacingAndGlyphs" >49</text>
<text x="601.0340000000001" y="677.6" font-size="4.4" fill="#858585" text-anchor="start" font-weight="normal" textLength="5" lengthAdjust="spacingAndGlyphs" >50</text>
<text x="610.9300000000001" y="677.6" font-size="4.4" fill="#858585" text-anchor="start" font-weight="normal" textLength="5" lengthAdjust="spacingAndGlyphs" >51</text>
<text x="620.826" y="677.6" font-size="4.4" fill="#858585" text-anchor="start" font-weight="normal" textLength="5" lengthAdjust="spacingAndGlyphs" >52</text>
<text x="630.7220000000001" y="677.6" font-size="4.4" fill="#858585" text-anchor="start" font-weight="normal" textLength="5" lengthAdjust="spacingAndGlyphs" >53</text>
<text x="640.618" y="677.6" font-size="4.4" fill="#858585" text-anchor="start" font-weight="normal" textLength="5" lengthAdjust="spacingAndGlyphs" >54</text>
<text x="650.514" y="677.6" font-size="4.4" fill="#858585" text-anchor="start" font-weight="normal" textLength="5" lengthAdjust="spacingAndGlyphs" >55</text>
<text x="660.9100000000001" y="677.6" font-size="4.6" fill="#c8c8c8" text-anchor="start" font-weight="normal" textLength="11" lengthAdjust="spacingAndGlyphs" >1056</text>
<text x="670.306" y="677.6" font-size="4.4" fill="#858585" text-anchor="start" font-weight="normal" textLength="5" lengthAdjust="spacingAndGlyphs" >57</text>
<text x="680.202" y="677.6" font-size="4.4" fill="#858585" text-anchor="start" font-weight="normal" textLength="5" lengthAdjust="spacingAndGlyphs" >58</text>
<text x="690.0980000000001" y="677.6" font-size="4.4" fill="#858585" text-anchor="start" font-weight="normal" textLength="5" lengthAdjust="spacingAndGlyphs" >59</text>
<text x="699.994" y="677.6" font-size="4.4" fill="#858585" text-anchor="start" font-weight="normal" textLength="5" lengthAdjust="spacingAndGlyphs" >60</text>
<text x="709.89" y="677.6" font-size="4.4" fill="#858585" text-anchor="start" font-weight="normal" textLength="5" lengthAdjust="spacingAndGlyphs" >61</text>
<text x="719.7860000000001" y="677.6" font-size="4.4" fill="#858585" text-anchor="start" font-weight="normal" textLength="5" lengthAdjust="spacingAndGlyphs" >62</text>
<text x="729.682" y="677.6" font-size="4.4" fill="#858585" text-anchor="start" font-weight="normal" textLength="5" lengthAdjust="spacingAndGlyphs" >63</text>
<text x="739.5780000000001" y="677.6" font-size="4.4" fill="#858585" text-anchor="start" font-weight="normal" textLength="5" lengthAdjust="spacingAndGlyphs" >64</text>
<text x="749.474" y="677.6" font-size="4.4" fill="#858585" text-anchor="start" font-weight="normal" textLength="5" lengthAdjust="spacingAndGlyphs" >65</text>
<text x="759.37" y="677.6" font-size="4.4" fill="#858585" text-anchor="start" font-weight="normal" textLength="5" lengthAdjust="spacingAndGlyphs" >66</text>
<text x="769.2660000000001" y="677.6" font-size="4.4" fill="#858585" text-anchor="start" font-weight="normal" textLength="5" lengthAdjust="spacingAndGlyphs" >67</text>
<text x="779.662" y="677.6" font-size="4.6" fill="#c8c8c8" text-anchor="start" font-weight="normal" textLength="11" lengthAdjust="spacingAndGlyphs" >1068</text>
<text x="789.0580000000001" y="677.6" font-size="4.4" fill="#858585" text-anchor="start" font-weight="normal" textLength="5" lengthAdjust="spacingAndGlyphs" >69</text>
<text x="798.9540000000001" y="677.6" font-size="4.4" fill="#858585" text-anchor="start" font-weight="normal" textLength="5" lengthAdjust="spacingAndGlyphs" >70</text>
<text x="808.85" y="677.6" font-size="4.4" fill="#858585" text-anchor="start" font-weight="normal" textLength="5" lengthAdjust="spacingAndGlyphs" >71</text>
<text x="818.7460000000001" y="677.6" font-size="4.4" fill="#858585" text-anchor="start" font-weight="normal" textLength="5" lengthAdjust="spacingAndGlyphs" >72</text>
<text x="828.642" y="677.6" font-size="4.4" fill="#858585" text-anchor="start" font-weight="normal" textLength="5" lengthAdjust="spacingAndGlyphs" >73</text>
<text x="838.538" y="677.6" font-size="4.4" fill="#858585" text-anchor="start" font-weight="normal" textLength="5" lengthAdjust="spacingAndGlyphs" >74</text>
<text x="848.4340000000001" y="677.6" font-size="4.4" fill="#858585" text-anchor="start" font-weight="normal" textLength="5" lengthAdjust="spacingAndGlyphs" >75</text>
<text x="858.33" y="677.6" font-size="4.4" fill="#858585" text-anchor="start" font-weight="normal" textLength="5" lengthAdjust="spacingAndGlyphs" >76</text>
<text x="868.226" y="677.6" font-size="4.4" fill="#858585" text-anchor="start" font-weight="normal" textLength="5" lengthAdjust="spacingAndGlyphs" >77</text>
<text x="878.1220000000001" y="677.6" font-size="4.4" fill="#858585" text-anchor="start" font-weight="normal" textLength="5" lengthAdjust="spacingAndGlyphs" >78</text>
<text x="888.018" y="677.6" font-size="4.4" fill="#858585" text-anchor="start" font-weight="normal" textLength="5" lengthAdjust="spacingAndGlyphs" >79</text>
<text x="898.4140000000001" y="677.6" font-size="4.6" fill="#c8c8c8" text-anchor="start" font-weight="normal" textLength="11" lengthAdjust="spacingAndGlyphs" >1080</text>
<text x="907.8100000000001" y="677.6" font-size="4.4" fill="#858585" text-anchor="start" font-weight="normal" textLength="5" lengthAdjust="spacingAndGlyphs" >81</text>
<text x="917.706" y="677.6" font-size="4.4" fill="#858585" text-anchor="start" font-weight="normal" textLength="5" lengthAdjust="spacingAndGlyphs" >82</text>
<text x="927.6020000000001" y="677.6" font-size="4.4" fill="#858585" text-anchor="start" font-weight="normal" textLength="5" lengthAdjust="spacingAndGlyphs" >83</text>
<text x="937.498" y="677.6" font-size="4.4" fill="#858585" text-anchor="start" font-weight="normal" textLength="5" lengthAdjust="spacingAndGlyphs" >84</text>
<text x="947.3940000000001" y="677.6" font-size="4.4" fill="#858585" text-anchor="start" font-weight="normal" textLength="5" lengthAdjust="spacingAndGlyphs" >85</text>
<text x="957.2900000000001" y="677.6" font-size="4.4" fill="#858585" text-anchor="start" font-weight="normal" textLength="5" lengthAdjust="spacingAndGlyphs" >86</text>
<text x="967.186" y="677.6" font-size="4.4" fill="#858585" text-anchor="start" font-weight="normal" textLength="5" lengthAdjust="spacingAndGlyphs" >87</text>
<text x="977.0820000000001" y="677.6" font-size="4.4" fill="#858585" text-anchor="start" font-weight="normal" textLength="5" lengthAdjust="spacingAndGlyphs" >88</text>
<text x="986.9780000000001" y="677.6" font-size="4.4" fill="#858585" text-anchor="start" font-weight="normal" textLength="5" lengthAdjust="spacingAndGlyphs" >89</text>
<text x="996.874" y="677.6" font-size="4.4" fill="#858585" text-anchor="start" font-weight="normal" textLength="5" lengthAdjust="spacingAndGlyphs" >90</text>
<text x="1006.7700000000001" y="677.6" font-size="4.4" fill="#858585" text-anchor="start" font-weight="normal" textLength="5" lengthAdjust="spacingAndGlyphs" >91</text>
<text x="1017.166" y="677.6" font-size="4.6" fill="#c8c8c8" text-anchor="start" font-weight="normal" textLength="11" lengthAdjust="spacingAndGlyphs" >1092</text>
<text x="1026.562" y="677.6" font-size="4.4" fill="#858585" text-anchor="start" font-weight="normal" textLength="5" lengthAdjust="spacingAndGlyphs" >93</text>
<text x="1036.458" y="677.6" font-size="4.4" fill="#858585" text-anchor="start" font-weight="normal" textLength="5" lengthAdjust="spacingAndGlyphs" >94</text>
<text x="1046.354" y="677.6" font-size="4.4" fill="#858585" text-anchor="start" font-weight="normal" textLength="5" lengthAdjust="spacingAndGlyphs" >95</text>
<text x="1056.25" y="677.6" font-size="4.4" fill="#858585" text-anchor="start" font-weight="normal" textLength="5" lengthAdjust="spacingAndGlyphs" >96</text>
<text x="1066.1460000000002" y="677.6" font-size="4.4" fill="#858585" text-anchor="start" font-weight="normal" textLength="5" lengthAdjust="spacingAndGlyphs" >97</text>
<text x="1076.042" y="677.6" font-size="4.4" fill="#858585" text-anchor="start" font-weight="normal" textLength="5" lengthAdjust="spacingAndGlyphs" >98</text>
<text x="1085.938" y="677.6" font-size="4.4" fill="#858585" text-anchor="start" font-weight="normal" textLength="5" lengthAdjust="spacingAndGlyphs" >99</text>
<text x="1095.834" y="677.6" font-size="4.4" fill="#858585" text-anchor="start" font-weight="normal" textLength="5" lengthAdjust="spacingAndGlyphs" >00</text>
<text x="1105.73" y="677.6" font-size="4.4" fill="#858585" text-anchor="start" font-weight="normal" textLength="5" lengthAdjust="spacingAndGlyphs" >01</text>
<text x="1115.6260000000002" y="677.6" font-size="4.4" fill="#858585" text-anchor="start" font-weight="normal" textLength="5" lengthAdjust="spacingAndGlyphs" >02</text>
<text x="1125.522" y="677.6" font-size="4.4" fill="#858585" text-anchor="start" font-weight="normal" textLength="5" lengthAdjust="spacingAndGlyphs" >03</text>
<text x="1135.9180000000001" y="677.6" font-size="4.6" fill="#c8c8c8" text-anchor="start" font-weight="normal" textLength="11" lengthAdjust="spacingAndGlyphs" >1104</text>
<text x="1145.3140000000003" y="677.6" font-size="4.4" fill="#858585" text-anchor="start" font-weight="normal" textLength="5" lengthAdjust="spacingAndGlyphs" >05</text>
<path d="M116.13,681.5V684.5M126.03,681.5V684.5M135.92,681.5V684.5M145.82,681.5V684.5M155.71,681.5V684.5M165.61,681.5V684.5M175.51,681.5V684.5M185.40,680V686M195.30,681.5V684.5M205.19,681.5V684.5M215.09,681.5V684.5M224.99,681.5V684.5M234.88,681.5V684.5M244.78,681.5V684.5M254.67,681.5V684.5M264.57,681.5V684.5M274.47,681.5V684.5M284.36,681.5V684.5M294.26,681.5V684.5M304.15,680V686M314.05,681.5V684.5M323.95,681.5V684.5M333.84,681.5V684.5M343.74,681.5V684.5M353.63,681.5V684.5M363.53,681.5V684.5M373.43,681.5V684.5M383.32,681.5V684.5M393.22,681.5V684.5M403.11,681.5V684.5M413.01,681.5V684.5M422.91,680V686M432.80,681.5V684.5M442.70,681.5V684.5M452.59,681.5V684.5M462.49,681.5V684.5M472.39,681.5V684.5M482.28,681.5V684.5M492.18,681.5V684.5M502.07,681.5V684.5M511.97,681.5V684.5M521.87,681.5V684.5M531.76,681.5V684.5M541.66,680V686M551.55,681.5V684.5M561.45,681.5V684.5M571.35,681.5V684.5M581.24,681.5V684.5M591.14,681.5V684.5M601.03,681.5V684.5M610.93,681.5V684.5M620.83,681.5V684.5M630.72,681.5V684.5M640.62,681.5V684.5M650.51,681.5V684.5M660.41,680V686M670.31,681.5V684.5M680.20,681.5V684.5M690.10,681.5V684.5M699.99,681.5V684.5M709.89,681.5V684.5M719.79,681.5V684.5M729.68,681.5V684.5M739.58,681.5V684.5M749.47,681.5V684.5M759.37,681.5V684.5M769.27,681.5V684.5M779.16,680V686M789.06,681.5V684.5M798.95,681.5V684.5M808.85,681.5V684.5M818.75,681.5V684.5M828.64,681.5V684.5M838.54,681.5V684.5M848.43,681.5V684.5M858.33,681.5V684.5M868.23,681.5V684.5M878.12,681.5V684.5M888.02,681.5V684.5M897.91,680V686M907.81,681.5V684.5M917.71,681.5V684.5M927.60,681.5V684.5M937.50,681.5V684.5M947.39,681.5V684.5M957.29,681.5V684.5M967.19,681.5V684.5M977.08,681.5V684.5M986.98,681.5V684.5M996.87,681.5V684.5M1006.77,681.5V684.5M1016.67,680V686M1026.56,681.5V684.5M1036.46,681.5V684.5M1046.35,681.5V684.5M1056.25,681.5V684.5M1066.15,681.5V684.5M1076.04,681.5V684.5M1085.94,681.5V684.5M1095.83,681.5V684.5M1105.73,681.5V684.5M1115.63,681.5V684.5M1125.52,681.5V684.5M1135.42,680V686M1145.31,681.5V684.5" stroke="#a0a0a0" stroke-width="0.7"/>
<rect x="602.9300000000001" y="673.5" width="16" height="8" fill="#1a1a1a" stroke="#bbb" stroke-width="0.6" rx="1.5"/>
<text x="610.9300000000001" y="679.8" font-size="6" fill="#f0f0f0" text-anchor="middle" font-weight="normal" textLength="13" lengthAdjust="spacingAndGlyphs" >1051</text>
<path d="M608.9300000000001,681.5 l2,2 l2,-2 z" stroke="none" fill="#ddd" stroke-width="1" />
<rect x="1188" y="677" width="10.5" height="11" fill="#3a3a3a" />
<rect x="1189" y="678" width="8.5" height="9" fill="#555" />
<rect x="1190" y="679" width="2" height="2" fill="#e04040" />
<rect x="1193.5" y="682" width="2" height="2" fill="#40c040" />
<rect x="1190" y="684" width="2" height="2" fill="#f0f0f0" />
<rect x="1188" y="690.5" width="10.5" height="11.5" fill="#3a3a3a" />
<rect x="1189" y="691.5" width="8.5" height="9.5" fill="#1a1a2a" />
<path d="M1190,697 q3,-4 7,-1" stroke="#e0a030" fill="none" stroke-width="1" />
<rect x="1201" y="677" width="77" height="11" fill="#3d3d3d" />
<text x="1239" y="685" font-size="6" fill="#d8d8d8" text-anchor="middle" font-weight="normal" textLength="56" lengthAdjust="spacingAndGlyphs" >0 keys, 0/0 channels</text>
<path d="M1273,684.5 l1.5,-2.5 l1.5,2.5" stroke="#bbb" fill="none" stroke-width="0.7" />
<rect x="1201" y="691.25" width="74" height="10.75" fill="#3d3d3d" />
<text x="1227" y="699" font-size="6" fill="#d8d8d8" text-anchor="middle" font-weight="normal" textLength="42" lengthAdjust="spacingAndGlyphs" >Key All Channels</text>
<path d="M1273,695 l1,-1.3 l1,1.3 M1273,698.5 l1,1.3 l1,-1.3" stroke="#aaa" fill="none" stroke-width="0.6" />
<rect x="1277" y="691.25" width="3" height="10.75" fill="#2a2a2a" />
<circle cx="1166" cy="687" r="3" fill="none" stroke="#888" stroke-width="0.9"/>
<path d="M1163.8,689.2 l-2.5,2.5" stroke="#888" fill="none" stroke-width="1" />
<path d="M1178.5,689 l1.5,2 l1.5,-2 z" stroke="none" fill="#aaa" stroke-width="1" />
<ellipse cx="1141" cy="713" rx="4.5" ry="3.5" fill="#e0e0e0"/>
<rect x="1147.5" y="707.5" width="63.5" height="11.25" fill="#333" />
<text x="1155" y="715.6" font-size="6.2" fill="#d8d8d8" text-anchor="start" font-weight="normal" textLength="43" lengthAdjust="spacingAndGlyphs" >/obj/CFX_setup/...</text>
<path d="M1206.5,710.5 l1,-1.3 l1,1.3 M1206.5,714.5 l1,1.3 l1,-1.3" stroke="#aaa" fill="none" stroke-width="0.6" />
<path d="M1216,712 a4,4 0 0 1 7,-1 M1223,715 a4,4 0 0 1 -7,1" stroke="#666" fill="none" stroke-width="0.9" />
<rect x="1226" y="707.5" width="52" height="11.25" fill="#333" />
<text x="1234" y="715.6" font-size="6.2" fill="#d8d8d8" text-anchor="start" font-weight="normal" textLength="34" lengthAdjust="spacingAndGlyphs" >Auto Update</text>
<path d="M1273.5,710.5 l1,-1.3 l1,1.3 M1273.5,714.5 l1,1.3 l1,-1.3" stroke="#aaa" fill="none" stroke-width="0.6" />
<g opacity="0.13">
<path d="M1092,657 C1068,664 1058,690 1074,703 C1088,712 1106,705 1110,694 C1101,701 1086,701 1080,692 C1073,681 1078,666 1092,657 Z" stroke="none" fill="#e8e8e8" stroke-width="1" />
<path d="M1068,690 C1075,700 1092,704 1104,698" stroke="#e8e8e8" fill="none" stroke-width="1.2" />
<text x="1126" y="671" font-size="5.5" fill="#e8e8e8" text-anchor="start" font-weight="normal" textLength="14" lengthAdjust="spacingAndGlyphs" transform="rotate(-90 1126 671)">THE</text>
<text x="1131" y="672.5" font-size="18" fill="none" text-anchor="start" font-weight="normal" textLength="134" lengthAdjust="spacingAndGlyphs" stroke="#f0f0f0" stroke-width="1.2">GNOMON</text>
<text x="1131" y="697" font-size="17" fill="none" text-anchor="start" font-weight="normal" textLength="134" lengthAdjust="spacingAndGlyphs" stroke="#f0f0f0" stroke-width="1.1">WORKSHOP</text>
</g>
</svg></body></html>
